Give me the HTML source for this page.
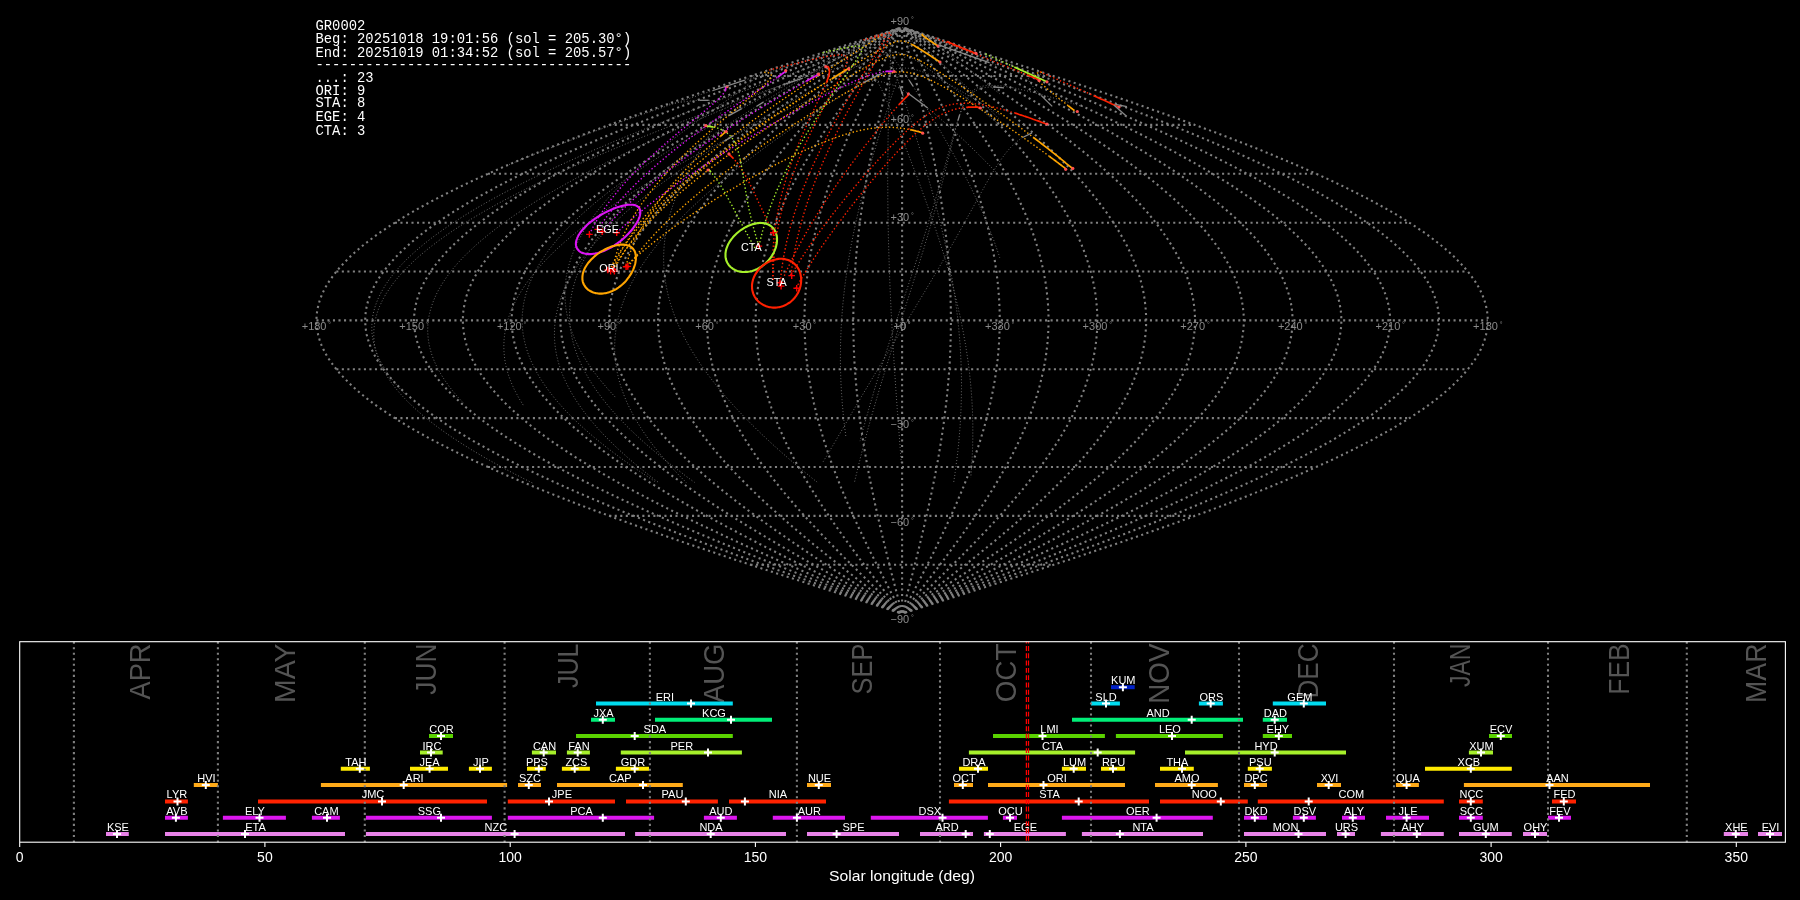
<!DOCTYPE html>
<html><head><meta charset="utf-8"><style>
html,body{margin:0;padding:0;background:#000;overflow:hidden}
svg{display:block;will-change:transform}

</style></head><body>
<svg width="1800" height="900" viewBox="0 0 1800 900" font-family="Liberation Sans, sans-serif">
<rect width="1800" height="900" fill="#000"/>
<g fill="none" stroke="#808080" stroke-width="2.08" stroke-dasharray="2.08 3.44"><path d="M750.5 564.8H1053.7"/><path d="M609.2 515.9H1195"/><path d="M487.9 467H1316.3"/><path d="M394.9 418.1H1409.3"/><path d="M336.3 369.3H1467.9"/><path d="M316.4 320.4H1487.8"/><path d="M336.3 271.5H1467.9"/><path d="M394.9 222.7H1409.3"/><path d="M487.9 173.8H1316.3"/><path d="M609.2 124.9H1195"/><path d="M750.5 76H1053.7"/><path d="M905.2 612.6L920.4 607.8L935.7 602.9L951 598L966.2 593.2L981.3 588.3L996.5 583.4L1011.5 578.5L1026.5 573.7L1041.4 568.8L1056.2 563.9L1070.9 559.1L1085.4 554.2L1099.9 549.3L1114.2 544.5L1128.4 539.6L1142.4 534.7L1156.2 529.8L1169.9 525L1183.4 520.1L1196.7 515.2L1209.8 510.4L1222.7 505.5L1235.4 500.6L1247.9 495.7L1260.1 490.9L1272.1 486L1283.8 481.1L1295.2 476.3L1306.4 471.4L1317.3 466.5L1328 461.7L1338.3 456.8L1348.4 451.9L1358.1 447L1367.6 442.2L1376.7 437.3L1385.5 432.4L1393.9 427.6L1402.1 422.7L1409.9 417.8L1417.3 412.9L1424.4 408.1L1431.1 403.2L1437.5 398.3L1443.5 393.5L1449.2 388.6L1454.4 383.7L1459.3 378.8L1463.9 374L1468 369.1L1471.7 364.2L1475.1 359.4L1478.1 354.5L1480.7 349.6L1482.8 344.8L1484.6 339.9L1486 335L1487 330.1L1487.6 325.3L1487.8 320.4L1487.6 315.5L1487 310.7L1486 305.8L1484.6 300.9L1482.8 296L1480.7 291.2L1478.1 286.3L1475.1 281.4L1471.7 276.6L1468 271.7L1463.9 266.8L1459.3 262L1454.4 257.1L1449.2 252.2L1443.5 247.3L1437.5 242.5L1431.1 237.6L1424.4 232.7L1417.3 227.9L1409.9 223L1402.1 218.1L1393.9 213.2L1385.5 208.4L1376.7 203.5L1367.6 198.6L1358.1 193.8L1348.4 188.9L1338.3 184L1328 179.1L1317.3 174.3L1306.4 169.4L1295.2 164.5L1283.8 159.7L1272.1 154.8L1260.1 149.9L1247.9 145.1L1235.4 140.2L1222.7 135.3L1209.8 130.4L1196.7 125.6L1183.4 120.7L1169.9 115.8L1156.2 111L1142.4 106.1L1128.4 101.2L1114.2 96.3L1099.9 91.5L1085.4 86.6L1070.9 81.7L1056.2 76.9L1041.4 72L1026.5 67.1L1011.5 62.3L996.5 57.4L981.3 52.5L966.2 47.6L951 42.8L935.7 37.9L920.4 33L905.2 28.2"/><path d="M904.9 612.6L918.9 607.8L932.9 602.9L946.9 598L960.8 593.2L974.7 588.3L988.6 583.4L1002.4 578.5L1016.1 573.7L1029.8 568.8L1043.3 563.9L1056.8 559.1L1070.2 554.2L1083.4 549.3L1096.5 544.5L1109.5 539.6L1122.4 534.7L1135.1 529.8L1147.6 525L1160 520.1L1172.2 515.2L1184.2 510.4L1196 505.5L1207.6 500.6L1219.1 495.7L1230.2 490.9L1241.2 486L1252 481.1L1262.5 476.3L1272.7 471.4L1282.7 466.5L1292.5 461.7L1302 456.8L1311.2 451.9L1320.1 447L1328.8 442.2L1337.1 437.3L1345.2 432.4L1353 427.6L1360.4 422.7L1367.5 417.8L1374.4 412.9L1380.9 408.1L1387 403.2L1392.9 398.3L1398.4 393.5L1403.6 388.6L1408.4 383.7L1412.9 378.8L1417 374L1420.8 369.1L1424.3 364.2L1427.4 359.4L1430.1 354.5L1432.4 349.6L1434.4 344.8L1436.1 339.9L1437.4 335L1438.3 330.1L1438.8 325.3L1439 320.4L1438.8 315.5L1438.3 310.7L1437.4 305.8L1436.1 300.9L1434.4 296L1432.4 291.2L1430.1 286.3L1427.4 281.4L1424.3 276.6L1420.8 271.7L1417 266.8L1412.9 262L1408.4 257.1L1403.6 252.2L1398.4 247.3L1392.9 242.5L1387 237.6L1380.9 232.7L1374.4 227.9L1367.5 223L1360.4 218.1L1353 213.2L1345.2 208.4L1337.1 203.5L1328.8 198.6L1320.1 193.8L1311.2 188.9L1302 184L1292.5 179.1L1282.7 174.3L1272.7 169.4L1262.5 164.5L1252 159.7L1241.2 154.8L1230.2 149.9L1219.1 145.1L1207.6 140.2L1196 135.3L1184.2 130.4L1172.2 125.6L1160 120.7L1147.6 115.8L1135.1 111L1122.4 106.1L1109.5 101.2L1096.5 96.3L1083.4 91.5L1070.2 86.6L1056.8 81.7L1043.3 76.9L1029.8 72L1016.1 67.1L1002.4 62.3L988.6 57.4L974.7 52.5L960.8 47.6L946.9 42.8L932.9 37.9L918.9 33L904.9 28.2"/><path d="M904.7 612.6L917.4 607.8L930.1 602.9L942.8 598L955.5 593.2L968.1 588.3L980.7 583.4L993.3 578.5L1005.7 573.7L1018.2 568.8L1030.5 563.9L1042.7 559.1L1054.9 554.2L1066.9 549.3L1078.8 544.5L1090.7 539.6L1102.3 534.7L1113.9 529.8L1125.3 525L1136.5 520.1L1147.6 515.2L1158.5 510.4L1169.3 505.5L1179.9 500.6L1190.2 495.7L1200.4 490.9L1210.4 486L1220.2 481.1L1229.7 476.3L1239 471.4L1248.1 466.5L1257 461.7L1265.6 456.8L1274 451.9L1282.1 447L1290 442.2L1297.6 437.3L1304.9 432.4L1312 427.6L1318.7 422.7L1325.2 417.8L1331.4 412.9L1337.3 408.1L1343 403.2L1348.3 398.3L1353.3 393.5L1358 388.6L1362.4 383.7L1366.5 378.8L1370.2 374L1373.7 369.1L1376.8 364.2L1379.6 359.4L1382.1 354.5L1384.2 349.6L1386.1 344.8L1387.5 339.9L1388.7 335L1389.5 330.1L1390 325.3L1390.2 320.4L1390 315.5L1389.5 310.7L1388.7 305.8L1387.5 300.9L1386.1 296L1384.2 291.2L1382.1 286.3L1379.6 281.4L1376.8 276.6L1373.7 271.7L1370.2 266.8L1366.5 262L1362.4 257.1L1358 252.2L1353.3 247.3L1348.3 242.5L1343 237.6L1337.3 232.7L1331.4 227.9L1325.2 223L1318.7 218.1L1312 213.2L1304.9 208.4L1297.6 203.5L1290 198.6L1282.1 193.8L1274 188.9L1265.6 184L1257 179.1L1248.1 174.3L1239 169.4L1229.7 164.5L1220.2 159.7L1210.4 154.8L1200.4 149.9L1190.2 145.1L1179.9 140.2L1169.3 135.3L1158.5 130.4L1147.6 125.6L1136.5 120.7L1125.3 115.8L1113.9 111L1102.3 106.1L1090.7 101.2L1078.8 96.3L1066.9 91.5L1054.9 86.6L1042.7 81.7L1030.5 76.9L1018.2 72L1005.7 67.1L993.3 62.3L980.7 57.4L968.1 52.5L955.5 47.6L942.8 42.8L930.1 37.9L917.4 33L904.7 28.2"/><path d="M904.4 612.6L915.9 607.8L927.3 602.9L938.7 598L950.2 593.2L961.5 588.3L972.9 583.4L984.2 578.5L995.4 573.7L1006.6 568.8L1017.6 563.9L1028.7 559.1L1039.6 554.2L1050.4 549.3L1061.2 544.5L1071.8 539.6L1082.3 534.7L1092.7 529.8L1103 525L1113.1 520.1L1123.1 515.2L1132.9 510.4L1142.6 505.5L1152.1 500.6L1161.4 495.7L1170.6 490.9L1179.6 486L1188.4 481.1L1197 476.3L1205.3 471.4L1213.5 466.5L1221.5 461.7L1229.3 456.8L1236.8 451.9L1244.1 447L1251.2 442.2L1258 437.3L1264.6 432.4L1271 427.6L1277.1 422.7L1282.9 417.8L1288.5 412.9L1293.8 408.1L1298.9 403.2L1303.7 398.3L1308.2 393.5L1312.4 388.6L1316.4 383.7L1320 378.8L1323.4 374L1326.5 369.1L1329.3 364.2L1331.9 359.4L1334.1 354.5L1336 349.6L1337.7 344.8L1339 339.9L1340 335L1340.8 330.1L1341.2 325.3L1341.4 320.4L1341.2 315.5L1340.8 310.7L1340 305.8L1339 300.9L1337.7 296L1336 291.2L1334.1 286.3L1331.9 281.4L1329.3 276.6L1326.5 271.7L1323.4 266.8L1320 262L1316.4 257.1L1312.4 252.2L1308.2 247.3L1303.7 242.5L1298.9 237.6L1293.8 232.7L1288.5 227.9L1282.9 223L1277.1 218.1L1271 213.2L1264.6 208.4L1258 203.5L1251.2 198.6L1244.1 193.8L1236.8 188.9L1229.3 184L1221.5 179.1L1213.5 174.3L1205.3 169.4L1197 164.5L1188.4 159.7L1179.6 154.8L1170.6 149.9L1161.4 145.1L1152.1 140.2L1142.6 135.3L1132.9 130.4L1123.1 125.6L1113.1 120.7L1103 115.8L1092.7 111L1082.3 106.1L1071.8 101.2L1061.2 96.3L1050.4 91.5L1039.6 86.6L1028.7 81.7L1017.6 76.9L1006.6 72L995.4 67.1L984.2 62.3L972.9 57.4L961.5 52.5L950.2 47.6L938.7 42.8L927.3 37.9L915.9 33L904.4 28.2"/><path d="M904.1 612.6L914.3 607.8L924.5 602.9L934.7 598L944.8 593.2L954.9 588.3L965 583.4L975 578.5L985 573.7L994.9 568.8L1004.8 563.9L1014.6 559.1L1024.3 554.2L1034 549.3L1043.5 544.5L1052.9 539.6L1062.3 534.7L1071.5 529.8L1080.6 525L1089.6 520.1L1098.5 515.2L1107.3 510.4L1115.9 505.5L1124.3 500.6L1132.6 495.7L1140.8 490.9L1148.7 486L1156.6 481.1L1164.2 476.3L1171.7 471.4L1178.9 466.5L1186 461.7L1192.9 456.8L1199.6 451.9L1206.1 447L1212.4 442.2L1218.5 437.3L1224.3 432.4L1230 427.6L1235.4 422.7L1240.6 417.8L1245.6 412.9L1250.3 408.1L1254.8 403.2L1259 398.3L1263.1 393.5L1266.8 388.6L1270.3 383.7L1273.6 378.8L1276.6 374L1279.4 369.1L1281.9 364.2L1284.1 359.4L1286.1 354.5L1287.8 349.6L1289.3 344.8L1290.5 339.9L1291.4 335L1292 330.1L1292.4 325.3L1292.6 320.4L1292.4 315.5L1292 310.7L1291.4 305.8L1290.5 300.9L1289.3 296L1287.8 291.2L1286.1 286.3L1284.1 281.4L1281.9 276.6L1279.4 271.7L1276.6 266.8L1273.6 262L1270.3 257.1L1266.8 252.2L1263.1 247.3L1259 242.5L1254.8 237.6L1250.3 232.7L1245.6 227.9L1240.6 223L1235.4 218.1L1230 213.2L1224.3 208.4L1218.5 203.5L1212.4 198.6L1206.1 193.8L1199.6 188.9L1192.9 184L1186 179.1L1178.9 174.3L1171.7 169.4L1164.2 164.5L1156.6 159.7L1148.7 154.8L1140.8 149.9L1132.6 145.1L1124.3 140.2L1115.9 135.3L1107.3 130.4L1098.5 125.6L1089.6 120.7L1080.6 115.8L1071.5 111L1062.3 106.1L1052.9 101.2L1043.5 96.3L1034 91.5L1024.3 86.6L1014.6 81.7L1004.8 76.9L994.9 72L985 67.1L975 62.3L965 57.4L954.9 52.5L944.8 47.6L934.7 42.8L924.5 37.9L914.3 33L904.1 28.2"/><path d="M903.9 612.6L912.8 607.8L921.7 602.9L930.6 598L939.5 593.2L948.3 588.3L957.1 583.4L965.9 578.5L974.7 573.7L983.3 568.8L992 563.9L1000.5 559.1L1009 554.2L1017.5 549.3L1025.8 544.5L1034.1 539.6L1042.3 534.7L1050.3 529.8L1058.3 525L1066.2 520.1L1074 515.2L1081.6 510.4L1089.1 505.5L1096.5 500.6L1103.8 495.7L1110.9 490.9L1117.9 486L1124.7 481.1L1131.4 476.3L1138 471.4L1144.3 466.5L1150.5 461.7L1156.6 456.8L1162.4 451.9L1168.1 447L1173.6 442.2L1178.9 437.3L1184.1 432.4L1189 427.6L1193.7 422.7L1198.3 417.8L1202.6 412.9L1206.8 408.1L1210.7 403.2L1214.4 398.3L1217.9 393.5L1221.2 388.6L1224.3 383.7L1227.2 378.8L1229.8 374L1232.2 369.1L1234.4 364.2L1236.4 359.4L1238.1 354.5L1239.6 349.6L1240.9 344.8L1241.9 339.9L1242.7 335L1243.3 330.1L1243.7 325.3L1243.8 320.4L1243.7 315.5L1243.3 310.7L1242.7 305.8L1241.9 300.9L1240.9 296L1239.6 291.2L1238.1 286.3L1236.4 281.4L1234.4 276.6L1232.2 271.7L1229.8 266.8L1227.2 262L1224.3 257.1L1221.2 252.2L1217.9 247.3L1214.4 242.5L1210.7 237.6L1206.8 232.7L1202.6 227.9L1198.3 223L1193.7 218.1L1189 213.2L1184.1 208.4L1178.9 203.5L1173.6 198.6L1168.1 193.8L1162.4 188.9L1156.6 184L1150.5 179.1L1144.3 174.3L1138 169.4L1131.4 164.5L1124.7 159.7L1117.9 154.8L1110.9 149.9L1103.8 145.1L1096.5 140.2L1089.1 135.3L1081.6 130.4L1074 125.6L1066.2 120.7L1058.3 115.8L1050.3 111L1042.3 106.1L1034.1 101.2L1025.8 96.3L1017.5 91.5L1009 86.6L1000.5 81.7L992 76.9L983.3 72L974.7 67.1L965.9 62.3L957.1 57.4L948.3 52.5L939.5 47.6L930.6 42.8L921.7 37.9L912.8 33L903.9 28.2"/><path d="M903.6 612.6L911.3 607.8L918.9 602.9L926.5 598L934.1 593.2L941.7 588.3L949.3 583.4L956.8 578.5L964.3 573.7L971.7 568.8L979.1 563.9L986.5 559.1L993.8 554.2L1001 549.3L1008.1 544.5L1015.2 539.6L1022.2 534.7L1029.2 529.8L1036 525L1042.8 520.1L1049.4 515.2L1056 510.4L1062.4 505.5L1068.8 500.6L1075 495.7L1081.1 490.9L1087.1 486L1092.9 481.1L1098.7 476.3L1104.3 471.4L1109.7 466.5L1115 461.7L1120.2 456.8L1125.2 451.9L1130.1 447L1134.8 442.2L1139.4 437.3L1143.8 432.4L1148 427.6L1152.1 422.7L1156 417.8L1159.7 412.9L1163.2 408.1L1166.6 403.2L1169.8 398.3L1172.8 393.5L1175.6 388.6L1178.3 383.7L1180.7 378.8L1183 374L1185 369.1L1186.9 364.2L1188.6 359.4L1190.1 354.5L1191.4 349.6L1192.5 344.8L1193.4 339.9L1194.1 335L1194.6 330.1L1194.9 325.3L1195 320.4L1194.9 315.5L1194.6 310.7L1194.1 305.8L1193.4 300.9L1192.5 296L1191.4 291.2L1190.1 286.3L1188.6 281.4L1186.9 276.6L1185 271.7L1183 266.8L1180.7 262L1178.3 257.1L1175.6 252.2L1172.8 247.3L1169.8 242.5L1166.6 237.6L1163.2 232.7L1159.7 227.9L1156 223L1152.1 218.1L1148 213.2L1143.8 208.4L1139.4 203.5L1134.8 198.6L1130.1 193.8L1125.2 188.9L1120.2 184L1115 179.1L1109.7 174.3L1104.3 169.4L1098.7 164.5L1092.9 159.7L1087.1 154.8L1081.1 149.9L1075 145.1L1068.8 140.2L1062.4 135.3L1056 130.4L1049.4 125.6L1042.8 120.7L1036 115.8L1029.2 111L1022.2 106.1L1015.2 101.2L1008.1 96.3L1001 91.5L993.8 86.6L986.5 81.7L979.1 76.9L971.7 72L964.3 67.1L956.8 62.3L949.3 57.4L941.7 52.5L934.1 47.6L926.5 42.8L918.9 37.9L911.3 33L903.6 28.2"/><path d="M903.4 612.6L909.7 607.8L916.1 602.9L922.5 598L928.8 593.2L935.1 588.3L941.4 583.4L947.7 578.5L953.9 573.7L960.1 568.8L966.3 563.9L972.4 559.1L978.5 554.2L984.5 549.3L990.5 544.5L996.4 539.6L1002.2 534.7L1008 529.8L1013.7 525L1019.3 520.1L1024.9 515.2L1030.3 510.4L1035.7 505.5L1041 500.6L1046.2 495.7L1051.3 490.9L1056.2 486L1061.1 481.1L1065.9 476.3L1070.6 471.4L1075.1 466.5L1079.6 461.7L1083.9 456.8L1088.1 451.9L1092.1 447L1096 442.2L1099.8 437.3L1103.5 432.4L1107 427.6L1110.4 422.7L1113.7 417.8L1116.8 412.9L1119.7 408.1L1122.5 403.2L1125.2 398.3L1127.7 393.5L1130 388.6L1132.2 383.7L1134.3 378.8L1136.2 374L1137.9 369.1L1139.5 364.2L1140.9 359.4L1142.1 354.5L1143.2 349.6L1144.1 344.8L1144.8 339.9L1145.4 335L1145.8 330.1L1146.1 325.3L1146.2 320.4L1146.1 315.5L1145.8 310.7L1145.4 305.8L1144.8 300.9L1144.1 296L1143.2 291.2L1142.1 286.3L1140.9 281.4L1139.5 276.6L1137.9 271.7L1136.2 266.8L1134.3 262L1132.2 257.1L1130 252.2L1127.7 247.3L1125.2 242.5L1122.5 237.6L1119.7 232.7L1116.8 227.9L1113.7 223L1110.4 218.1L1107 213.2L1103.5 208.4L1099.8 203.5L1096 198.6L1092.1 193.8L1088.1 188.9L1083.9 184L1079.6 179.1L1075.1 174.3L1070.6 169.4L1065.9 164.5L1061.1 159.7L1056.2 154.8L1051.3 149.9L1046.2 145.1L1041 140.2L1035.7 135.3L1030.3 130.4L1024.9 125.6L1019.3 120.7L1013.7 115.8L1008 111L1002.2 106.1L996.4 101.2L990.5 96.3L984.5 91.5L978.5 86.6L972.4 81.7L966.3 76.9L960.1 72L953.9 67.1L947.7 62.3L941.4 57.4L935.1 52.5L928.8 47.6L922.5 42.8L916.1 37.9L909.7 33L903.4 28.2"/><path d="M903.1 612.6L908.2 607.8L913.3 602.9L918.4 598L923.5 593.2L928.5 588.3L933.6 583.4L938.6 578.5L943.6 573.7L948.5 568.8L953.5 563.9L958.4 559.1L963.2 554.2L968 549.3L972.8 544.5L977.5 539.6L982.2 534.7L986.8 529.8L991.4 525L995.9 520.1L1000.3 515.2L1004.7 510.4L1009 505.5L1013.2 500.6L1017.4 495.7L1021.4 490.9L1025.4 486L1029.3 481.1L1033.1 476.3L1036.9 471.4L1040.5 466.5L1044.1 461.7L1047.5 456.8L1050.9 451.9L1054.1 447L1057.3 442.2L1060.3 437.3L1063.2 432.4L1066 427.6L1068.8 422.7L1071.4 417.8L1073.8 412.9L1076.2 408.1L1078.4 403.2L1080.6 398.3L1082.6 393.5L1084.5 388.6L1086.2 383.7L1087.8 378.8L1089.4 374L1090.7 369.1L1092 364.2L1093.1 359.4L1094.1 354.5L1095 349.6L1095.7 344.8L1096.3 339.9L1096.7 335L1097.1 330.1L1097.3 325.3L1097.3 320.4L1097.3 315.5L1097.1 310.7L1096.7 305.8L1096.3 300.9L1095.7 296L1095 291.2L1094.1 286.3L1093.1 281.4L1092 276.6L1090.7 271.7L1089.4 266.8L1087.8 262L1086.2 257.1L1084.5 252.2L1082.6 247.3L1080.6 242.5L1078.4 237.6L1076.2 232.7L1073.8 227.9L1071.4 223L1068.8 218.1L1066 213.2L1063.2 208.4L1060.3 203.5L1057.3 198.6L1054.1 193.8L1050.9 188.9L1047.5 184L1044.1 179.1L1040.5 174.3L1036.9 169.4L1033.1 164.5L1029.3 159.7L1025.4 154.8L1021.4 149.9L1017.4 145.1L1013.2 140.2L1009 135.3L1004.7 130.4L1000.3 125.6L995.9 120.7L991.4 115.8L986.8 111L982.2 106.1L977.5 101.2L972.8 96.3L968 91.5L963.2 86.6L958.4 81.7L953.5 76.9L948.5 72L943.6 67.1L938.6 62.3L933.6 57.4L928.5 52.5L923.5 47.6L918.4 42.8L913.3 37.9L908.2 33L903.1 28.2"/><path d="M902.9 612.6L906.7 607.8L910.5 602.9L914.3 598L918.1 593.2L921.9 588.3L925.7 583.4L929.5 578.5L933.2 573.7L936.9 568.8L940.6 563.9L944.3 559.1L947.9 554.2L951.5 549.3L955.1 544.5L958.7 539.6L962.2 534.7L965.6 529.8L969.1 525L972.4 520.1L975.8 515.2L979 510.4L982.3 505.5L985.4 500.6L988.5 495.7L991.6 490.9L994.6 486L997.5 481.1L1000.4 476.3L1003.2 471.4L1005.9 466.5L1008.6 461.7L1011.2 456.8L1013.7 451.9L1016.1 447L1018.5 442.2L1020.7 437.3L1022.9 432.4L1025.1 427.6L1027.1 422.7L1029 417.8L1030.9 412.9L1032.7 408.1L1034.4 403.2L1036 398.3L1037.5 393.5L1038.9 388.6L1040.2 383.7L1041.4 378.8L1042.5 374L1043.6 369.1L1044.5 364.2L1045.4 359.4L1046.1 354.5L1046.7 349.6L1047.3 344.8L1047.7 339.9L1048.1 335L1048.3 330.1L1048.5 325.3L1048.5 320.4L1048.5 315.5L1048.3 310.7L1048.1 305.8L1047.7 300.9L1047.3 296L1046.7 291.2L1046.1 286.3L1045.4 281.4L1044.5 276.6L1043.6 271.7L1042.5 266.8L1041.4 262L1040.2 257.1L1038.9 252.2L1037.5 247.3L1036 242.5L1034.4 237.6L1032.7 232.7L1030.9 227.9L1029 223L1027.1 218.1L1025.1 213.2L1022.9 208.4L1020.7 203.5L1018.5 198.6L1016.1 193.8L1013.7 188.9L1011.2 184L1008.6 179.1L1005.9 174.3L1003.2 169.4L1000.4 164.5L997.5 159.7L994.6 154.8L991.6 149.9L988.5 145.1L985.4 140.2L982.3 135.3L979 130.4L975.8 125.6L972.4 120.7L969.1 115.8L965.6 111L962.2 106.1L958.7 101.2L955.1 96.3L951.5 91.5L947.9 86.6L944.3 81.7L940.6 76.9L936.9 72L933.2 67.1L929.5 62.3L925.7 57.4L921.9 52.5L918.1 47.6L914.3 42.8L910.5 37.9L906.7 33L902.9 28.2"/><path d="M902.6 612.6L905.2 607.8L907.7 602.9L910.2 598L912.8 593.2L915.3 588.3L917.8 583.4L920.3 578.5L922.8 573.7L925.3 568.8L927.8 563.9L930.2 559.1L932.7 554.2L935.1 549.3L937.4 544.5L939.8 539.6L942.1 534.7L944.5 529.8L946.7 525L949 520.1L951.2 515.2L953.4 510.4L955.5 505.5L957.7 500.6L959.7 495.7L961.8 490.9L963.8 486L965.7 481.1L967.6 476.3L969.5 471.4L971.3 466.5L973.1 461.7L974.8 456.8L976.5 451.9L978.1 447L979.7 442.2L981.2 437.3L982.7 432.4L984.1 427.6L985.4 422.7L986.7 417.8L988 412.9L989.1 408.1L990.3 403.2L991.3 398.3L992.3 393.5L993.3 388.6L994.2 383.7L995 378.8L995.7 374L996.4 369.1L997 364.2L997.6 359.4L998.1 354.5L998.5 349.6L998.9 344.8L999.2 339.9L999.4 335L999.6 330.1L999.7 325.3L999.7 320.4L999.7 315.5L999.6 310.7L999.4 305.8L999.2 300.9L998.9 296L998.5 291.2L998.1 286.3L997.6 281.4L997 276.6L996.4 271.7L995.7 266.8L995 262L994.2 257.1L993.3 252.2L992.3 247.3L991.3 242.5L990.3 237.6L989.1 232.7L988 227.9L986.7 223L985.4 218.1L984.1 213.2L982.7 208.4L981.2 203.5L979.7 198.6L978.1 193.8L976.5 188.9L974.8 184L973.1 179.1L971.3 174.3L969.5 169.4L967.6 164.5L965.7 159.7L963.8 154.8L961.8 149.9L959.7 145.1L957.7 140.2L955.5 135.3L953.4 130.4L951.2 125.6L949 120.7L946.7 115.8L944.5 111L942.1 106.1L939.8 101.2L937.4 96.3L935.1 91.5L932.7 86.6L930.2 81.7L927.8 76.9L925.3 72L922.8 67.1L920.3 62.3L917.8 57.4L915.3 52.5L912.8 47.6L910.2 42.8L907.7 37.9L905.2 33L902.6 28.2"/><path d="M902.4 612.6L903.6 607.8L904.9 602.9L906.2 598L907.4 593.2L908.7 588.3L910 583.4L911.2 578.5L912.5 573.7L913.7 568.8L914.9 563.9L916.2 559.1L917.4 554.2L918.6 549.3L919.8 544.5L921 539.6L922.1 534.7L923.3 529.8L924.4 525L925.5 520.1L926.7 515.2L927.7 510.4L928.8 505.5L929.9 500.6L930.9 495.7L931.9 490.9L932.9 486L933.9 481.1L934.9 476.3L935.8 471.4L936.7 466.5L937.6 461.7L938.5 456.8L939.3 451.9L940.1 447L940.9 442.2L941.6 437.3L942.4 432.4L943.1 427.6L943.8 422.7L944.4 417.8L945 412.9L945.6 408.1L946.2 403.2L946.7 398.3L947.2 393.5L947.7 388.6L948.1 383.7L948.5 378.8L948.9 374L949.3 369.1L949.6 364.2L949.9 359.4L950.1 354.5L950.3 349.6L950.5 344.8L950.6 339.9L950.8 335L950.8 330.1L950.9 325.3L950.9 320.4L950.9 315.5L950.8 310.7L950.8 305.8L950.6 300.9L950.5 296L950.3 291.2L950.1 286.3L949.9 281.4L949.6 276.6L949.3 271.7L948.9 266.8L948.5 262L948.1 257.1L947.7 252.2L947.2 247.3L946.7 242.5L946.2 237.6L945.6 232.7L945 227.9L944.4 223L943.8 218.1L943.1 213.2L942.4 208.4L941.6 203.5L940.9 198.6L940.1 193.8L939.3 188.9L938.5 184L937.6 179.1L936.7 174.3L935.8 169.4L934.9 164.5L933.9 159.7L932.9 154.8L931.9 149.9L930.9 145.1L929.9 140.2L928.8 135.3L927.7 130.4L926.7 125.6L925.5 120.7L924.4 115.8L923.3 111L922.1 106.1L921 101.2L919.8 96.3L918.6 91.5L917.4 86.6L916.2 81.7L914.9 76.9L913.7 72L912.5 67.1L911.2 62.3L910 57.4L908.7 52.5L907.4 47.6L906.2 42.8L904.9 37.9L903.6 33L902.4 28.2"/><path d="M902.1 612.6L902.1 607.8L902.1 602.9L902.1 598L902.1 593.2L902.1 588.3L902.1 583.4L902.1 578.5L902.1 573.7L902.1 568.8L902.1 563.9L902.1 559.1L902.1 554.2L902.1 549.3L902.1 544.5L902.1 539.6L902.1 534.7L902.1 529.8L902.1 525L902.1 520.1L902.1 515.2L902.1 510.4L902.1 505.5L902.1 500.6L902.1 495.7L902.1 490.9L902.1 486L902.1 481.1L902.1 476.3L902.1 471.4L902.1 466.5L902.1 461.7L902.1 456.8L902.1 451.9L902.1 447L902.1 442.2L902.1 437.3L902.1 432.4L902.1 427.6L902.1 422.7L902.1 417.8L902.1 412.9L902.1 408.1L902.1 403.2L902.1 398.3L902.1 393.5L902.1 388.6L902.1 383.7L902.1 378.8L902.1 374L902.1 369.1L902.1 364.2L902.1 359.4L902.1 354.5L902.1 349.6L902.1 344.8L902.1 339.9L902.1 335L902.1 330.1L902.1 325.3L902.1 320.4L902.1 315.5L902.1 310.7L902.1 305.8L902.1 300.9L902.1 296L902.1 291.2L902.1 286.3L902.1 281.4L902.1 276.6L902.1 271.7L902.1 266.8L902.1 262L902.1 257.1L902.1 252.2L902.1 247.3L902.1 242.5L902.1 237.6L902.1 232.7L902.1 227.9L902.1 223L902.1 218.1L902.1 213.2L902.1 208.4L902.1 203.5L902.1 198.6L902.1 193.8L902.1 188.9L902.1 184L902.1 179.1L902.1 174.3L902.1 169.4L902.1 164.5L902.1 159.7L902.1 154.8L902.1 149.9L902.1 145.1L902.1 140.2L902.1 135.3L902.1 130.4L902.1 125.6L902.1 120.7L902.1 115.8L902.1 111L902.1 106.1L902.1 101.2L902.1 96.3L902.1 91.5L902.1 86.6L902.1 81.7L902.1 76.9L902.1 72L902.1 67.1L902.1 62.3L902.1 57.4L902.1 52.5L902.1 47.6L902.1 42.8L902.1 37.9L902.1 33L902.1 28.2"/><path d="M901.8 612.6L900.6 607.8L899.3 602.9L898 598L896.8 593.2L895.5 588.3L894.2 583.4L893 578.5L891.7 573.7L890.5 568.8L889.3 563.9L888 559.1L886.8 554.2L885.6 549.3L884.4 544.5L883.2 539.6L882.1 534.7L880.9 529.8L879.8 525L878.7 520.1L877.5 515.2L876.5 510.4L875.4 505.5L874.3 500.6L873.3 495.7L872.3 490.9L871.3 486L870.3 481.1L869.3 476.3L868.4 471.4L867.5 466.5L866.6 461.7L865.7 456.8L864.9 451.9L864.1 447L863.3 442.2L862.6 437.3L861.8 432.4L861.1 427.6L860.4 422.7L859.8 417.8L859.2 412.9L858.6 408.1L858 403.2L857.5 398.3L857 393.5L856.5 388.6L856.1 383.7L855.7 378.8L855.3 374L854.9 369.1L854.6 364.2L854.3 359.4L854.1 354.5L853.9 349.6L853.7 344.8L853.6 339.9L853.4 335L853.4 330.1L853.3 325.3L853.3 320.4L853.3 315.5L853.4 310.7L853.4 305.8L853.6 300.9L853.7 296L853.9 291.2L854.1 286.3L854.3 281.4L854.6 276.6L854.9 271.7L855.3 266.8L855.7 262L856.1 257.1L856.5 252.2L857 247.3L857.5 242.5L858 237.6L858.6 232.7L859.2 227.9L859.8 223L860.4 218.1L861.1 213.2L861.8 208.4L862.6 203.5L863.3 198.6L864.1 193.8L864.9 188.9L865.7 184L866.6 179.1L867.5 174.3L868.4 169.4L869.3 164.5L870.3 159.7L871.3 154.8L872.3 149.9L873.3 145.1L874.3 140.2L875.4 135.3L876.5 130.4L877.5 125.6L878.7 120.7L879.8 115.8L880.9 111L882.1 106.1L883.2 101.2L884.4 96.3L885.6 91.5L886.8 86.6L888 81.7L889.3 76.9L890.5 72L891.7 67.1L893 62.3L894.2 57.4L895.5 52.5L896.8 47.6L898 42.8L899.3 37.9L900.6 33L901.8 28.2"/><path d="M901.6 612.6L899 607.8L896.5 602.9L894 598L891.4 593.2L888.9 588.3L886.4 583.4L883.9 578.5L881.4 573.7L878.9 568.8L876.4 563.9L874 559.1L871.5 554.2L869.1 549.3L866.8 544.5L864.4 539.6L862.1 534.7L859.7 529.8L857.5 525L855.2 520.1L853 515.2L850.8 510.4L848.7 505.5L846.5 500.6L844.5 495.7L842.4 490.9L840.4 486L838.5 481.1L836.6 476.3L834.7 471.4L832.9 466.5L831.1 461.7L829.4 456.8L827.7 451.9L826.1 447L824.5 442.2L823 437.3L821.5 432.4L820.1 427.6L818.8 422.7L817.5 417.8L816.2 412.9L815.1 408.1L813.9 403.2L812.9 398.3L811.9 393.5L810.9 388.6L810 383.7L809.2 378.8L808.5 374L807.8 369.1L807.2 364.2L806.6 359.4L806.1 354.5L805.7 349.6L805.3 344.8L805 339.9L804.8 335L804.6 330.1L804.5 325.3L804.5 320.4L804.5 315.5L804.6 310.7L804.8 305.8L805 300.9L805.3 296L805.7 291.2L806.1 286.3L806.6 281.4L807.2 276.6L807.8 271.7L808.5 266.8L809.2 262L810 257.1L810.9 252.2L811.9 247.3L812.9 242.5L813.9 237.6L815.1 232.7L816.2 227.9L817.5 223L818.8 218.1L820.1 213.2L821.5 208.4L823 203.5L824.5 198.6L826.1 193.8L827.7 188.9L829.4 184L831.1 179.1L832.9 174.3L834.7 169.4L836.6 164.5L838.5 159.7L840.4 154.8L842.4 149.9L844.5 145.1L846.5 140.2L848.7 135.3L850.8 130.4L853 125.6L855.2 120.7L857.5 115.8L859.7 111L862.1 106.1L864.4 101.2L866.8 96.3L869.1 91.5L871.5 86.6L874 81.7L876.4 76.9L878.9 72L881.4 67.1L883.9 62.3L886.4 57.4L888.9 52.5L891.4 47.6L894 42.8L896.5 37.9L899 33L901.6 28.2"/><path d="M901.3 612.6L897.5 607.8L893.7 602.9L889.9 598L886.1 593.2L882.3 588.3L878.5 583.4L874.7 578.5L871 573.7L867.3 568.8L863.6 563.9L859.9 559.1L856.3 554.2L852.7 549.3L849.1 544.5L845.5 539.6L842 534.7L838.6 529.8L835.1 525L831.8 520.1L828.4 515.2L825.2 510.4L821.9 505.5L818.8 500.6L815.7 495.7L812.6 490.9L809.6 486L806.7 481.1L803.8 476.3L801 471.4L798.3 466.5L795.6 461.7L793 456.8L790.5 451.9L788.1 447L785.7 442.2L783.5 437.3L781.3 432.4L779.1 427.6L777.1 422.7L775.2 417.8L773.3 412.9L771.5 408.1L769.8 403.2L768.2 398.3L766.7 393.5L765.3 388.6L764 383.7L762.8 378.8L761.7 374L760.6 369.1L759.7 364.2L758.8 359.4L758.1 354.5L757.5 349.6L756.9 344.8L756.5 339.9L756.1 335L755.9 330.1L755.7 325.3L755.7 320.4L755.7 315.5L755.9 310.7L756.1 305.8L756.5 300.9L756.9 296L757.5 291.2L758.1 286.3L758.8 281.4L759.7 276.6L760.6 271.7L761.7 266.8L762.8 262L764 257.1L765.3 252.2L766.7 247.3L768.2 242.5L769.8 237.6L771.5 232.7L773.3 227.9L775.2 223L777.1 218.1L779.1 213.2L781.3 208.4L783.5 203.5L785.7 198.6L788.1 193.8L790.5 188.9L793 184L795.6 179.1L798.3 174.3L801 169.4L803.8 164.5L806.7 159.7L809.6 154.8L812.6 149.9L815.7 145.1L818.8 140.2L821.9 135.3L825.2 130.4L828.4 125.6L831.8 120.7L835.1 115.8L838.6 111L842 106.1L845.5 101.2L849.1 96.3L852.7 91.5L856.3 86.6L859.9 81.7L863.6 76.9L867.3 72L871 67.1L874.7 62.3L878.5 57.4L882.3 52.5L886.1 47.6L889.9 42.8L893.7 37.9L897.5 33L901.3 28.2"/><path d="M901.1 612.6L896 607.8L890.9 602.9L885.8 598L880.7 593.2L875.7 588.3L870.6 583.4L865.6 578.5L860.6 573.7L855.7 568.8L850.7 563.9L845.8 559.1L841 554.2L836.2 549.3L831.4 544.5L826.7 539.6L822 534.7L817.4 529.8L812.8 525L808.3 520.1L803.9 515.2L799.5 510.4L795.2 505.5L791 500.6L786.8 495.7L782.8 490.9L778.8 486L774.9 481.1L771.1 476.3L767.3 471.4L763.7 466.5L760.1 461.7L756.7 456.8L753.3 451.9L750.1 447L746.9 442.2L743.9 437.3L741 432.4L738.2 427.6L735.4 422.7L732.8 417.8L730.4 412.9L728 408.1L725.8 403.2L723.6 398.3L721.6 393.5L719.7 388.6L718 383.7L716.4 378.8L714.8 374L713.5 369.1L712.2 364.2L711.1 359.4L710.1 354.5L709.2 349.6L708.5 344.8L707.9 339.9L707.5 335L707.1 330.1L706.9 325.3L706.9 320.4L706.9 315.5L707.1 310.7L707.5 305.8L707.9 300.9L708.5 296L709.2 291.2L710.1 286.3L711.1 281.4L712.2 276.6L713.5 271.7L714.8 266.8L716.4 262L718 257.1L719.7 252.2L721.6 247.3L723.6 242.5L725.8 237.6L728 232.7L730.4 227.9L732.8 223L735.4 218.1L738.2 213.2L741 208.4L743.9 203.5L746.9 198.6L750.1 193.8L753.3 188.9L756.7 184L760.1 179.1L763.7 174.3L767.3 169.4L771.1 164.5L774.9 159.7L778.8 154.8L782.8 149.9L786.8 145.1L791 140.2L795.2 135.3L799.5 130.4L803.9 125.6L808.3 120.7L812.8 115.8L817.4 111L822 106.1L826.7 101.2L831.4 96.3L836.2 91.5L841 86.6L845.8 81.7L850.7 76.9L855.7 72L860.6 67.1L865.6 62.3L870.6 57.4L875.7 52.5L880.7 47.6L885.8 42.8L890.9 37.9L896 33L901.1 28.2"/><path d="M900.8 612.6L894.5 607.8L888.1 602.9L881.7 598L875.4 593.2L869.1 588.3L862.8 583.4L856.5 578.5L850.3 573.7L844.1 568.8L837.9 563.9L831.8 559.1L825.7 554.2L819.7 549.3L813.7 544.5L807.8 539.6L802 534.7L796.2 529.8L790.5 525L784.9 520.1L779.3 515.2L773.9 510.4L768.5 505.5L763.2 500.6L758 495.7L752.9 490.9L748 486L743.1 481.1L738.3 476.3L733.6 471.4L729.1 466.5L724.6 461.7L720.3 456.8L716.1 451.9L712.1 447L708.2 442.2L704.4 437.3L700.7 432.4L697.2 427.6L693.8 422.7L690.5 417.8L687.4 412.9L684.5 408.1L681.7 403.2L679 398.3L676.5 393.5L674.2 388.6L672 383.7L669.9 378.8L668 374L666.3 369.1L664.7 364.2L663.3 359.4L662.1 354.5L661 349.6L660.1 344.8L659.4 339.9L658.8 335L658.4 330.1L658.1 325.3L658 320.4L658.1 315.5L658.4 310.7L658.8 305.8L659.4 300.9L660.1 296L661 291.2L662.1 286.3L663.3 281.4L664.7 276.6L666.3 271.7L668 266.8L669.9 262L672 257.1L674.2 252.2L676.5 247.3L679 242.5L681.7 237.6L684.5 232.7L687.4 227.9L690.5 223L693.8 218.1L697.2 213.2L700.7 208.4L704.4 203.5L708.2 198.6L712.1 193.8L716.1 188.9L720.3 184L724.6 179.1L729.1 174.3L733.6 169.4L738.3 164.5L743.1 159.7L748 154.8L752.9 149.9L758 145.1L763.2 140.2L768.5 135.3L773.9 130.4L779.3 125.6L784.9 120.7L790.5 115.8L796.2 111L802 106.1L807.8 101.2L813.7 96.3L819.7 91.5L825.7 86.6L831.8 81.7L837.9 76.9L844.1 72L850.3 67.1L856.5 62.3L862.8 57.4L869.1 52.5L875.4 47.6L881.7 42.8L888.1 37.9L894.5 33L900.8 28.2"/><path d="M900.6 612.6L892.9 607.8L885.3 602.9L877.7 598L870.1 593.2L862.5 588.3L854.9 583.4L847.4 578.5L839.9 573.7L832.5 568.8L825.1 563.9L817.7 559.1L810.4 554.2L803.2 549.3L796.1 544.5L789 539.6L782 534.7L775 529.8L768.2 525L761.4 520.1L754.8 515.2L748.2 510.4L741.8 505.5L735.4 500.6L729.2 495.7L723.1 490.9L717.1 486L711.3 481.1L705.5 476.3L699.9 471.4L694.5 466.5L689.2 461.7L684 456.8L679 451.9L674.1 447L669.4 442.2L664.8 437.3L660.4 432.4L656.2 427.6L652.1 422.7L648.2 417.8L644.5 412.9L641 408.1L637.6 403.2L634.4 398.3L631.4 393.5L628.6 388.6L625.9 383.7L623.5 378.8L621.2 374L619.2 369.1L617.3 364.2L615.6 359.4L614.1 354.5L612.8 349.6L611.7 344.8L610.8 339.9L610.1 335L609.6 330.1L609.3 325.3L609.2 320.4L609.3 315.5L609.6 310.7L610.1 305.8L610.8 300.9L611.7 296L612.8 291.2L614.1 286.3L615.6 281.4L617.3 276.6L619.2 271.7L621.2 266.8L623.5 262L625.9 257.1L628.6 252.2L631.4 247.3L634.4 242.5L637.6 237.6L641 232.7L644.5 227.9L648.2 223L652.1 218.1L656.2 213.2L660.4 208.4L664.8 203.5L669.4 198.6L674.1 193.8L679 188.9L684 184L689.2 179.1L694.5 174.3L699.9 169.4L705.5 164.5L711.3 159.7L717.1 154.8L723.1 149.9L729.2 145.1L735.4 140.2L741.8 135.3L748.2 130.4L754.8 125.6L761.4 120.7L768.2 115.8L775 111L782 106.1L789 101.2L796.1 96.3L803.2 91.5L810.4 86.6L817.7 81.7L825.1 76.9L832.5 72L839.9 67.1L847.4 62.3L854.9 57.4L862.5 52.5L870.1 47.6L877.7 42.8L885.3 37.9L892.9 33L900.6 28.2"/><path d="M900.3 612.6L891.4 607.8L882.5 602.9L873.6 598L864.7 593.2L855.9 588.3L847.1 583.4L838.3 578.5L829.5 573.7L820.9 568.8L812.2 563.9L803.7 559.1L795.2 554.2L786.7 549.3L778.4 544.5L770.1 539.6L761.9 534.7L753.9 529.8L745.9 525L738 520.1L730.2 515.2L722.6 510.4L715.1 505.5L707.7 500.6L700.4 495.7L693.3 490.9L686.3 486L679.5 481.1L672.8 476.3L666.2 471.4L659.9 466.5L653.7 461.7L647.6 456.8L641.8 451.9L636.1 447L630.6 442.2L625.3 437.3L620.1 432.4L615.2 427.6L610.5 422.7L605.9 417.8L601.6 412.9L597.4 408.1L593.5 403.2L589.8 398.3L586.3 393.5L583 388.6L579.9 383.7L577 378.8L574.4 374L572 369.1L569.8 364.2L567.8 359.4L566.1 354.5L564.6 349.6L563.3 344.8L562.3 339.9L561.5 335L560.9 330.1L560.5 325.3L560.4 320.4L560.5 315.5L560.9 310.7L561.5 305.8L562.3 300.9L563.3 296L564.6 291.2L566.1 286.3L567.8 281.4L569.8 276.6L572 271.7L574.4 266.8L577 262L579.9 257.1L583 252.2L586.3 247.3L589.8 242.5L593.5 237.6L597.4 232.7L601.6 227.9L605.9 223L610.5 218.1L615.2 213.2L620.1 208.4L625.3 203.5L630.6 198.6L636.1 193.8L641.8 188.9L647.6 184L653.7 179.1L659.9 174.3L666.2 169.4L672.8 164.5L679.5 159.7L686.3 154.8L693.3 149.9L700.4 145.1L707.7 140.2L715.1 135.3L722.6 130.4L730.2 125.6L738 120.7L745.9 115.8L753.9 111L761.9 106.1L770.1 101.2L778.4 96.3L786.7 91.5L795.2 86.6L803.7 81.7L812.2 76.9L820.9 72L829.5 67.1L838.3 62.3L847.1 57.4L855.9 52.5L864.7 47.6L873.6 42.8L882.5 37.9L891.4 33L900.3 28.2"/><path d="M900.1 612.6L889.9 607.8L879.7 602.9L869.5 598L859.4 593.2L849.3 588.3L839.2 583.4L829.2 578.5L819.2 573.7L809.3 568.8L799.4 563.9L789.6 559.1L779.9 554.2L770.2 549.3L760.7 544.5L751.3 539.6L741.9 534.7L732.7 529.8L723.6 525L714.6 520.1L705.7 515.2L696.9 510.4L688.3 505.5L679.9 500.6L671.6 495.7L663.4 490.9L655.5 486L647.6 481.1L640 476.3L632.5 471.4L625.3 466.5L618.2 461.7L611.3 456.8L604.6 451.9L598.1 447L591.8 442.2L585.7 437.3L579.9 432.4L574.2 427.6L568.8 422.7L563.6 417.8L558.6 412.9L553.9 408.1L549.4 403.2L545.2 398.3L541.1 393.5L537.4 388.6L533.9 383.7L530.6 378.8L527.6 374L524.8 369.1L522.3 364.2L520.1 359.4L518.1 354.5L516.4 349.6L514.9 344.8L513.7 339.9L512.8 335L512.2 330.1L511.8 325.3L511.6 320.4L511.8 315.5L512.2 310.7L512.8 305.8L513.7 300.9L514.9 296L516.4 291.2L518.1 286.3L520.1 281.4L522.3 276.6L524.8 271.7L527.6 266.8L530.6 262L533.9 257.1L537.4 252.2L541.1 247.3L545.2 242.5L549.4 237.6L553.9 232.7L558.6 227.9L563.6 223L568.8 218.1L574.2 213.2L579.9 208.4L585.7 203.5L591.8 198.6L598.1 193.8L604.6 188.9L611.3 184L618.2 179.1L625.3 174.3L632.5 169.4L640 164.5L647.6 159.7L655.5 154.8L663.4 149.9L671.6 145.1L679.9 140.2L688.3 135.3L696.9 130.4L705.7 125.6L714.6 120.7L723.6 115.8L732.7 111L741.9 106.1L751.3 101.2L760.7 96.3L770.2 91.5L779.9 86.6L789.6 81.7L799.4 76.9L809.3 72L819.2 67.1L829.2 62.3L839.2 57.4L849.3 52.5L859.4 47.6L869.5 42.8L879.7 37.9L889.9 33L900.1 28.2"/><path d="M899.8 612.6L888.3 607.8L876.9 602.9L865.5 598L854 593.2L842.7 588.3L831.3 583.4L820 578.5L808.8 573.7L797.6 568.8L786.6 563.9L775.5 559.1L764.6 554.2L753.8 549.3L743 544.5L732.4 539.6L721.9 534.7L711.5 529.8L701.2 525L691.1 520.1L681.1 515.2L671.3 510.4L661.6 505.5L652.1 500.6L642.8 495.7L633.6 490.9L624.6 486L615.8 481.1L607.2 476.3L598.9 471.4L590.7 466.5L582.7 461.7L574.9 456.8L567.4 451.9L560.1 447L553 442.2L546.2 437.3L539.6 432.4L533.2 427.6L527.1 422.7L521.3 417.8L515.7 412.9L510.4 408.1L505.3 403.2L500.5 398.3L496 393.5L491.8 388.6L487.8 383.7L484.2 378.8L480.8 374L477.7 369.1L474.9 364.2L472.3 359.4L470.1 354.5L468.2 349.6L466.5 344.8L465.2 339.9L464.2 335L463.4 330.1L463 325.3L462.8 320.4L463 315.5L463.4 310.7L464.2 305.8L465.2 300.9L466.5 296L468.2 291.2L470.1 286.3L472.3 281.4L474.9 276.6L477.7 271.7L480.8 266.8L484.2 262L487.8 257.1L491.8 252.2L496 247.3L500.5 242.5L505.3 237.6L510.4 232.7L515.7 227.9L521.3 223L527.1 218.1L533.2 213.2L539.6 208.4L546.2 203.5L553 198.6L560.1 193.8L567.4 188.9L574.9 184L582.7 179.1L590.7 174.3L598.9 169.4L607.2 164.5L615.8 159.7L624.6 154.8L633.6 149.9L642.8 145.1L652.1 140.2L661.6 135.3L671.3 130.4L681.1 125.6L691.1 120.7L701.2 115.8L711.5 111L721.9 106.1L732.4 101.2L743 96.3L753.8 91.5L764.6 86.6L775.5 81.7L786.6 76.9L797.6 72L808.8 67.1L820 62.3L831.3 57.4L842.7 52.5L854 47.6L865.5 42.8L876.9 37.9L888.3 33L899.8 28.2"/><path d="M899.5 612.6L886.8 607.8L874.1 602.9L861.4 598L848.7 593.2L836.1 588.3L823.5 583.4L810.9 578.5L798.5 573.7L786 568.8L773.7 563.9L761.5 559.1L749.3 554.2L737.3 549.3L725.4 544.5L713.5 539.6L701.9 534.7L690.3 529.8L678.9 525L667.7 520.1L656.6 515.2L645.7 510.4L634.9 505.5L624.3 500.6L614 495.7L603.8 490.9L593.8 486L584 481.1L574.5 476.3L565.2 471.4L556.1 466.5L547.2 461.7L538.6 456.8L530.2 451.9L522.1 447L514.2 442.2L506.6 437.3L499.3 432.4L492.2 427.6L485.5 422.7L479 417.8L472.8 412.9L466.9 408.1L461.2 403.2L455.9 398.3L450.9 393.5L446.2 388.6L441.8 383.7L437.7 378.8L434 374L430.5 369.1L427.4 364.2L424.6 359.4L422.1 354.5L420 349.6L418.1 344.8L416.7 339.9L415.5 335L414.7 330.1L414.2 325.3L414 320.4L414.2 315.5L414.7 310.7L415.5 305.8L416.7 300.9L418.1 296L420 291.2L422.1 286.3L424.6 281.4L427.4 276.6L430.5 271.7L434 266.8L437.7 262L441.8 257.1L446.2 252.2L450.9 247.3L455.9 242.5L461.2 237.6L466.9 232.7L472.8 227.9L479 223L485.5 218.1L492.2 213.2L499.3 208.4L506.6 203.5L514.2 198.6L522.1 193.8L530.2 188.9L538.6 184L547.2 179.1L556.1 174.3L565.2 169.4L574.5 164.5L584 159.7L593.8 154.8L603.8 149.9L614 145.1L624.3 140.2L634.9 135.3L645.7 130.4L656.6 125.6L667.7 120.7L678.9 115.8L690.3 111L701.9 106.1L713.5 101.2L725.4 96.3L737.3 91.5L749.3 86.6L761.5 81.7L773.7 76.9L786 72L798.5 67.1L810.9 62.3L823.5 57.4L836.1 52.5L848.7 47.6L861.4 42.8L874.1 37.9L886.8 33L899.5 28.2"/><path d="M899.3 612.6L885.3 607.8L871.3 602.9L857.3 598L843.4 593.2L829.5 588.3L815.6 583.4L801.8 578.5L788.1 573.7L774.4 568.8L760.9 563.9L747.4 559.1L734 554.2L720.8 549.3L707.7 544.5L694.7 539.6L681.8 534.7L669.1 529.8L656.6 525L644.2 520.1L632 515.2L620 510.4L608.2 505.5L596.6 500.6L585.1 495.7L574 490.9L563 486L552.2 481.1L541.7 476.3L531.5 471.4L521.5 466.5L511.7 461.7L502.2 456.8L493 451.9L484.1 447L475.4 442.2L467.1 437.3L459 432.4L451.2 427.6L443.8 422.7L436.7 417.8L429.8 412.9L423.3 408.1L417.2 403.2L411.3 398.3L405.8 393.5L400.6 388.6L395.8 383.7L391.3 378.8L387.2 374L383.4 369.1L379.9 364.2L376.8 359.4L374.1 354.5L371.8 349.6L369.8 344.8L368.1 339.9L366.8 335L365.9 330.1L365.4 325.3L365.2 320.4L365.4 315.5L365.9 310.7L366.8 305.8L368.1 300.9L369.8 296L371.8 291.2L374.1 286.3L376.8 281.4L379.9 276.6L383.4 271.7L387.2 266.8L391.3 262L395.8 257.1L400.6 252.2L405.8 247.3L411.3 242.5L417.2 237.6L423.3 232.7L429.8 227.9L436.7 223L443.8 218.1L451.2 213.2L459 208.4L467.1 203.5L475.4 198.6L484.1 193.8L493 188.9L502.2 184L511.7 179.1L521.5 174.3L531.5 169.4L541.7 164.5L552.2 159.7L563 154.8L574 149.9L585.1 145.1L596.6 140.2L608.2 135.3L620 130.4L632 125.6L644.2 120.7L656.6 115.8L669.1 111L681.8 106.1L694.7 101.2L707.7 96.3L720.8 91.5L734 86.6L747.4 81.7L760.9 76.9L774.4 72L788.1 67.1L801.8 62.3L815.6 57.4L829.5 52.5L843.4 47.6L857.3 42.8L871.3 37.9L885.3 33L899.3 28.2"/><path d="M899 612.6L883.8 607.8L868.5 602.9L853.2 598L838 593.2L822.9 588.3L807.7 583.4L792.7 578.5L777.7 573.7L762.8 568.8L748 563.9L733.3 559.1L718.8 554.2L704.3 549.3L690 544.5L675.8 539.6L661.8 534.7L648 529.8L634.3 525L620.8 520.1L607.5 515.2L594.4 510.4L581.5 505.5L568.8 500.6L556.3 495.7L544.1 490.9L532.1 486L520.4 481.1L509 476.3L497.8 471.4L486.9 466.5L476.2 461.7L465.9 456.8L455.8 451.9L446.1 447L436.6 442.2L427.5 437.3L418.7 432.4L410.3 427.6L402.1 422.7L394.3 417.8L386.9 412.9L379.8 408.1L373.1 403.2L366.7 398.3L360.7 393.5L355 388.6L349.8 383.7L344.9 378.8L340.3 374L336.2 369.1L332.5 364.2L329.1 359.4L326.1 354.5L323.5 349.6L321.4 344.8L319.6 339.9L318.2 335L317.2 330.1L316.6 325.3L316.4 320.4L316.6 315.5L317.2 310.7L318.2 305.8L319.6 300.9L321.4 296L323.5 291.2L326.1 286.3L329.1 281.4L332.5 276.6L336.2 271.7L340.3 266.8L344.9 262L349.8 257.1L355 252.2L360.7 247.3L366.7 242.5L373.1 237.6L379.8 232.7L386.9 227.9L394.3 223L402.1 218.1L410.3 213.2L418.7 208.4L427.5 203.5L436.6 198.6L446.1 193.8L455.8 188.9L465.9 184L476.2 179.1L486.9 174.3L497.8 169.4L509 164.5L520.4 159.7L532.1 154.8L544.1 149.9L556.3 145.1L568.8 140.2L581.5 135.3L594.4 130.4L607.5 125.6L620.8 120.7L634.3 115.8L648 111L661.8 106.1L675.8 101.2L690 96.3L704.3 91.5L718.8 86.6L733.3 81.7L748 76.9L762.8 72L777.7 67.1L792.7 62.3L807.7 57.4L822.9 52.5L838 47.6L853.2 42.8L868.5 37.9L883.8 33L899 28.2"/></g>
<g fill="#8a8a8a" font-size="11" text-anchor="middle"><text x="902.1" y="24.7">+90<tspan dx="1.8" dy="-3.2" font-size="7">°</tspan></text><text x="902.1" y="123.4">+60<tspan dx="1.8" dy="-3.2" font-size="7">°</tspan></text><text x="902.1" y="221.2">+30<tspan dx="1.8" dy="-3.2" font-size="7">°</tspan></text><text x="902.1" y="330.2">+0<tspan dx="1.8" dy="-3.2" font-size="7">°</tspan></text><text x="902.1" y="427.9">−30<tspan dx="1.8" dy="-3.2" font-size="7">°</tspan></text><text x="902.1" y="525.7">−60<tspan dx="1.8" dy="-3.2" font-size="7">°</tspan></text><text x="902.1" y="623.4">−90<tspan dx="1.8" dy="-3.2" font-size="7">°</tspan></text><text x="902.1" y="330.2">+0<tspan dx="1.8" dy="-3.2" font-size="7">°</tspan></text><text x="804.5" y="330.2">+30<tspan dx="1.8" dy="-3.2" font-size="7">°</tspan></text><text x="706.9" y="330.2">+60<tspan dx="1.8" dy="-3.2" font-size="7">°</tspan></text><text x="609.2" y="330.2">+90<tspan dx="1.8" dy="-3.2" font-size="7">°</tspan></text><text x="511.6" y="330.2">+120<tspan dx="1.8" dy="-3.2" font-size="7">°</tspan></text><text x="414" y="330.2">+150<tspan dx="1.8" dy="-3.2" font-size="7">°</tspan></text><text x="316.4" y="330.2">+180<tspan dx="1.8" dy="-3.2" font-size="7">°</tspan></text><text x="1390.2" y="330.2">+210<tspan dx="1.8" dy="-3.2" font-size="7">°</tspan></text><text x="1292.6" y="330.2">+240<tspan dx="1.8" dy="-3.2" font-size="7">°</tspan></text><text x="1195" y="330.2">+270<tspan dx="1.8" dy="-3.2" font-size="7">°</tspan></text><text x="1097.3" y="330.2">+300<tspan dx="1.8" dy="-3.2" font-size="7">°</tspan></text><text x="999.7" y="330.2">+330<tspan dx="1.8" dy="-3.2" font-size="7">°</tspan></text><text x="1487.8" y="330.2">+180<tspan dx="1.8" dy="-3.2" font-size="7">°</tspan></text></g>
<path d="M733.3 135.6L735.9 134L738.5 132.4L741.1 130.9L743.7 129.3L746.3 127.7L748.9 126.2L751.6 124.6L754.2 123L756.9 121.5L759.5 119.9L762.2 118.3L764.9 116.8L767.5 115.2L770.2 113.7L772.9 112.1L775.6 110.6L778.3 109L781 107.5L783.7 105.9L786.4 104.4L789.2 102.9L791.9 101.3L794.6 99.8L797.3 98.3L800 96.8L802.7 95.3L805.5 93.8L808.2 92.3L810.9 90.8L813.6 89.3L816.3 87.8L819 86.3L821.7 84.9L824.4 83.4L827.1 82L829.7 80.5L832.4 79.1L835.1 77.7L837.7 76.3L840.3 74.9L842.9 73.6L845.5 72.2L848.1 70.9L850.6 69.6L853.1 68.3L855.6 67L858.1 65.8L860.5 64.6L862.9 63.4L865.3 62.2L867.6 61.1L869.9 60.1L872.1 59.1L874.3 58.1L876.5 57.2L878.5 56.4L880.6 55.6L882.5 54.9L884.5 54.3L886.3 53.8L888.1 53.3L889.9 53L891.6 52.7L893.3 52.6L894.9 52.5L896.6 52.6L898.1 52.8L899.7 53L901.3 53.4L902.8 53.8L904.4 54.4L906 55L907.6 55.7L909.1 56.5L910.8 57.4L912.4 58.3L914 59.2L915.7 60.3L917.4 61.3L919.1 62.4L920.8 63.6L922.5 64.8L924.3 66L926.1 67.2L927.8 68.5L929.6 69.8L931.4 71.1L933.3 72.4L935.1 73.8L936.9 75.2L938.8 76.5L940.6 77.9L942.5 79.4L944.4 80.8L946.3 82.2L948.1 83.7L950 85.1L951.9 86.6L953.8 88.1L955.7 89.5L957.6 91L959.5 92.5L961.4 94L963.3 95.5L965.2 97L967.1 98.6L969.1 100.1L971 101.6L972.9 103.1L974.8 104.7L976.7 106.2L978.6 107.7L980.5 109.3L982.4 110.8L984.2 112.4L986.1 113.9L988 115.5L989.9 117L991.8 118.6L993.6 120.2L995.5 121.7L997.4 123.3L999.2 124.9" stroke="#808080" stroke-width="0.9" stroke-dasharray="0.9 2.1" fill="none"/>
<path d="M724.4 141.1L722.2 142.5L720 143.8L717.8 145.2L715.7 146.6L713.5 148L711.4 149.3L709.2 150.7L707.1 152.1L705 153.5L702.8 154.9L700.7 156.2L698.7 157.6L696.6 159L694.5 160.4L692.4 161.8L690.4 163.1L688.3 164.5L686.3 165.9L684.3 167.3L682.3 168.7L680.3 170.1L678.3 171.4L676.4 172.8L674.4 174.2L672.4 175.6L670.5 177L668.6 178.4L666.7 179.8L664.8 181.1L662.9 182.5L661 183.9L659.2 185.3L657.3 186.7L655.5 188.1L653.7 189.5L651.9 190.9L650.1 192.3L648.3 193.6L646.5 195L644.8 196.4L643.1 197.8L641.3 199.2L639.6 200.6L637.9 202L636.3 203.4L634.6 204.8L632.9 206.2L631.3 207.6L629.7 209L628.1 210.3L626.5 211.7L624.9 213.1L623.4 214.5L621.8 215.9L620.3 217.3L618.8 218.7L617.3 220.1L615.8 221.5L614.3 222.9L612.9 224.3L611.4 225.7L610 227.1L608.6 228.5L607.2 229.9L605.9 231.3L604.5 232.7L603.2 234.1L601.9 235.4L600.6 236.8L599.3 238.2L598 239.6L596.7 241L595.5 242.4L594.3 243.8L593.1 245.2L591.9 246.6L590.7 248L589.6 249.4L588.5 250.8L587.4 252.2L586.3 253.6L585.2 255L584.1 256.4L583.1 257.8L582 259.2L581 260.6L580 262L579.1 263.4L578.1 264.8L577.2 266.2L576.3 267.6L575.4 269L574.5 270.4L573.6 271.8L572.8 273.2L572 274.6L571.1 276L570.4 277.4L569.6 278.8L568.8 280.2L568.1 281.6L567.4 283L566.7 284.3L566 285.7L565.4 287.1L564.7 288.5L564.1 289.9L563.5 291.3L562.9 292.7L562.4 294.1L561.8 295.5L561.3 296.9L560.8 298.3L560.3 299.7L559.8 301.1L559.4 302.5L559 303.9L558.5 305.3L558.2 306.7L557.8 308.1L557.4 309.5L557.1 310.9L556.8 312.3L556.5 313.7L556.2 315.1L556 316.5L555.7 317.9L555.5 319.3L555.3 320.7L555.1 322.1L555 323.5L554.8 324.9L554.7 326.3L554.6 327.7L554.6 329.1L554.5 330.5L554.5 331.9L554.4 333.3L554.4 334.7L554.4 336.1L554.5 337.5L554.5 338.9L554.6 340.3L554.7 341.7L554.8 343.1L555 344.5L555.1 345.9L555.3 347.3L555.5 348.7L555.7 350.1L555.9 351.5L556.2 352.9L556.5 354.3L556.7 355.7L557.1 357.1L557.4 358.5L557.7 359.9L558.1 361.3L558.5 362.7L558.9 364.1L559.3 365.5L559.8 366.9L560.2 368.3L560.7 369.7L561.2 371.1L561.7 372.5L562.3 373.9L562.8 375.3L563.4 376.6L564 378L564.6 379.4L565.3 380.8L565.9 382.2L566.6 383.6L567.3 385L568 386.4L568.7 387.8L569.5 389.2L570.2 390.6L571 392L571.8 393.4L572.7 394.8L573.5 396.2L574.4 397.6L575.2 399L576.1 400.4L577 401.8L578 403.2L578.9 404.6L579.9 406L580.9 407.4L581.9 408.8L582.9 410.2L583.9 411.6L585 413L586.1 414.4L587.1 415.7L588.3 417.1L589.4 418.5L590.5 419.9L591.7 421.3L592.9 422.7L594.1 424.1L595.3 425.5L596.5 426.9L597.7 428.3L599 429.7L600.3 431.1L601.6 432.5L602.9 433.9L604.2 435.3L605.6 436.6L606.9 438L608.3 439.4L609.7 440.8L611.1 442.2L612.5 443.6L614 445L615.4 446.4L616.9 447.8L618.4 449.2L619.9 450.6L621.4 451.9L622.9 453.3L624.5 454.7L626.1 456.1L627.6 457.5L629.2 458.9L630.8 460.3L632.5 461.7L634.1 463.1L635.7 464.4L637.4 465.8L639.1 467.2L640.8 468.6L642.5 470L644.2 471.4L645.9 472.7L647.7 474.1L649.5 475.5L651.2 476.9L653 478.3L654.8 479.7L656.6 481L658.5 482.4" stroke="#808080" stroke-width="0.9" stroke-dasharray="0.9 2.1" fill="none"/>
<path d="M958 120.4L957.6 121.7L957.3 122.9L956.9 124.2L956.6 125.5L956.3 126.8L955.9 128.1L955.6 129.4L955.2 130.7L954.9 132L954.6 133.4L954.2 134.7L953.9 136.1L953.6 137.4L953.2 138.8L952.9 140.2L952.5 141.5L952.2 142.9L951.9 144.3L951.5 145.7L951.2 147.1L950.8 148.5L950.5 149.9L950.2 151.3L949.8 152.7L949.5 154.2L949.1 155.6L948.8 157L948.4 158.4L948.1 159.9L947.7 161.3L947.4 162.8L947 164.2L946.6 165.7L946.3 167.1L945.9 168.6L945.6 170L945.2 171.5L944.8 173L944.4 174.4L944.1 175.9L943.7 177.4L943.3 178.8L942.9 180.3L942.6 181.8L942.2 183.3L941.8 184.8L941.4 186.2L941 187.7L940.6 189.2L940.2 190.7L939.8 192.2L939.4 193.7L939 195.2L938.6 196.7L938.2 198.2L937.8 199.7L937.4 201.2L937 202.7L936.6 204.2L936.2 205.7L935.8 207.3L935.3 208.8L934.9 210.3L934.5 211.8L934.1 213.3L933.6 214.8L933.2 216.3L932.8 217.9L932.3 219.4L931.9 220.9L931.5 222.4L931 224L930.6 225.5L930.2 227L929.7 228.5L929.3 230.1L928.8 231.6L928.4 233.1L927.9 234.6L927.5 236.2L927 237.7L926.6 239.2L926.1 240.8L925.6 242.3L925.2 243.8L924.7 245.4L924.3 246.9L923.8 248.5L923.3 250L922.9 251.5L922.4 253.1L921.9 254.6L921.4 256.1L921 257.7L920.5 259.2L920 260.8L919.5 262.3L919.1 263.9L918.6 265.4L918.1 266.9L917.6 268.5L917.1 270L916.7 271.6L916.2 273.1L915.7 274.7L915.2 276.2L914.7 277.8L914.2 279.3L913.7 280.9L913.2 282.4L912.8 283.9L912.3 285.5L911.8 287L911.3 288.6L910.8 290.1L910.3 291.7L909.8 293.2L909.3 294.8L908.8 296.3L908.3 297.9L907.8 299.4L907.3 301L906.8 302.5L906.3 304.1L905.8 305.6L905.3 307.2L904.8 308.7L904.3 310.3L903.8 311.8L903.3 313.4L902.8 314.9L902.3 316.5L901.8 318L901.3 319.6L900.8 321.1L900.3 322.7L899.8 324.2L899.3 325.8L898.8 327.3L898.3 328.9L897.8 330.4L897.3 332L896.8 333.5L896.4 335.1L895.9 336.6L895.4 338.2L894.9 339.7L894.4 341.3L893.9 342.8L893.4 344.4L892.9 345.9L892.4 347.5L891.9 349L891.4 350.6L890.9 352.1L890.4 353.7L889.9 355.2L889.5 356.8L889 358.3L888.5 359.9L888 361.4L887.5 363L887 364.5L886.5 366.1L886.1 367.6L885.6 369.1L885.1 370.7L884.6 372.2L884.1 373.8L883.7 375.3L883.2 376.9L882.7 378.4L882.3 379.9L881.8 381.5L881.3 383L880.8 384.6L880.4 386.1L879.9 387.6L879.5 389.2L879 390.7L878.5 392.3L878.1 393.8L877.6 395.3L877.2 396.9L876.7 398.4L876.3 399.9L875.8 401.5L875.4 403L874.9 404.5L874.5 406.1L874 407.6L873.6 409.1L873.1 410.7L872.7 412.2L872.3 413.7L871.8 415.2L871.4 416.8L871 418.3L870.5 419.8L870.1 421.3L869.7 422.9L869.3 424.4L868.8 425.9L868.4 427.4L868 428.9L867.6 430.4L867.2 432L866.8 433.5L866.4 435L866 436.5L865.6 438L865.2 439.5L864.8 441L864.4 442.5L864 444L863.6 445.5L863.2 447L862.8 448.5L862.4 450L862 451.5L861.6 453L861.3 454.5L860.9 456L860.5 457.4L860.1 458.9L859.8 460.4L859.4 461.9L859 463.4L858.7 464.8L858.3 466.3L858 467.8L857.6 469.2L857.2 470.7L856.9 472.2L856.5 473.6L856.2 475.1L855.8 476.5L855.5 478L855.1 479.4L854.8 480.8L854.5 482.3" stroke="#808080" stroke-width="0.9" stroke-dasharray="0.9 2.1" fill="none"/>
<path d="M959.6 115L959.9 114L960.3 112.9L960.6 111.9L960.9 110.9L961.3 109.9L961.6 108.9L962 108L962.4 107L962.7 106.1L963.1 105.1L963.5 104.2L963.9 103.3L964.3 102.4L964.7 101.6L965.2 100.7L965.6 99.9L966 99L966.5 98.2L967 97.4L967.5 96.7L968 95.9L968.5 95.2L969.1 94.5L969.7 93.8L970.3 93.1L970.9 92.5L971.5 91.9L972.2 91.3L972.9 90.7L973.6 90.2L974.3 89.6L975.1 89.1L975.9 88.7L976.7 88.2L977.6 87.8L978.5 87.5L979.4 87.1L980.4 86.8L981.4 86.5L982.4 86.2L983.5 86L984.7 85.8L985.8 85.7L987.1 85.5L988.3 85.4L989.7 85.4L991 85.3L992.4 85.4L993.9 85.4L995.4 85.5L997 85.6L998.6 85.7L1000.3 85.9L1002 86.1L1003.8 86.3L1005.6 86.6L1007.5 86.9L1009.4 87.2L1011.4 87.5L1013.4 87.9L1015.5 88.3L1017.6 88.8L1019.8 89.3L1022.1 89.8L1024.4 90.3L1026.7 90.8L1029.1 91.4L1031.5 92L1033.9 92.6L1036.5 93.3L1039 94L1041.6 94.6L1044.2 95.4L1046.9 96.1L1049.6 96.8L1052.4 97.6L1055.1 98.4L1058 99.2L1060.8 100L1063.7 100.9L1066.6 101.8L1069.5 102.6L1072.5 103.5L1075.5 104.4L1078.5 105.4L1081.6 106.3L1084.6 107.2" stroke="#808080" stroke-width="0.9" stroke-dasharray="0.9 2.1" fill="none"/>
<path d="M913 86.2L913.9 87.7L914.9 89.2L915.8 90.7L916.8 92.2L917.7 93.7L918.7 95.2L919.6 96.7L920.6 98.2L921.5 99.8L922.5 101.3L923.4 102.8L924.4 104.4L925.3 105.9L926.2 107.5L927.2 109L928.1 110.6L929.1 112.1L930 113.7L931 115.2L931.9 116.8L932.8 118.4L933.8 119.9L934.7 121.5L935.6 123.1L936.6 124.6L937.5 126.2L938.4 127.8L939.3 129.4L940.3 130.9L941.2 132.5L942.1 134.1L943 135.7L943.9 137.3L944.8 138.9L945.7 140.4L946.6 142L947.5 143.6L948.4 145.2L949.3 146.8L950.2 148.4L951.1 150L952 151.6L952.9 153.2L953.8 154.8L954.6 156.3L955.5 157.9L956.4 159.5L957.2 161.1L958.1 162.7L959 164.3L959.8 165.9L960.7 167.5L961.5 169.1L962.3 170.7L963.2 172.3L964 173.9L964.8 175.5L965.7 177.1L966.5 178.7L967.3 180.3L968.1 181.9L968.9 183.5L969.7 185.1L970.5 186.8L971.3 188.4L972.1 190L972.8 191.6L973.6 193.2L974.4 194.8L975.2 196.4L975.9 198L976.7 199.6L977.4 201.2L978.2 202.8L978.9 204.4L979.6 206L980.3 207.6L981.1 209.2L981.8 210.9L982.5 212.5L983.2 214.1L983.9 215.7L984.6 217.3L985.3 218.9L985.9 220.5L986.6 222.1L987.3 223.7L987.9 225.3L988.6 227L989.2 228.6L989.9 230.2L990.5 231.8L991.1 233.4L991.8 235L992.4 236.6L993 238.2L993.6 239.8L994.2 241.5L994.8 243.1L995.3 244.7L995.9 246.3L996.5 247.9L997 249.5L997.6 251.1L998.1 252.8L998.7 254.4L999.2 256L999.7 257.6" stroke="#808080" stroke-width="0.9" stroke-dasharray="0.9 2.1" fill="none"/>
<path d="M909 80L908.2 78.8L907.4 77.5L906.6 76.3L905.7 75.1L904.9 73.9L904.1 72.7L903.3 71.5L902.5 70.3L901.7 69.2L900.9 68L900.1 66.9L899.2 65.8L898.4 64.7L897.6 63.7L896.8 62.6L896 61.6L895.2 60.6L894.3 59.7L893.5 58.8L892.6 57.9L891.8 57.1L890.9 56.3L890 55.5L889.1 54.8L888.1 54.2L887.1 53.6L886.1 53.1L885.1 52.6L884 52.3L882.8 52L881.6 51.7L880.3 51.6L879 51.5L877.6 51.5L876.1 51.6L874.5 51.8L872.8 52.1L871 52.4L869.2 52.8L867.2 53.3L865.2 53.8L863.1 54.4L860.9 55.1L858.6 55.8L856.2 56.6L853.8 57.4L851.3 58.2L848.8 59.1L846.1 60.1L843.5 61L840.8 62L838 63L835.2 64.1L832.3 65.2L829.5 66.2L826.5 67.4L823.6 68.5L820.6 69.6L817.6 70.8L814.6 72L811.5 73.2L808.5 74.4L805.4 75.6L802.3 76.8L799.2 78L796.1 79.3L792.9 80.5L789.8 81.8L786.6 83L783.4 84.3L780.3 85.6L777.1 86.9L773.9 88.1L770.7 89.4L767.5 90.7L764.3 92L761.1 93.3L757.9 94.7L754.7 96L751.5 97.3L748.3 98.6L745.1 99.9L741.9 101.3L738.7 102.6L735.5 103.9L732.3 105.3L729.2 106.6L726 107.9L722.8 109.3L719.6 110.6L716.5 112L713.3 113.3L710.1 114.7L707 116L703.9 117.4L700.7 118.7L697.6 120.1L694.5 121.5L691.4 122.8L688.3 124.2L685.2 125.5L682.1 126.9L679 128.3L675.9 129.6L672.9 131L669.8 132.4L666.8 133.8L663.8 135.1L660.8 136.5L657.8 137.9L654.8 139.2L651.8 140.6L648.8 142L645.9 143.4L643 144.7L640 146.1L637.1 147.5L634.2 148.9L631.3 150.3L628.4 151.6L625.6 153L622.7 154.4L619.9 155.8L617.1 157.2L614.3 158.5L611.5 159.9L608.7 161.3L606 162.7L603.2 164.1L600.5 165.5L597.8 166.8L595.1 168.2L592.4 169.6L589.7 171L587.1 172.4L584.5 173.8L581.9 175.2L579.3 176.6L576.7 177.9L574.1 179.3L571.6 180.7L569.1 182.1L566.5 183.5L564.1 184.9L561.6 186.3L559.1 187.7L556.7 189.1L554.3 190.5L551.9 191.8L549.5 193.2L547.2 194.6L544.8 196L542.5 197.4L540.2 198.8L537.9 200.2L535.7 201.6L533.4 203L531.2 204.4L529 205.8L526.8 207.2L524.7 208.6L522.5 210L520.4 211.4L518.3 212.7L516.2 214.1L514.2 215.5L512.2 216.9L510.2 218.3L508.2 219.7L506.2 221.1L504.3 222.5L502.3 223.9L500.4 225.3L498.6 226.7L496.7 228.1L494.9 229.5L493.1 230.9L491.3 232.3L489.5 233.7L487.8 235.1L486.1 236.5L484.4 237.9L482.7 239.3L481 240.7L479.4 242.1L477.8 243.5L476.2 244.9L474.7 246.3L473.2 247.7L471.7 249.1L470.2 250.5L468.7 251.9L467.3 253.3L465.9 254.6L464.5 256L463.1 257.4L461.8 258.8L460.5 260.2L459.2 261.6L457.9 263L456.7 264.4L455.5 265.8L454.3 267.2L453.1 268.6L452 270L450.9 271.4L449.8 272.8L448.8 274.2L447.7 275.6L446.7 277L445.7 278.4L444.8 279.8L443.8 281.2L442.9 282.6L442.1 284L441.2 285.4L440.4 286.8L439.6 288.2L438.8 289.6L438 291L437.3 292.4L436.6 293.8L435.9 295.2L435.3 296.6L434.7 298L434.1 299.4L433.5 300.8L433 302.2L432.5 303.6L432 305L431.5 306.4L431.1 307.8L430.7 309.2L430.3 310.6L429.9 312L429.6 313.4L429.3 314.8L429 316.2L428.8 317.6L428.5 319L428.4 320.4L428.2 321.8L428 323.2L427.9 324.6L427.8 326L427.8 327.4L427.7 328.8L427.7 330.2L427.7 331.6L427.8 333L427.9 334.4L427.9 335.8L428.1 337.2L428.2 338.6L428.4 340L428.6 341.4L428.8 342.8L429.1 344.2L429.4 345.6L429.7 347L430 348.4L430.4 349.8L430.8 351.2L431.2 352.6L431.6 354L432.1 355.4L432.6 356.8L433.1 358.2L433.7 359.6L434.2 361L434.8 362.4L435.5 363.8L436.1 365.2L436.8 366.6L437.5 368L438.2 369.4L439 370.8L439.8 372.2L440.6 373.6L441.4 375L442.3 376.4L443.2 377.8L444.1 379.2L445 380.6L446 382L447 383.4L448 384.8L449 386.2L450.1 387.6L451.2 389L452.3 390.4L453.4 391.8L454.6 393.2L455.8 394.6L457 396L458.2 397.4L459.5 398.8L460.8 400.2L462.1 401.6L463.5 403" stroke="#808080" stroke-width="0.9" stroke-dasharray="0.9 2.1" fill="none"/>
<path d="M902.9 95.6L903.4 97.2L903.9 98.7L904.4 100.3L904.9 101.8L905.4 103.4L905.9 105L906.5 106.5L907 108.1L907.5 109.7L908 111.3L908.5 112.8L909 114.4L909.5 116L910 117.6L910.5 119.2L911 120.8L911.5 122.4L912 123.9L912.5 125.5L913 127.1L913.5 128.7L914 130.3L914.5 131.9L915 133.5L915.5 135.1L916 136.7L916.5 138.3L917 139.9L917.5 141.5L918 143.1L918.5 144.7L919 146.3L919.5 147.9L920 149.5L920.5 151.1L920.9 152.7L921.4 154.3L921.9 155.9L922.4 157.5L922.9 159.1L923.4 160.7L923.8 162.3L924.3 163.9L924.8 165.6L925.3 167.2L925.7 168.8L926.2 170.4L926.7 172L927.1 173.6L927.6 175.2L928.1 176.8L928.5 178.4L929 180L929.4 181.7L929.9 183.3L930.3 184.9L930.8 186.5L931.2 188.1L931.7 189.7L932.1 191.3L932.6 192.9L933 194.6L933.4 196.2L933.9 197.8L934.3 199.4L934.7 201L935.2 202.6L935.6 204.2L936 205.8L936.4 207.5L936.9 209.1L937.3 210.7L937.7 212.3L938.1 213.9L938.5 215.5L938.9 217.2L939.3 218.8L939.7 220.4L940.1 222L940.5 223.6L940.9 225.2L941.3 226.9L941.7 228.5L942.1 230.1L942.4 231.7L942.8 233.3L943.2 234.9L943.5 236.6L943.9 238.2L944.3 239.8L944.6 241.4L945 243L945.4 244.6L945.7 246.3L946.1 247.9L946.4 249.5L946.7 251.1L947.1 252.7L947.4 254.3L947.7 256L948.1 257.6L948.4 259.2L948.7 260.8L949 262.4L949.3 264.1L949.7 265.7L950 267.3L950.3 268.9L950.6 270.5L950.9 272.2L951.1 273.8L951.4 275.4L951.7 277L952 278.6L952.3 280.2L952.6 281.9L952.8 283.5L953.1 285.1L953.3 286.7L953.6 288.3L953.9 290L954.1 291.6L954.4 293.2L954.6 294.8L954.8 296.4L955.1 298.1L955.3 299.7L955.5 301.3L955.8 302.9L956 304.5L956.2 306.2L956.4 307.8L956.6 309.4L956.8 311L957 312.6L957.2 314.3L957.4 315.9L957.6 317.5L957.8 319.1L957.9 320.7L958.1 322.3L958.3 324L958.4 325.6L958.6 327.2L958.8 328.8L958.9 330.4L959 332.1L959.2 333.7L959.3 335.3L959.5 336.9L959.6 338.5L959.7 340.2L959.8 341.8L960 343.4L960.1 345L960.2 346.6L960.3 348.3L960.4 349.9L960.5 351.5L960.6 353.1L960.7 354.7L960.7 356.4L960.8 358L960.9 359.6L961 361.2L961 362.8L961.1 364.5L961.1 366.1L961.2 367.7L961.2 369.3L961.3 370.9L961.3 372.5L961.4 374.2L961.4 375.8L961.4 377.4L961.4 379L961.4 380.6L961.5 382.3L961.5 383.9L961.5 385.5L961.5 387.1L961.5 388.7L961.4 390.3L961.4 392L961.4 393.6L961.4 395.2L961.4 396.8L961.3 398.4L961.3 400.1L961.2 401.7L961.2 403.3L961.1 404.9L961.1 406.5L961 408.1L961 409.8L960.9 411.4L960.8 413L960.7 414.6L960.7 416.2L960.6 417.8L960.5 419.5L960.4 421.1L960.3 422.7L960.2 424.3L960.1 425.9L960 427.5L959.9 429.1L959.7 430.8L959.6 432.4L959.5 434L959.3 435.6L959.2 437.2L959.1 438.8L958.9 440.5L958.8 442.1L958.6 443.7L958.5 445.3L958.3 446.9L958.1 448.5L958 450.1L957.8 451.7L957.6 453.4L957.4 455L957.2 456.6L957 458.2L956.8 459.8L956.6 461.4L956.4 463L956.2 464.6L956 466.2L955.8 467.9L955.6 469.5L955.4 471.1L955.1 472.7L954.9 474.3L954.7 475.9L954.4 477.5L954.2 479.1L953.9 480.7L953.7 482.3" stroke="#808080" stroke-width="0.9" stroke-dasharray="0.9 2.1" fill="none"/>
<path d="M899.8 86.2L899.4 84.9L898.9 83.6L898.5 82.2L898 80.9L897.6 79.6L897.2 78.3L896.7 77L896.3 75.8L895.8 74.5L895.4 73.2L894.9 72L894.5 70.7L894 69.5L893.6 68.2L893.2 67L892.7 65.8L892.2 64.6L891.8 63.4L891.3 62.3L890.8 61.1L890.4 60L889.9 58.9L889.4 57.8L888.9 56.8L888.4 55.8L887.8 54.8L887.3 53.9L886.7 53L886.1 52.1L885.5 51.3L884.8 50.6L884.1 49.9L883.3 49.3L882.5 48.8L881.5 48.3L880.5 47.9L879.5 47.7L878.3 47.5L877 47.4L875.5 47.4L874 47.5L872.3 47.7L870.5 48L868.5 48.4L866.4 48.9L864.2 49.5L861.8 50.1L859.4 50.8L856.8 51.5L854.1 52.4L851.4 53.2L848.5 54.1L845.6 55.1L842.6 56.1L839.5 57.1L836.3 58.2L833.1 59.2L829.9 60.3L826.6 61.5L823.3 62.6L819.9 63.8L816.5 65L813.1 66.2L809.6 67.4L806.1 68.6L802.6 69.8L799.1 71.1L795.6 72.3L792 73.6L788.4 74.9L784.8 76.1L781.3 77.4L777.6 78.7L774 80L770.4 81.3L766.8 82.6L763.2 84L759.5 85.3L755.9 86.6L752.3 87.9L748.6 89.3L745 90.6L741.3 91.9L737.7 93.3L734.1 94.6L730.4 95.9L726.8 97.3L723.2 98.6L719.6 100L715.9 101.4L712.3 102.7L708.7 104.1L705.1 105.4L701.5 106.8L697.9 108.2L694.4 109.5L690.8 110.9L687.2 112.3L683.7 113.6L680.1 115L676.6 116.4L673.1 117.7L669.5 119.1L666 120.5L662.5 121.9L659 123.2L655.6 124.6L652.1 126L648.6 127.4L645.2 128.8L641.8 130.1L638.4 131.5L635 132.9L631.6 134.3L628.2 135.7L624.8 137.1L621.5 138.4L618.1 139.8L614.8 141.2L611.5 142.6L608.2 144L605 145.4L601.7 146.8L598.4 148.1L595.2 149.5L592 150.9L588.8 152.3L585.6 153.7L582.5 155.1L579.3 156.5L576.2 157.9L573.1 159.3L570 160.7L566.9 162.1L563.9 163.5L560.8 164.8L557.8 166.2L554.8 167.6L551.8 169L548.8 170.4L545.9 171.8L543 173.2L540.1 174.6L537.2 176L534.3 177.4L531.5 178.8L528.6 180.2L525.8 181.6L523 183L520.3 184.4L517.5 185.8L514.8 187.2L512.1 188.6L509.4 190L506.8 191.4L504.1 192.8L501.5 194.2L498.9 195.6L496.3 197L493.8 198.4L491.3 199.8L488.8 201.2L486.3 202.6L483.8 204L481.4 205.4L479 206.8L476.6 208.2L474.3 209.6L471.9 211L469.6 212.4L467.3 213.8L465 215.2L462.8 216.6L460.6 218L458.4 219.4L456.2 220.8L454.1 222.2L452 223.6L449.9 225L447.8 226.4L445.8 227.8L443.8 229.2L441.8 230.6L439.8 232L437.9 233.4L436 234.8L434.1 236.2L432.2 237.6L430.4 239L428.6 240.4L426.8 241.8L425 243.2L423.3 244.6L421.6 246L419.9 247.4L418.3 248.8L416.7 250.2L415.1 251.6L413.5 253L412 254.4L410.5 255.8L409 257.2L407.5 258.6L406.1 260L404.7 261.4L403.4 262.8L402 264.2L400.7 265.6L399.4 267L398.2 268.4L396.9 269.8L395.7 271.2L394.6 272.6L393.4 274L392.3 275.4L391.2 276.8L390.2 278.2L389.1 279.6L388.2 281L387.2 282.4L386.2 283.8L385.3 285.3L384.5 286.7L383.6 288.1L382.8 289.5L382 290.9L381.2 292.3L380.5 293.7L379.8 295.1L379.1 296.5L378.5 297.9L377.8 299.3L377.3 300.7L376.7 302.1L376.2 303.5L375.7 304.9L375.2 306.3L374.8 307.7L374.4 309.1L374 310.5L373.6 311.9L373.3 313.3L373 314.7L372.8 316.1L372.5 317.5L372.3 318.9L372.2 320.3L372 321.7L371.9 323.1L371.9 324.5L371.8 326L371.8 327.4L371.8 328.8L371.8 330.2L371.9 331.6L372 333L372.1 334.4L372.3 335.8L372.5 337.2L372.7 338.6L373 340L373.2 341.4L373.6 342.8L373.9 344.2L374.3 345.6L374.7 347L375.1 348.4L375.6 349.8L376 351.2L376.6 352.6L377.1 354L377.7 355.4L378.3 356.8L378.9 358.2L379.6 359.6L380.3 361L381 362.4L381.8 363.8L382.6 365.2L383.4 366.6L384.2 368.1L385.1 369.5L386 370.9L386.9 372.3L387.9 373.7L388.9 375.1L389.9 376.5L390.9 377.9L392 379.3L393.1 380.7L394.3 382.1L395.4 383.5L396.6 384.9L397.8 386.3L399.1 387.7L400.4 389.1L401.7 390.5L403 391.9L404.3 393.3L405.7 394.7" stroke="#808080" stroke-width="0.9" stroke-dasharray="0.9 2.1" fill="none"/>
<path d="" stroke="#808080" stroke-width="0.9" stroke-dasharray="0.9 2.1" fill="none"/>
<path d="M1022.6 137.5L1021.8 138L1021 138.6L1020.2 139.1L1019.4 139.7L1018.6 140.2L1017.9 140.8L1017.1 141.4L1016.4 142L1015.7 142.7L1015 143.3L1014.2 143.9L1013.5 144.6L1012.8 145.3L1012.2 145.9L1011.5 146.6L1010.8 147.3L1010.1 148.1L1009.5 148.8L1008.8 149.5L1008.2 150.3L1007.5 151L1006.9 151.8L1006.3 152.6L1005.6 153.3L1005 154.1L1004.4 154.9L1003.8 155.7L1003.2 156.6L1002.6 157.4L1002 158.2L1001.4 159.1L1000.8 159.9L1000.2 160.8L999.6 161.6L999 162.5L998.4 163.4L997.8 164.3L997.2 165.2L996.6 166.1L996.1 167L995.5 167.9L994.9 168.8L994.3 169.8L993.7 170.7L993.2 171.7L992.6 172.6L992 173.6L991.5 174.5L990.9 175.5L990.3 176.5L989.7 177.4L989.2 178.4L988.6 179.4L988 180.4L987.4 181.4L986.9 182.4L986.3 183.4L985.7 184.4L985.1 185.4L984.6 186.4L984 187.5L983.4 188.5L982.8 189.5L982.2 190.6L981.7 191.6L981.1 192.7L980.5 193.7L979.9 194.8L979.3 195.8L978.7 196.9L978.2 197.9L977.6 199L977 200.1L976.4 201.2L975.8 202.2L975.2 203.3L974.6 204.4L974 205.5L973.4 206.6L972.8 207.7L972.2 208.8L971.6 209.9L971 211L970.4 212.1L969.8 213.2L969.1 214.3L968.5 215.4L967.9 216.5L967.3 217.7L966.7 218.8L966.1 219.9L965.4 221L964.8 222.2L964.2 223.3L963.5 224.4L962.9 225.6L962.3 226.7L961.6 227.8L961 229L960.4 230.1L959.7 231.3L959.1 232.4L958.4 233.6L957.8 234.7L957.2 235.9L956.5 237L955.9 238.2L955.2 239.3L954.5 240.5L953.9 241.6L953.2 242.8L952.6 244L951.9 245.1L951.2 246.3L950.6 247.5L949.9 248.6L949.2 249.8L948.6 251L947.9 252.1L947.2 253.3L946.5 254.5L945.9 255.7L945.2 256.8L944.5 258L943.8 259.2L943.1 260.4L942.5 261.6L941.8 262.8L941.1 263.9L940.4 265.1L939.7 266.3L939 267.5L938.3 268.7L937.6 269.9L936.9 271.1L936.2 272.3L935.5 273.4L934.8 274.6L934.1 275.8L933.4 277L932.7 278.2L932 279.4L931.3 280.6L930.6 281.8L929.9 283L929.2 284.2L928.4 285.4L927.7 286.6L927 287.8L926.3 289L925.6 290.2L924.9 291.4L924.1 292.6L923.4 293.8L922.7 295L922 296.2L921.3 297.4L920.5 298.6L919.8 299.8L919.1 301L918.4 302.2L917.6 303.4L916.9 304.6L916.2 305.8L915.5 307.1L914.7 308.3L914 309.5L913.3 310.7L912.6 311.9L911.8 313.1L911.1 314.3L910.4 315.5L909.6 316.7L908.9 317.9L908.2 319.1L907.4 320.3L906.7 321.5L906 322.7L905.2 323.9L904.5 325.1L903.8 326.4L903 327.6L902.3 328.8L901.6 330L900.8 331.2L900.1 332.4L899.4 333.6L898.6 334.8L897.9 336L897.2 337.2L896.4 338.4L895.7 339.6L895 340.8L894.3 342L893.5 343.2L892.8 344.4L892.1 345.6L891.3 346.8L890.6 348L889.9 349.2L889.1 350.4L888.4 351.6L887.7 352.8L887 354L886.2 355.2L885.5 356.4L884.8 357.6L884.1 358.8L883.3 360L882.6 361.2L881.9 362.4L881.2 363.6L880.5 364.8L879.7 366L879 367.2L878.3 368.4L877.6 369.6L876.9 370.8L876.2 372L875.4 373.1L874.7 374.3L874 375.5L873.3 376.7L872.6 377.9L871.9 379.1L871.2 380.3L870.5 381.4L869.8 382.6L869.1 383.8L868.4 385L867.7 386.1L867 387.3L866.3 388.5L865.6 389.7L864.9 390.8L864.2 392L863.5 393.2L862.8 394.4L862.1 395.5L861.4 396.7L860.7 397.8L860.1 399L859.4 400.2L858.7 401.3L858 402.5L857.3 403.6L856.6 404.8L856 405.9L855.3 407.1L854.6 408.2L853.9 409.4L853.3 410.5L852.6 411.7L851.9 412.8L851.3 414L850.6 415.1L849.9 416.2L849.3 417.4L848.6 418.5L848 419.6L847.3 420.7L846.7 421.9L846 423L845.4 424.1L844.7 425.2L844.1 426.3L843.4 427.5L842.8 428.6L842.1 429.7L841.5 430.8L840.8 431.9L840.2 433L839.6 434.1L838.9 435.2L838.3 436.2L837.7 437.3L837 438.4L836.4 439.5L835.8 440.6L835.1 441.6L834.5 442.7L833.9 443.8L833.3 444.8L832.6 445.9L832 446.9L831.4 448L830.8 449L830.2 450.1L829.5 451.1L828.9 452.2L828.3 453.2L827.7 454.2L827.1 455.2L826.5 456.3L825.8 457.3L825.2 458.3L824.6 459.3L824 460.3L823.4 461.3L822.8 462.3" stroke="#808080" stroke-width="0.9" stroke-dasharray="0.9 2.1" fill="none"/>
<path d="" stroke="#808080" stroke-width="0.9" stroke-dasharray="0.9 2.1" fill="none"/>
<path d="M994.6 87L993.1 87L991.7 87L990.4 87L989.1 87.1L987.8 87.2L986.6 87.3L985.4 87.5L984.3 87.7L983.2 87.9L982.1 88.1L981.1 88.4L980.1 88.7L979.1 89.1L978.2 89.5L977.3 89.9L976.5 90.3L975.7 90.8L974.9 91.2L974.1 91.8L973.4 92.3L972.7 92.9L972 93.4L971.3 94.1L970.7 94.7L970.1 95.3L969.5 96L968.9 96.7L968.3 97.4L967.8 98.2L967.3 98.9L966.7 99.7L966.2 100.5L965.8 101.3L965.3 102.1L964.8 103L964.4 103.8L963.9 104.7L963.5 105.6L963.1 106.5L962.6 107.4L962.2 108.4L961.8 109.3L961.4 110.3L961.1 111.2L960.7 112.2L960.3 113.2L959.9 114.2L959.6 115.2L959.2 116.2L958.9 117.3L958.5 118.3L958.2 119.4L957.8 120.4L957.5 121.5L957.1 122.6L956.8 123.7L956.4 124.7L956.1 125.8L955.8 127L955.4 128.1L955.1 129.2L954.8 130.3L954.5 131.4L954.1 132.6L953.8 133.7L953.5 134.9L953.2 136L952.8 137.2L952.5 138.4L952.2 139.5L951.9 140.7L951.5 141.9L951.2 143.1L950.9 144.3L950.5 145.5L950.2 146.7L949.9 147.9L949.6 149.1L949.2 150.3L948.9 151.5L948.6 152.7L948.2 153.9L947.9 155.1L947.6 156.4L947.2 157.6L946.9 158.8L946.6 160.1L946.2 161.3L945.9 162.5L945.5 163.8L945.2 165L944.9 166.3L944.5 167.5L944.2 168.8L943.8 170.1L943.5 171.3L943.1 172.6L942.8 173.8L942.4 175.1L942.1 176.4L941.7 177.6L941.3 178.9L941 180.2L940.6 181.5L940.3 182.7L939.9 184L939.5 185.3L939.2 186.6L938.8 187.9L938.4 189.1L938.1 190.4L937.7 191.7L937.3 193L936.9 194.3L936.6 195.6L936.2 196.9L935.8 198.2L935.4 199.5L935 200.8L934.7 202.1L934.3 203.4L933.9 204.7L933.5 206L933.1 207.3L932.7 208.6L932.3 209.9L931.9 211.2L931.5 212.5L931.1 213.8L930.7 215.1L930.3 216.4L929.9 217.7L929.5 219.1L929.1 220.4L928.7 221.7L928.3 223L927.9 224.3L927.5 225.6L927.1 226.9L926.7 228.3L926.3 229.6L925.9 230.9L925.5 232.2L925 233.5L924.6 234.9L924.2 236.2L923.8 237.5L923.4 238.8L923 240.2L922.5 241.5L922.1 242.8L921.7 244.1L921.3 245.5L920.8 246.8L920.4 248.1L920 249.4L919.6 250.8L919.1 252.1L918.7 253.4L918.3 254.8L917.8 256.1L917.4 257.4L917 258.8L916.5 260.1L916.1 261.4L915.7 262.8L915.2 264.1L914.8 265.4L914.4 266.7L913.9 268.1L913.5 269.4L913.1 270.8L912.6 272.1L912.2 273.4L911.7 274.8L911.3 276.1L910.9 277.4L910.4 278.8L910 280.1L909.5 281.4L909.1 282.8L908.6 284.1L908.2 285.4L907.8 286.8L907.3 288.1L906.9 289.5L906.4 290.8L906 292.1L905.5 293.5L905.1 294.8L904.6 296.2L904.2 297.5L903.8 298.8L903.3 300.2L902.9 301.5L902.4 302.8L902 304.2L901.5 305.5L901.1 306.9L900.6 308.2L900.2 309.5L899.7 310.9L899.3 312.2L898.9 313.6L898.4 314.9L898 316.2L897.5 317.6L897.1 318.9L896.6 320.3L896.2 321.6L895.7 322.9L895.3 324.3L894.9 325.6L894.4 327L894 328.3L893.5 329.6L893.1 331L892.6 332.3L892.2 333.7L891.8 335L891.3 336.3L890.9 337.7L890.5 339L890 340.4L889.6 341.7L889.1 343L888.7 344.4L888.3 345.7L887.8 347.1L887.4 348.4L887 349.7L886.5 351.1L886.1 352.4L885.7 353.7L885.2 355.1L884.8 356.4L884.4 357.8L884 359.1L883.5 360.4L883.1 361.8L882.7 363.1L882.3 364.4L881.8 365.8L881.4 367.1L881 368.4L880.6 369.8L880.2 371.1L879.8 372.4L879.3 373.8L878.9 375.1L878.5 376.4L878.1 377.8L877.7 379.1L877.3 380.4L876.9 381.8L876.5 383.1L876.1 384.4L875.6 385.8L875.2 387.1L874.8 388.4L874.4 389.8L874 391.1L873.6 392.4L873.3 393.7L872.9 395.1L872.5 396.4L872.1 397.7L871.7 399L871.3 400.4L870.9 401.7L870.5 403L870.1 404.3L869.8 405.7L869.4 407L869 408.3L868.6 409.6L868.2 410.9L867.9 412.3L867.5 413.6L867.1 414.9L866.7 416.2L866.4 417.5L866 418.9L865.6 420.2L865.3 421.5L864.9 422.8L864.6 424.1L864.2 425.4L863.8 426.7L863.5 428L863.1 429.3L862.8 430.6L862.4 432L862.1 433.3L861.7 434.6L861.4 435.9L861.1 437.2L860.7 438.5L860.4 439.8L860 441.1" stroke="#808080" stroke-width="0.9" stroke-dasharray="0.9 2.1" fill="none"/>
<path d="" stroke="#808080" stroke-width="0.9" stroke-dasharray="0.9 2.1" fill="none"/>
<path d="" stroke="#808080" stroke-width="0.9" stroke-dasharray="0.9 2.1" fill="none"/>
<path d="" stroke="#808080" stroke-width="0.9" stroke-dasharray="0.9 2.1" fill="none"/>
<path d="" stroke="#808080" stroke-width="0.9" stroke-dasharray="0.9 2.1" fill="none"/>
<path d="" stroke="#808080" stroke-width="0.9" stroke-dasharray="0.9 2.1" fill="none"/>
<path d="M1041.3 95.6L1040.3 94.6L1039.3 93.6L1038.4 92.6L1037.5 91.6L1036.6 90.7L1035.8 89.8L1034.9 88.8L1034.2 87.9L1033.4 87.1L1032.7 86.2L1032 85.4L1031.4 84.6L1030.8 83.8L1030.3 83L1029.8 82.2L1029.4 81.5L1029.1 80.8L1028.8 80.2L1028.5 79.5L1028.4 78.9L1028.3 78.3L1028.3 77.8L1028.3 77.3L1028.5 76.8L1028.7 76.4L1029 76L1029.5 75.6L1030 75.3L1030.6 75L1031.3 74.7L1032.1 74.5L1033.1 74.3L1034.1 74.2L1035.3 74.1L1036.5 74.1L1037.9 74.1L1039.4 74.1L1041.1 74.2L1042.8 74.3L1044.7 74.4L1046.7 74.6L1048.8 74.9M753.2 75.2L753.6 75.5L753.9 75.8L754.1 76.2L754.2 76.6L754.2 77.1L754.1 77.6L753.9 78.1L753.6 78.7L753.2 79.3L752.7 79.9L752.2 80.6L751.6 81.3L750.9 82L750.1 82.7L749.3 83.5L748.4 84.3L747.4 85.1L746.4 85.9L745.4 86.8L744.3 87.6L743.2 88.5L742 89.4L740.7 90.4L739.5 91.3L738.2 92.3L736.9 93.2L735.5 94.2L734.1 95.2L732.7 96.2L731.2 97.3L729.8 98.3L728.3 99.4L726.8 100.4L725.2 101.5L723.7 102.6L722.1 103.7L720.6 104.8L719 105.9L717.4 107.1L715.8 108.2L714.1 109.3L712.5 110.5L710.9 111.7L709.2 112.8L707.5 114L705.9 115.2L704.2 116.4L702.5 117.5L700.9 118.7L699.2 119.9L697.5 121.2L695.8 122.4L694.1 123.6L692.5 124.8L690.8 126L689.1 127.3L687.4 128.5L685.7 129.7L684.1 131L682.4 132.2L680.7 133.5L679 134.7L677.4 136L675.7 137.3L674 138.5L672.4 139.8L670.7 141.1L669.1 142.3L667.5 143.6L665.8 144.9L664.2 146.2L662.6 147.5L661 148.7L659.4 150L657.8 151.3L656.2 152.6L654.6 153.9L653.1 155.2L651.5 156.5L650 157.8L648.4 159.1L646.9 160.4L645.4 161.7L643.9 163L642.4 164.3L640.9 165.7L639.4 167L637.9 168.3L636.5 169.6L635 170.9L633.6 172.2L632.1 173.6L630.7 174.9L629.3 176.2L627.9 177.5L626.6 178.9L625.2 180.2L623.8 181.5L622.5 182.8L621.2 184.2L619.9 185.5L618.6 186.8L617.3 188.2L616 189.5L614.7 190.8L613.5 192.2L612.2 193.5L611 194.9L609.8 196.2L608.6 197.5L607.4 198.9L606.3 200.2L605.1 201.6L604 202.9L602.9 204.2L601.8 205.6L600.7 206.9L599.6 208.3L598.5 209.6L597.5 211L596.4 212.3L595.4 213.7L594.4 215L593.4 216.4L592.5 217.7L591.5 219.1L590.6 220.4L589.7 221.8L588.8 223.1L587.9 224.5L587 225.8L586.1 227.2L585.3 228.5L584.5 229.9L583.6 231.2L582.9 232.6L582.1 234L581.3 235.3L580.6 236.7L579.8 238L579.1 239.4L578.4 240.7L577.8 242.1L577.1 243.5L576.5 244.8L575.8 246.2L575.2 247.5L574.6 248.9L574 250.3L573.5 251.6L573 253L572.4 254.3L571.9 255.7L571.4 257.1L571 258.4L570.5 259.8L570.1 261.2L569.7 262.5L569.3 263.9L568.9 265.2L568.5 266.6L568.2 268L567.8 269.3L567.5 270.7L567.2 272.1L566.9 273.4L566.7 274.8L566.4 276.2L566.2 277.5L566 278.9L565.8 280.3L565.7 281.6L565.5 283L565.4 284.3L565.3 285.7L565.2 287.1L565.1 288.4L565 289.8L565 291.2L564.9 292.5L564.9 293.9L564.9 295.3L565 296.6L565 298L565.1 299.4L565.2 300.7L565.3 302.1L565.4 303.5L565.5 304.8L565.7 306.2L565.9 307.6L566 308.9L566.3 310.3L566.5 311.7L566.7 313L567 314.4L567.3 315.8L567.6 317.2L567.9 318.5L568.2 319.9L568.6 321.3L568.9 322.6L569.3 324L569.7 325.4L570.2 326.7L570.6 328.1L571.1 329.5L571.5 330.8L572 332.2L572.5 333.6L573.1 334.9L573.6 336.3L574.2 337.7L574.8 339L575.4 340.4L576 341.8L576.6 343.1L577.3 344.5L578 345.9L578.6 347.2L579.3 348.6L580.1 350L580.8 351.3L581.6 352.7L582.3 354.1L583.1 355.4L583.9 356.8L584.8 358.2L585.6 359.5L586.5 360.9L587.3 362.3L588.2 363.6L589.1 365L590.1 366.4L591 367.7L592 369.1L592.9 370.4L593.9 371.8L594.9 373.2L596 374.5L597 375.9L598.1 377.3L599.1 378.6L600.2 380L601.3 381.4L602.5 382.7L603.6 384.1L604.8 385.4L605.9 386.8L607.1 388.2L608.3 389.5L609.5 390.9L610.7 392.2L612 393.6L613.3 395L614.5 396.3L615.8 397.7" stroke="#808080" stroke-width="0.9" stroke-dasharray="0.9 2.1" fill="none"/>
<path d="M927.7 108L929.2 109.2L930.6 110.4L932.1 111.6L933.6 112.9L935 114.1L936.5 115.4L938 116.7L939.5 118L941 119.3L942.4 120.6L943.9 121.9L945.4 123.2L946.9 124.5L948.4 125.9L949.9 127.2L951.4 128.6L952.9 129.9L954.4 131.3L955.8 132.7L957.3 134.1L958.8 135.5L960.3 136.9L961.8 138.3L963.3 139.7L964.8 141.1L966.3 142.5L967.8 143.9L969.2 145.3L970.7 146.8L972.2 148.2L973.7 149.6L975.2 151.1L976.6 152.5L978.1 154L979.6 155.4L981.1 156.9L982.5 158.3L984 159.8L985.4 161.3L986.9 162.7L988.3 164.2L989.8 165.7L991.2 167.2L992.7 168.6L994.1 170.1L995.5 171.6L996.9 173.1L998.4 174.6L999.8 176.1" stroke="#808080" stroke-width="0.9" stroke-dasharray="0.9 2.1" fill="none"/>
<path d="M909.1 94L907.9 93.2L906.6 92.4L905.4 91.6L904.2 90.9L903 90.1L901.7 89.4L900.5 88.8L899.3 88.1L898.1 87.5L896.8 86.9L895.6 86.3L894.4 85.7L893.1 85.2L891.9 84.7L890.7 84.2L889.4 83.8L888.2 83.4L886.9 83L885.6 82.7L884.3 82.4L883 82.1L881.7 81.9L880.4 81.6L879.1 81.5L877.7 81.3L876.4 81.2L875 81.2L873.6 81.1L872.2 81.2L870.8 81.2L869.3 81.3L867.8 81.4L866.3 81.5L864.8 81.7L863.3 81.9L861.7 82.2L860.1 82.5L858.5 82.8L856.9 83.2L855.2 83.5L853.5 84L851.8 84.4L850.1 84.9L848.3 85.4L846.5 85.9L844.7 86.5L842.9 87.1L841 87.7L839.1 88.3L837.2 89L835.3 89.7L833.3 90.4L831.3 91.2L829.3 91.9L827.3 92.7L825.3 93.5L823.2 94.3L821.1 95.1L819 96L816.9 96.9L814.7 97.8L812.6 98.7L810.4 99.6L808.2 100.5L806 101.5L803.8 102.4L801.6 103.4L799.4 104.4L797.1 105.4L794.8 106.4L792.6 107.4L790.3 108.5L788 109.5L785.7 110.6L783.3 111.6L781 112.7L778.7 113.8L776.4 114.9L774 116L771.7 117.1L769.3 118.2L766.9 119.3L764.6 120.5L762.2 121.6L759.8 122.8L757.4 123.9L755.1 125.1L752.7 126.2L750.3 127.4L747.9 128.6L745.5 129.8L743.1 130.9L740.7 132.1L738.3 133.3L735.9 134.5L733.6 135.7L731.2 136.9L728.8 138.2L726.4 139.4L724 140.6L721.6 141.8L719.2 143L716.9 144.3L714.5 145.5L712.1 146.8L709.8 148L707.4 149.2L705.1 150.5L702.7 151.7L700.4 153L698 154.3L695.7 155.5L693.3 156.8L691 158L688.7 159.3L686.4 160.6L684.1 161.9L681.8 163.1L679.5 164.4L677.2 165.7L675 167L672.7 168.2L670.4 169.5L668.2 170.8L666 172.1L663.7 173.4L661.5 174.7L659.3 176L657.1 177.3L654.9 178.6L652.7 179.9L650.5 181.2L648.4 182.5L646.2 183.8L644.1 185.1L642 186.4L639.8 187.7L637.7 189L635.6 190.3L633.5 191.6L631.5 192.9L629.4 194.3L627.4 195.6L625.3 196.9L623.3 198.2L621.3 199.5L619.3 200.8L617.3 202.2L615.3 203.5L613.4 204.8L611.4 206.1L609.5 207.5L607.6 208.8L605.7 210.1L603.8 211.4L601.9 212.8L600.1 214.1L598.2 215.4L596.4 216.7L594.6 218.1L592.8 219.4L591 220.7L589.2 222.1L587.5 223.4L585.7 224.7L584 226.1L582.3 227.4L580.6 228.7L578.9 230.1L577.2 231.4L575.6 232.8L574 234.1L572.4 235.4L570.8 236.8L569.2 238.1L567.6 239.4L566.1 240.8L564.5 242.1L563 243.5L561.5 244.8L560 246.2L558.6 247.5L557.1 248.8L555.7 250.2L554.3 251.5L552.9 252.9L551.5 254.2L550.2 255.6L548.9 256.9L547.5 258.3L546.2 259.6L545 260.9L543.7 262.3L542.4 263.6L541.2 265L540 266.3L538.8 267.7L537.6 269L536.5 270.4L535.4 271.7L534.3 273.1L533.2 274.4L532.1 275.8L531 277.1L530 278.5L529 279.8L528 281.2L527 282.5L526 283.9L525.1 285.2L524.2 286.6L523.3 287.9L522.4 289.3L521.5 290.6L520.7 292L519.9 293.3L519.1 294.7L518.3 296L517.5 297.4L516.8 298.7L516.1 300.1L515.4 301.5L514.7 302.8L514 304.2L513.4 305.5L512.8 306.9L512.2 308.2L511.6 309.6L511 310.9L510.5 312.3L510 313.6L509.5 315L509 316.3L508.6 317.7L508.1 319L507.7 320.4L507.3 321.7L507 323.1L506.6 324.5L506.3 325.8L506 327.2L505.7 328.5L505.4 329.9L505.2 331.2L505 332.6L504.7 333.9L504.6 335.3L504.4 336.6L504.3 338L504.1 339.3L504 340.7L504 342L503.9 343.4L503.9 344.7L503.8 346.1L503.8 347.4L503.9 348.8L503.9 350.2L504 351.5L504.1 352.9L504.2 354.2L504.3 355.6L504.5 356.9L504.6 358.3L504.8 359.6L505 361L505.3 362.3L505.5 363.7L505.8 365L506.1 366.4L506.4 367.7L506.7 369.1L507.1 370.4L507.5 371.8L507.9 373.1L508.3 374.5L508.7 375.8L509.2 377.1L509.7 378.5L510.2 379.8L510.7 381.2L511.2 382.5L511.8 383.9L512.4 385.2L513 386.6L513.6 387.9L514.2 389.3L514.9 390.6L515.6 391.9L516.3 393.3L517 394.6L517.7 396L518.5 397.3L519.2 398.7L520 400L520.9 401.3L521.7 402.7L522.5 404L523.4 405.4L524.3 406.7" stroke="#808080" stroke-width="0.9" stroke-dasharray="0.9 2.1" fill="none"/>
<path d="M989.3 62.7L993.6 64.2L997.9 65.8" stroke="#808080" stroke-width="0.9" stroke-dasharray="0.9 2.1" fill="none"/>
<path d="M938.6 44.9L935.6 43.9L932.7 43L929.9 42.1L927.3 41.3L924.9 40.6L922.7 40.1L920.7 39.7L919 39.4L917.4 39.3L916.1 39.4L914.9 39.6L913.9 39.9L913 40.5L912.3 41.1L911.6 41.8L911 42.7L910.4 43.6L909.8 44.6L909.3 45.6L908.8 46.7L908.3 47.8L907.8 49L907.3 50.2L906.9 51.4L906.4 52.6L905.9 53.8L905.5 55.1L905 56.4L904.6 57.7L904.1 59L903.6 60.3L903.2 61.6L902.7 62.9L902.3 64.3L901.8 65.6L901.4 66.9L900.9 68.3L900.4 69.6L900 71L899.5 72.3L899.1 73.7L898.6 75.1L898.1 76.4L897.7 77.8L897.2 79.2L896.8 80.5L896.3 81.9L895.9 83.3L895.4 84.7L894.9 86.1L894.5 87.4L894 88.8L893.6 90.2L893.1 91.6L892.7 93L892.2 94.4L891.8 95.7L891.3 97.1L890.8 98.5L890.4 99.9L889.9 101.3L889.5 102.7L889 104.1L888.6 105.5L888.1 106.9L887.7 108.3L887.2 109.7L886.8 111.1L886.3 112.5L885.9 113.9L885.4 115.3L885 116.7L884.6 118.1L884.1 119.5L883.7 120.9L883.2 122.3L882.8 123.6L882.3 125L881.9 126.4L881.5 127.8L881 129.3L880.6 130.7L880.2 132.1L879.7 133.5L879.3 134.9L878.9 136.3L878.4 137.7L878 139.1L877.6 140.5L877.2 141.9L876.7 143.3L876.3 144.7L875.9 146.1L875.5 147.5L875.1 148.9L874.6 150.3L874.2 151.7L873.8 153.1L873.4 154.5L873 155.9L872.6 157.3L872.2 158.7L871.8 160.1L871.4 161.5L871 162.9L870.6 164.3L870.2 165.7L869.8 167.1L869.4 168.5L869 170L868.6 171.4L868.2 172.8L867.8 174.2L867.4 175.6L867 177L866.7 178.4L866.3 179.8L865.9 181.2L865.5 182.6L865.2 184L864.8 185.4L864.4 186.8L864 188.2L863.7 189.6L863.3 191L863 192.5L862.6 193.9L862.2 195.3L861.9 196.7L861.5 198.1L861.2 199.5L860.8 200.9L860.5 202.3L860.2 203.7L859.8 205.1L859.5 206.5L859.1 207.9L858.8 209.3L858.5 210.7L858.2 212.2L857.8 213.6L857.5 215L857.2 216.4L856.9 217.8L856.6 219.2L856.2 220.6L855.9 222L855.6 223.4L855.3 224.8L855 226.2L854.7 227.6L854.4 229L854.1 230.5L853.8 231.9L853.5 233.3L853.3 234.7L853 236.1L852.7 237.5L852.4 238.9L852.1 240.3L851.9 241.7L851.6 243.1L851.3 244.5L851.1 245.9L850.8 247.4L850.6 248.8L850.3 250.2L850.1 251.6L849.8 253L849.6 254.4L849.3 255.8L849.1 257.2L848.8 258.6L848.6 260L848.4 261.4L848.2 262.8L847.9 264.3L847.7 265.7L847.5 267.1L847.3 268.5L847.1 269.9L846.9 271.3L846.7 272.7L846.4 274.1L846.3 275.5L846.1 276.9L845.9 278.3L845.7 279.8L845.5 281.2L845.3 282.6L845.1 284L844.9 285.4L844.8 286.8L844.6 288.2L844.4 289.6L844.3 291L844.1 292.4L844 293.8L843.8 295.2L843.7 296.7L843.5 298.1L843.4 299.5L843.2 300.9L843.1 302.3L842.9 303.7L842.8 305.1L842.7 306.5L842.6 307.9L842.4 309.3L842.3 310.7L842.2 312.2L842.1 313.6L842 315L841.9 316.4L841.8 317.8L841.7 319.2L841.6 320.6L841.5 322L841.4 323.4L841.4 324.8L841.3 326.2L841.2 327.6L841.1 329.1L841.1 330.5L841 331.9L840.9 333.3L840.9 334.7L840.8 336.1L840.8 337.5L840.7 338.9L840.7 340.3L840.6 341.7L840.6 343.1L840.6 344.6L840.5 346L840.5 347.4L840.5 348.8L840.5 350.2L840.5 351.6L840.4 353L840.4 354.4L840.4 355.8L840.4 357.2L840.4 358.6L840.4 360.1L840.4 361.5L840.4 362.9L840.5 364.3L840.5 365.7L840.5 367.1L840.5 368.5L840.6 369.9L840.6 371.3L840.6 372.7L840.7 374.1L840.7 375.5L840.8 377L840.8 378.4L840.9 379.8L840.9 381.2L841 382.6L841 384L841.1 385.4L841.2 386.8L841.3 388.2L841.3 389.6L841.4 391L841.5 392.4L841.6 393.9L841.7 395.3L841.8 396.7L841.9 398.1L842 399.5L842.1 400.9L842.2 402.3L842.3 403.7L842.4 405.1L842.6 406.5L842.7 407.9L842.8 409.3L842.9 410.8L843.1 412.2L843.2 413.6L843.3 415L843.5 416.4L843.6 417.8L843.8 419.2L843.9 420.6L844.1 422L844.2 423.4L844.4 424.8L844.6 426.2L844.7 427.6L844.9 429.1L845.1 430.5L845.3 431.9L845.5 433.3L845.6 434.7L845.8 436.1L846 437.5" stroke="#808080" stroke-width="0.9" stroke-dasharray="0.9 2.1" fill="none"/>
<path d="M763.3 102.1L765.9 100.5L768.5 98.9L771.2 97.3L773.8 95.6L776.5 94L779.1 92.4L781.8 90.8L784.5 89.2L787.2 87.6L789.8 86L792.5 84.4L795.2 82.8L797.9 81.2L800.6 79.6L803.4 78L806.1 76.4L808.8 74.8L811.5 73.2L814.2 71.6L817 70L819.7 68.4L822.4 66.9L825.1 65.3L827.8 63.7L830.6 62.1L833.3 60.6L836 59L838.6 57.5L841.3 55.9L844 54.4L846.6 52.9L849.2 51.4L851.8 49.9L854.3 48.5L856.8 47L859.2 45.6L861.5 44.3L863.7 42.9L865.7 41.7L867.5 40.5L869.1 39.5L870.3 38.5L871 37.8L871.1 37.2M931.7 36.9L929.9 36.9L929 37.1L928.7 37.6L929 38.3L929.7 39.2L930.7 40.3L932 41.4L933.5 42.6L935.1 43.9L936.8 45.3L938.6 46.7L940.4 48.1L942.3 49.5L944.3 51L946.3 52.5L948.2 54L950.3 55.6L952.3 57.1L954.3 58.6L956.4 60.2L958.4 61.7L960.5 63.3L962.5 64.9L964.6 66.5L966.7 68L968.7 69.6L970.8 71.2L972.9 72.8L975 74.4L977 76L979.1 77.6L981.2 79.2L983.2 80.8L985.3 82.4L987.3 84L989.4 85.6L991.4 87.2L993.4 88.8L995.5 90.4L997.5 92L999.5 93.6" stroke="#808080" stroke-width="0.9" stroke-dasharray="0.9 2.1" fill="none"/>
<path d="M756.7 106.2L754.5 107.6L752.2 109L750 110.4L747.8 111.8L745.6 113.2L743.4 114.6L741.2 116L739 117.4L736.8 118.8L734.7 120.2L732.5 121.6L730.4 123L728.2 124.4L726.1 125.8L724 127.2L721.9 128.6L719.8 130L717.7 131.5L715.6 132.9L713.6 134.3L711.5 135.7L709.5 137.1L707.4 138.5L705.4 139.9L703.4 141.3L701.4 142.7L699.4 144.1L697.4 145.5L695.4 146.9L693.5 148.3L691.5 149.7L689.6 151.1L687.7 152.5L685.8 154L683.9 155.4L682 156.8L680.1 158.2L678.3 159.6L676.4 161L674.6 162.4L672.8 163.8L671 165.2L669.2 166.6L667.4 168L665.6 169.4L663.8 170.8L662.1 172.2L660.4 173.7L658.7 175.1L657 176.5L655.3 177.9L653.6 179.3L651.9 180.7L650.3 182.1L648.7 183.5L647 184.9L645.4 186.3L643.9 187.7L642.3 189.1L640.7 190.6L639.2 192L637.7 193.4L636.1 194.8L634.6 196.2L633.2 197.6L631.7 199L630.2 200.4L628.8 201.8L627.4 203.2L626 204.6L624.6 206.1L623.2 207.5L621.8 208.9L620.5 210.3L619.2 211.7L617.9 213.1L616.6 214.5L615.3 215.9L614 217.3L612.8 218.7L611.6 220.1L610.3 221.6L609.2 223L608 224.4L606.8 225.8L605.7 227.2L604.5 228.6L603.4 230L602.3 231.4L601.3 232.8L600.2 234.2L599.1 235.6L598.1 237.1L597.1 238.5L596.1 239.9L595.1 241.3L594.2 242.7L593.3 244.1L592.3 245.5L591.4 246.9L590.5 248.3L589.7 249.7L588.8 251.2L588 252.6L587.2 254L586.4 255.4L585.6 256.8L584.8 258.2L584.1 259.6L583.4 261L582.7 262.4L582 263.8L581.3 265.2L580.7 266.7L580 268.1L579.4 269.5L578.8 270.9L578.2 272.3L577.7 273.7L577.1 275.1L576.6 276.5L576.1 277.9L575.6 279.3L575.2 280.8L574.7 282.2L574.3 283.6L573.9 285L573.5 286.4L573.1 287.8L572.7 289.2L572.4 290.6L572.1 292L571.8 293.4L571.5 294.9L571.3 296.3L571 297.7L570.8 299.1L570.6 300.5L570.4 301.9L570.2 303.3L570.1 304.7L570 306.1L569.9 307.5L569.8 309L569.7 310.4L569.6 311.8L569.6 313.2L569.6 314.6L569.6 316L569.6 317.4L569.7 318.8L569.7 320.2L569.8 321.6L569.9 323.1L570 324.5L570.2 325.9L570.3 327.3L570.5 328.7L570.7 330.1L570.9 331.5L571.1 332.9L571.4 334.3L571.6 335.7L571.9 337.1L572.2 338.6L572.6 340L572.9 341.4L573.3 342.8L573.7 344.2L574.1 345.6L574.5 347L574.9 348.4L575.4 349.8L575.9 351.2L576.3 352.7L576.9 354.1L577.4 355.5L577.9 356.9L578.5 358.3L579.1 359.7L579.7 361.1L580.3 362.5L581 363.9L581.6 365.3L582.3 366.8L583 368.2L583.7 369.6L584.5 371L585.2 372.4L586 373.8L586.8 375.2L587.6 376.6L588.4 378L589.2 379.4L590.1 380.9L591 382.3L591.9 383.7L592.8 385.1L593.7 386.5L594.7 387.9L595.6 389.3L596.6 390.7L597.6 392.1L598.6 393.5L599.7 394.9L600.7 396.4L601.8 397.8L602.9 399.2L604 400.6L605.1 402L606.2 403.4L607.4 404.8L608.6 406.2L609.7 407.6L610.9 409L612.2 410.5L613.4 411.9L614.7 413.3L615.9 414.7L617.2 416.1L618.5 417.5L619.8 418.9L621.2 420.3L622.5 421.7L623.9 423.1L625.3 424.5L626.7 426L628.1 427.4L629.5 428.8L631 430.2L632.4 431.6L633.9 433L635.4 434.4L636.9 435.8L638.4 437.2L639.9 438.6L641.5 440L643.1 441.5L644.6 442.9L646.2 444.3L647.9 445.7L649.5 447.1L651.1 448.5L652.8 449.9L654.4 451.3L656.1 452.7L657.8 454.1L659.5 455.5L661.2 456.9L663 458.4L664.7 459.8L666.5 461.2L668.3 462.6L670.1 464L671.9 465.4L673.7 466.8L675.5 468.2L677.4 469.6L679.2 471L681.1 472.4L683 473.8L684.8 475.3L686.7 476.7L688.7 478.1L690.6 479.5L692.5 480.9L694.5 482.3" stroke="#808080" stroke-width="0.9" stroke-dasharray="0.9 2.1" fill="none"/>
<path d="M741.7 108.6L744.7 107L747.7 105.3L750.8 103.7L753.8 102.1L756.9 100.5L759.9 98.8L763 97.2L766.1 95.6L769.2 93.9L772.3 92.3L775.5 90.7L778.6 89.1L781.7 87.4L784.9 85.8L788 84.2L791.2 82.5L794.4 80.9L797.6 79.3L800.7 77.6L803.9 76L807.2 74.4L810.4 72.8L813.6 71.1L816.8 69.5L820 67.9L823.3 66.2L826.5 64.6L829.8 63L833 61.4L836.3 59.7L839.6 58.1L842.9 56.5L846.1 54.8L849.4 53.2L852.7 51.6L856 50L859.3 48.3L862.6 46.7L865.9 45.1L869.2 43.4L872.5 41.8L875.8 40.2L879.1 38.6L882.4 36.9L885.7 35.3L889 33.7L892.3 32L895.7 30.4L899 28.8L902.1 27.3L903.8 28.8L905.6 30.5L907.4 32.1L909.2 33.7L911 35.4L912.8 37L914.6 38.6L916.4 40.2L918.2 41.9L919.9 43.5L921.7 45.1L923.5 46.8L925.3 48.4L927.1 50L928.9 51.6L930.6 53.3L932.4 54.9L934.2 56.5L936 58.2L937.7 59.8L939.5 61.4L941.3 63L943 64.7L944.8 66.3L946.5 67.9L948.3 69.6L950 71.2L951.8 72.8L953.5 74.5L955.3 76.1L957 77.7L958.7 79.3L960.5 81L962.2 82.6L963.9 84.2L965.6 85.9L967.3 87.5L969 89.1L970.7 90.7L972.4 92.4L974.1 94L975.8 95.6L977.4 97.3L979.1 98.9L980.8 100.5L982.4 102.1L984.1 103.8L985.7 105.4L987.3 107L989 108.7L990.6 110.3L992.2 111.9L993.8 113.5L995.4 115.2L997 116.8L998.6 118.4" stroke="#808080" stroke-width="0.9" stroke-dasharray="0.9 2.1" fill="none"/>
<path d="M728.9 115.6L726.3 117L723.8 118.4L721.3 119.8L718.8 121.2L716.2 122.7L713.7 124.1L711.2 125.5L708.8 126.9L706.3 128.3L703.8 129.7L701.4 131.1L699 132.5L696.5 134L694.1 135.4L691.7 136.8L689.3 138.2L687 139.6L684.6 141L682.3 142.4L679.9 143.8L677.6 145.2L675.3 146.7L673 148.1L670.7 149.5L668.4 150.9L666.2 152.3L663.9 153.7L661.7 155.1L659.5 156.5L657.3 158L655.1 159.4L652.9 160.8L650.7 162.2L648.6 163.6L646.5 165L644.3 166.4L642.2 167.8L640.1 169.2L638.1 170.7L636 172.1L634 173.5L631.9 174.9L629.9 176.3L627.9 177.7L626 179.1L624 180.5L622 182L620.1 183.4L618.2 184.8L616.3 186.2L614.4 187.6L612.5 189L610.7 190.4L608.8 191.8L607 193.2L605.2 194.7L603.4 196.1L601.7 197.5L599.9 198.9L598.2 200.3L596.5 201.7L594.8 203.1L593.1 204.5L591.4 206L589.8 207.4L588.2 208.8L586.5 210.2L585 211.6L583.4 213L581.8 214.4L580.3 215.8L578.8 217.2L577.3 218.7L575.8 220.1L574.3 221.5L572.9 222.9L571.5 224.3L570.1 225.7L568.7 227.1L567.3 228.5L565.9 230L564.6 231.4L563.3 232.8L562 234.2L560.7 235.6L559.5 237L558.3 238.4L557 239.8L555.9 241.3L554.7 242.7L553.5 244.1L552.4 245.5L551.3 246.9L550.2 248.3L549.1 249.7L548.1 251.1L547 252.5L546 254L545 255.4L544.1 256.8L543.1 258.2L542.2 259.6L541.3 261L540.4 262.4L539.5 263.8L538.7 265.3L537.8 266.7L537 268.1L536.2 269.5L535.5 270.9L534.7 272.3L534 273.7L533.3 275.1L532.6 276.5L532 278L531.3 279.4L530.7 280.8L530.1 282.2L529.5 283.6L529 285L528.5 286.4L527.9 287.8L527.5 289.3L527 290.7L526.5 292.1L526.1 293.5L525.7 294.9L525.3 296.3L525 297.7L524.6 299.1L524.3 300.5L524 302L523.7 303.4L523.5 304.8L523.3 306.2L523.1 307.6L522.9 309L522.7 310.4L522.6 311.8L522.4 313.3L522.3 314.7L522.3 316.1L522.2 317.5L522.2 318.9L522.2 320.3L522.2 321.7L522.2 323.1L522.2 324.5L522.3 326L522.4 327.4L522.5 328.8L522.7 330.2L522.8 331.6L523 333L523.2 334.4L523.4 335.8L523.7 337.3L524 338.7L524.3 340.1L524.6 341.5L524.9 342.9L525.3 344.3L525.6 345.7L526 347.1L526.4 348.5L526.9 350L527.4 351.4L527.8 352.8L528.3 354.2L528.9 355.6L529.4 357L530 358.4L530.6 359.8L531.2 361.3L531.8 362.7L532.5 364.1L533.2 365.5L533.9 366.9L534.6 368.3L535.3 369.7L536.1 371.1L536.8 372.5L537.7 374L538.5 375.4L539.3 376.8L540.2 378.2L541.1 379.6L542 381L542.9 382.4L543.8 383.8L544.8 385.3L545.8 386.7L546.8 388.1L547.8 389.5L548.9 390.9L550 392.3L551 393.7L552.2 395.1L553.3 396.5L554.4 398L555.6 399.4L556.8 400.8L558 402.2L559.2 403.6L560.5 405L561.7 406.4L563 407.8L564.3 409.3L565.7 410.7L567 412.1L568.4 413.5L569.8 414.9L571.2 416.3L572.6 417.7L574 419.1L575.5 420.5L576.9 422L578.4 423.4L580 424.8L581.5 426.2L583 427.6L584.6 429L586.2 430.4L587.8 431.8L589.4 433.3L591.1 434.7L592.7 436.1L594.4 437.5L596.1 438.9L597.8 440.3L599.5 441.7L601.3 443.1L603.1 444.5L604.8 446L606.6 447.4L608.4 448.8L610.3 450.2L612.1 451.6L614 453L615.9 454.4L617.8 455.8L619.7 457.3L621.6 458.7L623.6 460.1L625.5 461.5L627.5 462.9L629.5 464.3L631.5 465.7L633.5 467.1L635.6 468.5L637.6 470L639.7 471.4L641.8 472.8L643.9 474.2L646 475.6L648.1 477L650.3 478.4L652.4 479.8L654.6 481.3L656.8 482.7" stroke="#808080" stroke-width="0.9" stroke-dasharray="0.9 2.1" fill="none"/>
<path d="M881.7 73.4L883.5 72.7L885.2 72L886.9 71.4L888.6 70.8L890.3 70.2L892 69.8L893.7 69.4L895.3 69L896.9 68.7L898.6 68.5L900.2 68.3L901.8 68.2L903.5 68.1L905.1 68.1L906.7 68.2L908.4 68.3L910 68.5L911.7 68.8L913.3 69.1L915 69.5L916.7 70L918.5 70.5L920.2 71L922 71.6L923.8 72.3L925.6 73L927.4 73.7L929.3 74.5L931.1 75.3L933 76.2L935 77.1L936.9 78.1L938.9 79L940.9 80L942.9 81.1L944.9 82.1L946.9 83.2L949 84.4L951.1 85.5L953.2 86.7L955.3 87.8L957.4 89L959.5 90.3L961.7 91.5L963.9 92.8L966 94L968.2 95.3L970.4 96.6L972.6 97.9L974.8 99.2L977 100.6L979.3 101.9L981.5 103.3L983.7 104.7L986 106L988.2 107.4L990.5 108.8L992.7 110.2L995 111.6L997.2 113L999.5 114.5" stroke="#808080" stroke-width="0.9" stroke-dasharray="0.9 2.1" fill="none"/>
<path d="M863.4 82.6L861.7 83.6L860 84.5L858.3 85.5L856.6 86.5L854.8 87.5L853.1 88.6L851.3 89.6L849.5 90.7L847.8 91.8L846 92.9L844.2 94L842.4 95.1L840.6 96.2L838.8 97.3L837 98.5L835.1 99.6L833.3 100.8L831.5 101.9L829.7 103.1L827.8 104.3L826 105.5L824.1 106.7L822.3 107.9L820.4 109.1L818.6 110.3L816.7 111.5L814.9 112.8L813 114L811.1 115.2L809.3 116.5L807.4 117.7L805.6 119L803.7 120.2L801.9 121.5L800 122.8L798.1 124L796.3 125.3L794.4 126.6L792.6 127.8L790.7 129.1L788.9 130.4L787 131.7L785.2 133L783.4 134.3L781.5 135.6L779.7 136.9L777.9 138.2L776 139.5L774.2 140.8L772.4 142.1L770.6 143.4L768.8 144.7L767 146L765.2 147.3L763.4 148.6L761.6 150L759.8 151.3L758 152.6L756.2 153.9L754.5 155.3L752.7 156.6L750.9 157.9L749.2 159.2L747.5 160.6L745.7 161.9L744 163.2L742.3 164.6L740.5 165.9L738.8 167.2L737.1 168.6L735.4 169.9L733.8 171.3L732.1 172.6L730.4 174L728.7 175.3L727.1 176.6L725.4 178L723.8 179.3L722.2 180.7L720.6 182L718.9 183.4L717.3 184.7L715.7 186.1L714.2 187.4L712.6 188.8L711 190.1L709.5 191.5L707.9 192.8L706.4 194.2L704.8 195.6L703.3 196.9L701.8 198.3L700.3 199.6L698.8 201L697.4 202.3L695.9 203.7L694.4 205.1L693 206.4L691.5 207.8L690.1 209.2L688.7 210.5L687.3 211.9L685.9 213.2L684.5 214.6L683.2 216L681.8 217.3L680.5 218.7L679.1 220.1L677.8 221.4L676.5 222.8L675.2 224.2L673.9 225.5L672.6 226.9L671.4 228.3L670.1 229.6L668.9 231L667.6 232.4L666.4 233.7L665.2 235.1L664 236.5L662.9 237.9L661.7 239.2L660.5 240.6L659.4 242L658.3 243.3L657.2 244.7L656.1 246.1L655 247.5L653.9 248.8L652.8 250.2L651.8 251.6L650.8 252.9L649.7 254.3L648.7 255.7L647.7 257.1L646.8 258.4L645.8 259.8L644.8 261.2L643.9 262.6L643 263.9L642.1 265.3L641.2 266.7L640.3 268.1L639.4 269.4L638.6 270.8L637.7 272.2L636.9 273.6L636.1 274.9L635.3 276.3L634.5 277.7L633.8 279.1L633 280.4L632.3 281.8L631.5 283.2L630.8 284.6L630.1 285.9L629.5 287.3L628.8 288.7L628.1 290.1L627.5 291.5L626.9 292.8L626.3 294.2L625.7 295.6L625.1 297L624.6 298.3L624 299.7L623.5 301.1L623 302.5L622.5 303.9L622 305.2L621.5 306.6L621.1 308L620.6 309.4L620.2 310.7L619.8 312.1L619.4 313.5L619 314.9L618.7 316.3L618.3 317.6L618 319L617.7 320.4L617.4 321.8L617.1 323.1L616.8 324.5L616.6 325.9L616.3 327.3L616.1 328.7L615.9 330L615.7 331.4L615.6 332.8L615.4 334.2L615.2 335.5L615.1 336.9L615 338.3L614.9 339.7L614.8 341.1L614.8 342.4L614.7 343.8L614.7 345.2L614.7 346.6L614.7 347.9L614.7 349.3L614.7 350.7L614.7 352.1L614.8 353.5L614.9 354.8L615 356.2L615.1 357.6L615.2 359L615.3 360.3L615.5 361.7L615.7 363.1L615.8 364.5L616 365.8L616.3 367.2L616.5 368.6L616.7 370L617 371.3L617.3 372.7L617.6 374.1L617.9 375.5L618.2 376.8L618.5 378.2L618.9 379.6L619.3 381L619.6 382.3L620 383.7L620.5 385.1L620.9 386.5L621.3 387.8L621.8 389.2L622.3 390.6L622.8 392L623.3 393.3L623.8 394.7L624.3 396.1L624.9 397.4L625.4 398.8L626 400.2L626.6 401.6L627.2 402.9L627.8 404.3L628.5 405.7L629.1 407L629.8 408.4L630.5 409.8L631.2 411.1L631.9 412.5L632.6 413.9L633.3 415.2L634.1 416.6L634.9 418L635.6 419.3L636.4 420.7L637.2 422.1L638.1 423.4L638.9 424.8L639.8 426.2L640.6 427.5L641.5 428.9L642.4 430.3L643.3 431.6L644.2 433L645.1 434.3L646.1 435.7L647 437.1L648 438.4L649 439.8L650 441.1L651 442.5L652 443.9L653 445.2L654.1 446.6L655.1 447.9L656.2 449.3L657.3 450.6L658.4 452L659.5 453.3L660.6 454.7L661.7 456L662.9 457.4L664 458.7L665.2 460.1L666.4 461.4L667.6 462.8L668.8 464.1L670 465.5L671.2 466.8L672.4 468.2L673.7 469.5L674.9 470.8L676.2 472.2L677.4 473.5L678.7 474.9L680 476.2L681.3 477.5L682.6 478.9L684 480.2L685.3 481.5L686.6 482.9" stroke="#808080" stroke-width="0.9" stroke-dasharray="0.9 2.1" fill="none"/>
<path d="M802.2 78.3L805.4 77.3L808.6 76.2L811.7 75.3L814.8 74.3L817.7 73.4L820.7 72.5L823.5 71.7L826.3 70.9L829 70.2L831.6 69.5L834.1 68.9L836.5 68.3L838.9 67.8L841.2 67.3L843.3 66.9L845.4 66.6L847.4 66.3L849.3 66.1L851.1 65.9L852.8 65.8L854.5 65.8L856.1 65.9L857.5 66L858.9 66.2L860.3 66.5L861.5 66.8L862.7 67.2L863.9 67.6L865 68.1L866 68.7L867 69.3L868 69.9L868.9 70.7L869.7 71.4L870.6 72.2L871.4 73.1L872.2 74L873 74.9L873.7 75.9L874.4 76.9L875.2 77.9L875.8 79L876.5 80.1L877.2 81.2L877.9 82.3L878.5 83.5L879.2 84.7L879.8 85.9L880.4 87.1L881.1 88.3L881.7 89.6L882.3 90.9L882.9 92.2L883.5 93.5L884.1 94.8L884.7 96.1L885.3 97.5L885.9 98.8L886.5 100.2L887.1 101.6L887.7 103L888.3 104.4L888.9 105.8L889.5 107.2L890.1 108.6L890.7 110L891.3 111.5L891.9 112.9L892.5 114.3L893.1 115.8L893.7 117.3L894.3 118.7L894.9 120.2L895.5 121.7L896.1 123.1L896.7 124.6L897.3 126.1L897.9 127.6L898.5 129.1L899.1 130.6L899.7 132.1L900.3 133.6L900.8 135.1L901.4 136.6L902 138.1L902.6 139.6L903.2 141.2L903.8 142.7L904.4 144.2L905 145.7L905.6 147.3L906.2 148.8L906.8 150.3L907.4 151.9L908 153.4L908.6 154.9L909.2 156.5L909.8 158L910.4 159.6L911 161.1L911.6 162.7L912.2 164.2L912.7 165.8L913.3 167.3L913.9 168.9L914.5 170.4L915.1 172L915.7 173.5L916.3 175.1L916.9 176.7L917.5 178.2L918 179.8L918.6 181.4L919.2 182.9L919.8 184.5L920.4 186L920.9 187.6L921.5 189.2L922.1 190.8L922.7 192.3L923.2 193.9L923.8 195.5L924.4 197L925 198.6L925.5 200.2L926.1 201.8L926.7 203.3L927.2 204.9L927.8 206.5L928.3 208.1L928.9 209.6L929.4 211.2L930 212.8L930.6 214.4L931.1 216L931.7 217.5L932.2 219.1L932.7 220.7L933.3 222.3L933.8 223.9L934.4 225.5L934.9 227L935.4 228.6L936 230.2L936.5 231.8L937 233.4L937.5 235L938 236.5L938.6 238.1L939.1 239.7L939.6 241.3L940.1 242.9L940.6 244.5L941.1 246.1L941.6 247.7L942.1 249.2L942.6 250.8L943.1 252.4L943.6 254L944.1 255.6L944.6 257.2L945 258.8L945.5 260.4L946 262L946.5 263.5L946.9 265.1L947.4 266.7L947.9 268.3L948.3 269.9L948.8 271.5L949.2 273.1L949.7 274.7L950.1 276.3L950.6 277.9L951 279.5L951.4 281.1L951.9 282.7L952.3 284.2L952.7 285.8L953.1 287.4L953.5 289L953.9 290.6L954.4 292.2L954.8 293.8L955.2 295.4L955.6 297L956 298.6L956.3 300.2L956.7 301.8L957.1 303.4L957.5 305L957.9 306.6L958.2 308.1L958.6 309.7L958.9 311.3L959.3 312.9L959.7 314.5L960 316.1L960.4 317.7L960.7 319.3L961 320.9L961.4 322.5L961.7 324.1L962 325.7L962.3 327.3L962.6 328.9L962.9 330.5L963.3 332.1L963.6 333.7L963.8 335.2L964.1 336.8L964.4 338.4L964.7 340L965 341.6L965.3 343.2L965.5 344.8L965.8 346.4L966 348L966.3 349.6L966.6 351.2L966.8 352.8L967 354.4L967.3 356L967.5 357.6L967.7 359.1L968 360.7L968.2 362.3L968.4 363.9L968.6 365.5L968.8 367.1L969 368.7L969.2 370.3L969.4 371.9L969.6 373.5L969.7 375.1L969.9 376.7L970.1 378.2L970.2 379.8L970.4 381.4L970.5 383L970.7 384.6L970.8 386.2L971 387.8L971.1 389.4L971.2 391L971.4 392.6L971.5 394.1L971.6 395.7L971.7 397.3L971.8 398.9L971.9 400.5L972 402.1L972.1 403.7L972.2 405.3L972.3 406.8L972.3 408.4L972.4 410L972.5 411.6L972.5 413.2L972.6 414.8L972.6 416.3L972.7 417.9L972.7 419.5L972.7 421.1L972.8 422.7L972.8 424.3L972.8 425.8L972.8 427.4L972.8 429L972.8 430.6L972.8 432.1L972.8 433.7L972.8 435.3L972.8 436.9L972.8 438.5L972.8 440L972.7 441.6L972.7 443.2L972.7 444.7L972.6 446.3L972.6 447.9L972.5 449.5L972.5 451L972.4 452.6L972.3 454.2L972.3 455.7L972.2 457.3L972.1 458.9L972 460.4L971.9 462L971.8 463.6L971.7 465.1L971.6 466.7L971.5 468.2L971.4 469.8L971.3 471.3L971.2 472.9L971 474.5L970.9 476L970.8 477.6" stroke="#808080" stroke-width="0.9" stroke-dasharray="0.9 2.1" fill="none"/>
<path d="M785.7 83.8L782.7 84.8L779.6 85.9L776.5 86.9L773.4 88L770.3 89.1L767.2 90.2L764 91.3L760.8 92.4L757.6 93.6L754.4 94.7L751.2 95.9L747.9 97L744.7 98.2L741.4 99.4L738.2 100.6L734.9 101.8L731.6 103L728.3 104.2L725 105.4L721.7 106.6L718.4 107.8L715 109.1L711.7 110.3L708.4 111.6L705.1 112.8L701.7 114.1L698.4 115.3L695.1 116.6L691.7 117.8L688.4 119.1L685.1 120.4L681.8 121.7L678.5 122.9L675.1 124.2L671.8 125.5L668.5 126.8L665.2 128.1L661.9 129.4L658.6 130.7L655.4 132L652.1 133.3L648.8 134.6L645.5 135.9L642.3 137.2L639 138.5L635.8 139.9L632.6 141.2L629.4 142.5L626.1 143.8L622.9 145.1L619.8 146.5L616.6 147.8L613.4 149.1L610.2 150.4L607.1 151.8L604 153.1L600.9 154.4L597.7 155.8L594.6 157.1L591.6 158.4L588.5 159.8L585.4 161.1L582.4 162.5L579.4 163.8L576.4 165.2L573.4 166.5L570.4 167.8L567.4 169.2L564.5 170.5L561.5 171.9L558.6 173.2L555.7 174.6L552.8 175.9L550 177.3L547.1 178.6L544.3 180L541.5 181.4L538.7 182.7L535.9 184.1L533.1 185.4L530.4 186.8L527.6 188.1L524.9 189.5L522.2 190.9L519.6 192.2L516.9 193.6L514.3 194.9L511.7 196.3L509.1 197.7L506.5 199L504 200.4L501.4 201.8L498.9 203.1L496.4 204.5L494 205.9L491.5 207.2L489.1 208.6L486.7 210L484.3 211.3L481.9 212.7L479.6 214.1L477.3 215.4L475 216.8L472.7 218.2L470.4 219.5L468.2 220.9L466 222.3L463.8 223.7L461.7 225L459.5 226.4L457.4 227.8L455.3 229.2L453.3 230.5L451.2 231.9L449.2 233.3L447.2 234.6L445.3 236L443.3 237.4L441.4 238.8L439.5 240.1L437.6 241.5L435.8 242.9L434 244.3L432.2 245.6L430.4 247L428.7 248.4L426.9 249.8L425.3 251.2L423.6 252.5L421.9 253.9L420.3 255.3L418.7 256.7L417.2 258L415.6 259.4L414.1 260.8L412.7 262.2L411.2 263.6L409.8 264.9L408.4 266.3L407 267.7L405.6 269.1L404.3 270.4L403 271.8L401.8 273.2L400.5 274.6L399.3 276L398.1 277.3L397 278.7L395.8 280.1L394.7 281.5L393.6 282.9L392.6 284.2L391.6 285.6L390.6 287L389.6 288.4L388.7 289.8L387.8 291.2L386.9 292.5L386 293.9L385.2 295.3L384.4 296.7L383.6 298.1L382.9 299.4L382.2 300.8L381.5 302.2L380.9 303.6L380.2 305L379.6 306.3L379.1 307.7L378.5 309.1L378 310.5L377.5 311.9L377.1 313.3L376.7 314.6L376.3 316L375.9 317.4L375.6 318.8L375.3 320.2L375 321.5L374.7 322.9L374.5 324.3L374.3 325.7L374.1 327.1L374 328.4L373.9 329.8L373.8 331.2L373.8 332.6L373.7 334L373.8 335.4L373.8 336.7L373.9 338.1L374 339.5L374.1 340.9L374.2 342.3L374.4 343.6L374.6 345L374.9 346.4L375.1 347.8L375.4 349.2L375.8 350.6L376.1 351.9L376.5 353.3L376.9 354.7L377.4 356.1L377.8 357.5L378.3 358.8L378.8 360.2L379.4 361.6L380 363L380.6 364.4L381.2 365.7L381.9 367.1L382.6 368.5L383.3 369.9L384.1 371.3L384.9 372.6L385.7 374L386.5 375.4L387.4 376.8L388.3 378.1L389.2 379.5L390.2 380.9L391.1 382.3L392.1 383.7L393.2 385L394.2 386.4L395.3 387.8L396.4 389.2L397.6 390.5L398.7 391.9L399.9 393.3L401.2 394.7L402.4 396.1L403.7 397.4L405 398.8L406.3 400.2L407.7 401.6L409.1 402.9L410.5 404.3L411.9 405.7L413.4 407.1L414.9 408.4L416.4 409.8L417.9 411.2L419.5 412.5L421.1 413.9L422.7 415.3L424.4 416.7L426 418L427.7 419.4L429.4 420.8L431.2 422.1L433 423.5L434.8 424.9L436.6 426.3L438.4 427.6L440.3 429L442.2 430.4L444.1 431.7L446 433.1L448 434.5L450 435.8L452 437.2L454 438.6L456.1 439.9L458.2 441.3L460.3 442.7L462.4 444L464.5 445.4L466.7 446.7L468.9 448.1L471.1 449.5L473.3 450.8L475.6 452.2L477.9 453.5L480.2 454.9L482.5 456.3L484.8 457.6L487.2 459L489.6 460.3L492 461.7L494.4 463L496.8 464.4L499.3 465.7L501.8 467.1L504.3 468.4L506.8 469.8L509.3 471.1L511.9 472.5L514.5 473.8L517 475.2L519.7 476.5L522.3 477.9L524.9 479.2L527.6 480.6L530.3 481.9L532.9 483.2" stroke="#808080" stroke-width="0.9" stroke-dasharray="0.9 2.1" fill="none"/>
<path d="M708.7 100.3L710 100.4L711.3 100.6L712.5 100.7L713.6 101L714.6 101.2L715.5 101.5L716.3 101.8L717.1 102.1L717.8 102.5L718.5 102.9L719 103.4L719.5 103.8L720 104.3L720.3 104.9L720.6 105.4L720.9 106L721.1 106.6L721.2 107.3L721.3 107.9L721.3 108.6L721.3 109.3L721.2 110.1L721.1 110.9L720.9 111.6L720.8 112.5L720.5 113.3L720.2 114.1L719.9 115L719.6 115.9L719.2 116.8L718.8 117.7L718.4 118.7L717.9 119.7L717.4 120.6L716.9 121.6L716.4 122.6L715.8 123.7L715.3 124.7L714.7 125.8L714.1 126.9L713.4 127.9L712.8 129L712.1 130.1L711.4 131.3L710.8 132.4L710.1 133.6L709.4 134.7L708.6 135.9L707.9 137.1L707.2 138.3L706.4 139.5L705.7 140.7L704.9 141.9L704.2 143.1L703.4 144.3L702.7 145.6L701.9 146.8L701.1 148.1L700.4 149.4L699.6 150.6L698.8 151.9L698 153.2L697.3 154.5L696.5 155.8L695.7 157.1L695 158.4L694.2 159.7L693.5 161.1L692.7 162.4L691.9 163.7L691.2 165.1L690.5 166.4L689.7 167.8L689 169.1L688.3 170.5L687.5 171.8L686.8 173.2L686.1 174.6L685.4 176L684.7 177.3L684 178.7L683.4 180.1L682.7 181.5L682 182.9L681.4 184.3L680.7 185.7L680.1 187.1L679.5 188.5L678.9 189.9L678.3 191.3L677.7 192.8L677.1 194.2L676.5 195.6L675.9 197L675.4 198.5L674.8 199.9L674.3 201.3L673.8 202.8L673.3 204.2L672.8 205.6L672.3 207.1L671.8 208.5L671.4 210L670.9 211.4L670.5 212.9L670.1 214.3L669.7 215.8L669.3 217.2L668.9 218.7L668.5 220.1L668.1 221.6L667.8 223.1L667.5 224.5L667.1 226L666.8 227.5L666.5 228.9L666.3 230.4L666 231.9L665.7 233.3L665.5 234.8L665.3 236.3L665.1 237.8L664.9 239.2L664.7 240.7L664.5 242.2L664.4 243.7L664.2 245.2L664.1 246.6L664 248.1L663.9 249.6L663.8 251.1L663.8 252.6L663.7 254.1L663.7 255.6L663.6 257.1L663.6 258.5L663.6 260L663.7 261.5L663.7 263L663.8 264.5L663.8 266L663.9 267.5L664 269L664.1 270.5L664.2 272L664.4 273.5L664.6 275L664.7 276.5L664.9 278L665.1 279.5L665.3 281L665.6 282.5L665.8 284L666.1 285.5L666.4 287L666.7 288.5L667 290L667.3 291.5L667.6 293L668 294.5L668.4 296L668.7 297.5L669.1 299L669.6 300.5L670 302L670.4 303.5L670.9 305L671.4 306.5L671.9 308L672.4 309.5L672.9 311.1L673.4 312.6L674 314.1L674.5 315.6L675.1 317.1L675.7 318.6L676.3 320.1L676.9 321.6L677.6 323.1L678.2 324.6L678.9 326.1L679.6 327.6L680.3 329.1L681 330.6L681.7 332.1L682.5 333.6L683.2 335.1L684 336.7L684.8 338.2L685.6 339.7L686.4 341.2L687.2 342.7L688 344.2L688.9 345.7L689.8 347.2L690.6 348.7L691.5 350.2L692.4 351.7L693.4 353.2L694.3 354.7L695.3 356.2L696.2 357.7L697.2 359.2L698.2 360.7L699.2 362.2L700.2 363.7L701.2 365.2L702.3 366.7L703.3 368.2L704.4 369.7L705.4 371.2L706.5 372.7L707.6 374.2L708.8 375.7L709.9 377.2L711 378.7L712.2 380.2L713.3 381.6L714.5 383.1L715.7 384.6L716.9 386.1L718.1 387.6L719.3 389.1L720.6 390.6L721.8 392.1L723 393.5L724.3 395L725.6 396.5L726.9 398L728.2 399.5L729.5 401L730.8 402.4L732.1 403.9L733.5 405.4L734.8 406.9L736.2 408.3L737.5 409.8L738.9 411.3L740.3 412.7L741.7 414.2L743.1 415.7L744.5 417.1L745.9 418.6L747.4 420.1L748.8 421.5L750.3 423L751.7 424.4L753.2 425.9L754.7 427.3L756.1 428.8L757.6 430.2L759.1 431.7L760.6 433.1L762.1 434.6L763.7 436L765.2 437.5L766.7 438.9L768.3 440.3L769.8 441.8L771.4 443.2L772.9 444.6L774.5 446L776 447.5L777.6 448.9L779.2 450.3L780.8 451.7L782.4 453.1L784 454.5L785.6 455.9L787.2 457.3L788.8 458.7L790.4 460.1L792.1 461.5L793.7 462.9L795.3 464.3L796.9 465.7L798.6 467L800.2 468.4L801.9 469.8L803.5 471.1L805.2 472.5L806.8 473.8L808.5 475.2L810.1 476.5L811.8 477.9L813.4 479.2L815.1 480.5L816.8 481.8L818.4 483.2" stroke="#808080" stroke-width="0.9" stroke-dasharray="0.9 2.1" fill="none"/>
<path d="M699.6 100.3L697.9 100.4L696.2 100.5L694.4 100.7L692.6 100.8L690.6 101L688.6 101.3L686.6 101.5L684.4 101.8L682.2 102.1L680 102.4L677.6 102.7L675.2 103.1L672.8 103.5L670.2 103.9L667.7 104.3" stroke="#808080" stroke-width="0.9" stroke-dasharray="0.9 2.1" fill="none"/>
<path d="M744.8 80.1L749.7 78.5L754.7 76.9L759.6 75.3L764.6 73.7L769.5 72.1L774.5 70.5L779.4 69L784.4 67.4L789.3 65.8L794.3 64.2L799.2 62.7L804.2 61.1L809.1 59.5L814 58L818.9 56.5L823.7 54.9L828.6 53.4L833.4 51.9L838.1 50.4L842.8 49L847.5 47.5L852 46.1L856.5 44.7L860.8 43.4L865 42.1L869 41L872.8 39.9L876.3 38.9L879.4 38.1L882.2 37.5L884.4 37.1L886.3 37L887.7 37.1L888.7 37.5L889.4 38.2L889.9 39L890.2 40L890.5 41.1L890.6 42.3L890.7 43.6L890.8 44.9L890.8 46.3L890.8 47.7L890.8 49.1L890.8 50.6L890.7 52.1L890.7 53.6L890.6 55.1L890.6 56.6L890.5 58.2L890.5 59.7L890.4 61.3L890.4 62.8L890.3 64.4L890.2 66L890.2 67.6L890.1 69.1L890.1 70.7L890 72.3L889.9 73.9L889.9 75.5L889.8 77.1L889.8 78.7L889.7 80.3L889.6 81.9L889.6 83.5L889.5 85.1L889.5 86.7L889.4 88.3L889.4 89.9L889.3 91.5L889.2 93.1L889.2 94.8L889.1 96.4L889.1 98L889 99.6L889 101.2L888.9 102.8L888.9 104.4L888.8 106L888.8 107.7L888.7 109.3L888.7 110.9L888.7 112.5L888.6 114.1L888.6 115.8L888.5 117.4L888.5 119L888.5 120.6L888.4 122.2L888.4 123.8L888.3 125.5L888.3 127.1L888.3 128.7L888.2 130.3L888.2 131.9L888.2 133.6L888.1 135.2L888.1 136.8L888.1 138.4L888.1 140.1L888 141.7L888 143.3L888 144.9L888 146.5L887.9 148.2L887.9 149.8L887.9 151.4L887.9 153L887.9 154.7L887.9 156.3L887.8 157.9L887.8 159.5L887.8 161.2L887.8 162.8L887.8 164.4L887.8 166L887.8 167.7L887.8 169.3L887.8 170.9L887.8 172.5L887.7 174.1L887.7 175.8L887.7 177.4L887.7 179L887.7 180.6L887.7 182.3L887.7 183.9L887.7 185.5L887.8 187.1L887.8 188.8L887.8 190.4L887.8 192L887.8 193.6L887.8 195.3L887.8 196.9L887.8 198.5L887.8 200.1L887.8 201.8L887.9 203.4L887.9 205L887.9 206.7L887.9 208.3L887.9 209.9L887.9 211.5L888 213.2L888 214.8L888 216.4L888 218L888.1 219.7L888.1 221.3L888.1 222.9L888.2 224.5L888.2 226.2L888.2 227.8L888.2 229.4L888.3 231L888.3 232.7L888.3 234.3L888.4 235.9L888.4 237.5L888.5 239.2L888.5 240.8L888.5 242.4L888.6 244L888.6 245.7L888.7 247.3L888.7 248.9L888.8 250.6L888.8 252.2L888.9 253.8L888.9 255.4L889 257.1L889 258.7L889.1 260.3L889.1 261.9L889.2 263.6L889.2 265.2L889.3 266.8L889.3 268.4L889.4 270.1L889.4 271.7L889.5 273.3L889.6 275L889.6 276.6L889.7 278.2L889.7 279.8L889.8 281.5L889.9 283.1L889.9 284.7L890 286.3L890.1 288L890.1 289.6L890.2 291.2L890.3 292.8L890.4 294.5L890.4 296.1L890.5 297.7L890.6 299.4L890.7 301L890.7 302.6L890.8 304.2L890.9 305.9L891 307.5L891 309.1L891.1 310.7L891.2 312.4L891.3 314L891.4 315.6L891.5 317.2L891.5 318.9L891.6 320.5L891.7 322.1L891.8 323.8L891.9 325.4L892 327L892.1 328.6L892.1 330.3L892.2 331.9L892.3 333.5L892.4 335.1L892.5 336.8L892.6 338.4L892.7 340L892.8 341.6L892.9 343.3L893 344.9L893.1 346.5L893.2 348.2L893.3 349.8L893.4 351.4L893.5 353L893.6 354.7L893.7 356.3L893.8 357.9L893.9 359.5L894 361.2L894.1 362.8L894.2 364.4L894.3 366L894.4 367.7L894.5 369.3L894.6 370.9L894.7 372.6L894.8 374.2L894.9 375.8L895.1 377.4L895.2 379.1L895.3 380.7L895.4 382.3L895.5 383.9L895.6 385.6L895.7 387.2L895.8 388.8L895.9 390.4L896.1 392.1L896.2 393.7L896.3 395.3L896.4 397L896.5 398.6L896.6 400.2L896.7 401.8L896.9 403.5L897 405.1L897.1 406.7L897.2 408.3L897.3 410L897.4 411.6L897.6 413.2L897.7 414.8L897.8 416.5L897.9 418.1L898 419.7L898.2 421.3L898.3 423L898.4 424.6L898.5 426.2L898.6 427.8L898.8 429.5L898.9 431.1L899 432.7L899.1 434.4L899.3 436L899.4 437.6L899.5 439.2L899.6 440.9L899.7 442.5L899.9 444.1L900 445.7L900.1 447.4L900.2 449L900.4 450.6L900.5 452.2L900.6 453.9L900.7 455.5L900.9 457.1L901 458.7L901.1 460.4L901.2 462L901.4 463.6" stroke="#808080" stroke-width="0.9" stroke-dasharray="0.9 2.1" fill="none"/>
<path d="M713 90.5L708.8 91.9L704.6 93.3L700.4 94.7L696.2 96.1L692 97.5L687.8 98.9L683.7 100.3L679.5 101.7L675.4 103.1L671.2 104.5L667.1 105.9L663 107.3L658.9 108.7L654.8 110.1L650.8 111.5L646.7 112.9L642.7 114.3L638.6 115.7L634.6 117.1L630.6 118.5L626.7 119.9L622.7 121.3L618.7 122.7L614.8 124.1L610.9 125.5L607 126.9L603.1 128.3L599.2 129.7L595.3 131.1L591.5 132.5L587.7 133.9L583.9 135.3L580.1 136.7L576.3 138.1L572.6 139.6L568.8 141L565.1 142.4L561.4 143.8L557.7 145.2L554.1 146.6L550.5 148L546.8 149.4L543.2 150.8L539.7 152.2L536.1 153.6L532.6 155L529 156.4L525.5 157.8L522.1 159.2L518.6 160.7L515.2 162.1L511.8 163.5L508.4 164.9L505 166.3" stroke="#808080" stroke-width="0.9" stroke-dasharray="0.9 2.1" fill="none"/>
<path d="M611 267L611.8 265.5L612.6 264.1L613.4 262.6L614.3 261.1L615.2 259.7L616 258.2L616.9 256.7L617.9 255.3L618.8 253.8L619.8 252.3L620.7 250.9L621.7 249.4L622.7 247.9L623.7 246.5L624.8 245L625.8 243.5L626.9 242.1L628 240.6L629.1 239.1L630.2 237.7L631.4 236.2L632.5 234.7L633.7 233.3L634.9 231.8L636.1 230.3L637.3 228.9L638.6 227.4L639.8 225.9L641.1 224.5L642.4 223L643.7 221.5L645 220.1L646.4 218.6L647.7 217.1L649.1 215.7L650.5 214.2L651.9 212.7L653.3 211.3L654.7 209.8L656.2 208.3L657.6 206.9L659.1 205.4L660.6 203.9L662.1 202.5L663.6 201L665.2 199.5L666.7 198.1L668.3 196.6L669.8 195.1L671.4 193.7L673 192.2L674.7 190.7L676.3 189.3L677.9 187.8L679.6 186.4L681.3 184.9L683 183.4L684.7 182L686.4 180.5L688.1 179L689.9 177.6L691.6 176.1L693.4 174.6L695.2 173.2L697 171.7L698.8 170.3L700.6 168.8L702.4 167.3L704.3 165.9L706.1 164.4L708 162.9L709.8 161.5L711.7 160L713.6 158.5L715.6 157.1L717.5 155.6L719.4 154.2L721.4 152.7L723.3 151.2L725.3 149.8L727.3 148.3L729.2 146.9L731.2 145.4L733.2 143.9L735.3 142.5L737.3 141L739.3 139.6L741.4 138.1L743.4 136.6L745.5 135.2L747.6 133.7L749.7 132.3L751.8 130.8L753.9 129.4L756 127.9L758.1 126.4L760.2 125L762.3 123.5L764.5 122.1L766.6 120.6L768.8 119.2L771 117.7L773.1 116.3L775.3 114.8L777.5 113.4L779.7 111.9L781.9 110.5L784.1 109L786.3 107.6L788.5 106.1L790.8 104.7L793 103.2L795.2 101.8L797.5 100.3L799.7 98.9L802 97.4L804.2 96L806.5 94.6L808.7 93.1L811 91.7L813.3 90.2L815.5 88.8L817.8 87.4L820.1 85.9L822.4 84.5L824.6 83.1L826.9 81.7L829.2 80.2L831.5 78.8L833.8 77.4L836.1 76L838.3 74.6L840.6 73.2L842.9 71.8L845.2 70.4L847.5 69L849.7 67.6L852 66.2L854.2 64.9L856.5 63.5L858.7 62.1L861 60.8L863.2 59.5L865.4 58.1L867.6 56.8L869.8 55.5L871.9 54.2L874.1 53L876.2 51.8L878.3 50.6L880.3 49.4L882.3 48.2L884.3 47.2L886.3 46.1L888.1 45.1L890 44.2L891.8 43.4L893.5 42.7L895.1 42L896.7 41.5L898.3 41.2L899.8 41L901.2 40.9L902.7 41L904.2 41.3L905.7 41.7L907.2 42.2L908.8 42.9L910.4 43.6L912 44.5" stroke="#ffa500" stroke-width="1.39" stroke-dasharray="1.39 2.29" fill="none"/>
<path d="M614 266L614.6 264.5L615.3 263.1L616 261.6L616.6 260.1L617.3 258.7L618.1 257.2L618.8 255.7L619.6 254.3L620.3 252.8L621.1 251.3L621.9 249.9L622.7 248.4L623.6 246.9L624.4 245.5L625.3 244L626.2 242.5L627.1 241.1L628.1 239.6L629 238.1L630 236.7L630.9 235.2L631.9 233.7L632.9 232.3L634 230.8L635 229.3L636.1 227.9L637.1 226.4L638.2 224.9L639.4 223.5L640.5 222L641.6 220.5L642.8 219.1L644 217.6L645.1 216.1L646.3 214.7L647.6 213.2L648.8 211.7L650.1 210.3L651.3 208.8L652.6 207.4L653.9 205.9L655.2 204.4L656.6 203L657.9 201.5L659.3 200L660.6 198.6L662 197.1L663.4 195.6L664.8 194.2L666.3 192.7L667.7 191.2L669.2 189.8L670.7 188.3L672.2 186.8L673.7 185.4L675.2 183.9L676.7 182.4L678.3 181L679.8 179.5L681.4 178L683 176.6L684.6 175.1L686.2 173.6L687.8 172.2L689.5 170.7L691.1 169.2L692.8 167.8L694.5 166.3L696.2 164.8L697.9 163.4L699.6 161.9L701.3 160.5L703.1 159L704.8 157.5L706.6 156.1L708.4 154.6L710.2 153.1L712 151.7L713.8 150.2L715.6 148.7L717.4 147.3L719.3 145.8L721.2 144.3L723 142.9L724.9 141.4L726.8 139.9L728.7 138.5L730.6 137L732.5 135.5L734.5 134.1L736.4 132.6L738.4 131.2L740.3 129.7L742.3 128.2L744.3 126.8L746.3 125.3L748.3 123.8L750.3 122.4L752.3 120.9L754.4 119.4L756.4 118L758.5 116.5L760.5 115.1L762.6 113.6L764.7 112.1L766.7 110.7L768.8 109.2L770.9 107.7L773 106.3L775.1 104.8L777.3 103.4L779.4 101.9L781.5 100.4L783.7 99L785.8 97.5L788 96.1L790.1 94.6L792.3 93.1L794.5 91.7L796.7 90.2L798.9 88.8L801 87.3L803.2 85.9L805.4 84.4L807.7 82.9L809.9 81.5L812.1 80L814.3 78.6L816.5 77.1L818.8 75.7L821 74.2L823.2 72.8L825.5 71.3L827.7 69.9L830 68.4L832.2 67L834.5 65.5L836.7 64.1L838.9 62.6L841.2 61.2L843.4 59.8L845.7 58.3L847.9 56.9L850.2 55.5L852.4 54.1L854.6 52.6L856.9 51.2L859.1 49.8L861.3 48.4L863.4 47.1L865.6 45.7L867.7 44.3L869.8 43L871.8 41.7L873.8 40.4L875.7 39.2L877.4 38L879 36.9L880.3 35.9L881.2 35.1L881.6 34.5L881.3 34.1M922.9 34L922.2 34.3" stroke="#ffa500" stroke-width="1.39" stroke-dasharray="1.39 2.29" fill="none"/>
<path d="M626 266L627.3 264.8L628.7 263.5L630 262.3L631.4 261L632.8 259.8L634.2 258.6L635.6 257.3L637 256.1L638.5 254.9L639.9 253.6L641.4 252.4L642.8 251.2L644.3 249.9L645.8 248.7L647.3 247.5L648.8 246.3L650.3 245L651.8 243.8L653.3 242.6L654.9 241.4L656.4 240.2L658 239L659.6 237.8L661.1 236.5L662.7 235.3L664.3 234.1L665.9 232.9L667.6 231.7L669.2 230.5L670.8 229.3L672.4 228.1L674.1 226.9L675.8 225.7L677.4 224.5L679.1 223.4L680.8 222.2L682.5 221L684.1 219.8L685.8 218.6L687.6 217.5L689.3 216.3L691 215.1L692.7 213.9L694.4 212.8L696.2 211.6L697.9 210.5L699.7 209.3L701.4 208.1L703.2 207L705 205.8L706.7 204.7L708.5 203.6L710.3 202.4L712.1 201.3L713.9 200.2L715.7 199L717.5 197.9L719.3 196.8L721.1 195.7L722.9 194.6L724.7 193.4L726.5 192.3L728.3 191.2L730.2 190.1L732 189.1L733.8 188L735.6 186.9L737.5 185.8L739.3 184.7L741.1 183.7L743 182.6L744.8 181.5L746.6 180.5L748.5 179.4L750.3 178.4L752.2 177.4L754 176.3L755.8 175.3L757.7 174.3L759.5 173.3L761.4 172.3L763.2 171.2L765 170.3L766.9 169.3L768.7 168.3L770.5 167.3L772.4 166.3L774.2 165.4L776 164.4L777.9 163.5L779.7 162.5L781.5 161.6L783.3 160.7L785.1 159.8L787 158.9L788.8 158L790.6 157.1L792.4 156.2L794.2 155.3L796 154.4L797.8 153.6L799.5 152.7L801.3 151.9L803.1 151.1L804.9 150.3L806.6 149.5L808.4 148.7L810.1 147.9L811.9 147.1L813.6 146.4L815.4 145.6L817.1 144.9L818.8 144.1L820.5 143.4L822.3 142.7L824 142L825.7 141.4L827.4 140.7L829 140L830.7 139.4L832.4 138.8L834.1 138.2L835.7 137.6L837.4 137L839 136.4L840.7 135.9L842.3 135.4L843.9 134.8L845.5 134.3L847.1 133.8L848.7 133.4L850.3 132.9L851.9 132.5L853.5 132L855.1 131.6L856.6 131.3L858.2 130.9L859.8 130.5L861.3 130.2L862.9 129.9L864.4 129.6L865.9 129.3L867.4 129L869 128.8L870.5 128.6L872 128.3L873.5 128.2L875 128L876.5 127.8L878 127.7L879.5 127.6L880.9 127.5L882.4 127.4L883.9 127.4L885.4 127.3L886.8 127.3L888.3 127.3L889.8 127.3L891.2 127.4L892.7 127.4L894.1 127.5L895.6 127.6L897.1 127.7L898.5 127.9L900 128L901.4 128.2L902.9 128.4L904.3 128.6L905.8 128.8L907.2 129.1L908.7 129.4L910.2 129.7" stroke="#ffa500" stroke-width="1.39" stroke-dasharray="1.39 2.29" fill="none"/>
<path d="M612 270L612.9 268.6L613.8 267.1L614.7 265.7L615.6 264.2L616.5 262.8L617.4 261.3L618.4 259.9L619.4 258.4L620.3 257L621.4 255.5L622.4 254.1L623.4 252.6L624.5 251.2L625.6 249.7L626.7 248.3L627.8 246.8L628.9 245.4L630 243.9L631.2 242.5L632.4 241L633.6 239.6L634.8 238.1L636 236.7L637.2 235.2L638.5 233.8L639.7 232.3L641 230.9L642.3 229.4L643.6 228L645 226.5L646.3 225.1L647.7 223.6L649.1 222.2L650.5 220.8L651.9 219.3L653.3 217.9L654.7 216.4L656.2 215L657.6 213.5L659.1 212.1L660.6 210.6L662.1 209.2L663.7 207.7L665.2 206.3L666.7 204.9L668.3 203.4L669.9 202L671.5 200.5L673.1 199.1L674.7 197.6L676.3 196.2L678 194.8L679.6 193.3L681.3 191.9L683 190.4L684.7 189L686.4 187.6L688.1 186.1L689.9 184.7L691.6 183.2L693.4 181.8L695.2 180.4L696.9 178.9L698.7 177.5L700.5 176.1L702.4 174.6L704.2 173.2L706 171.7L707.9 170.3L709.7 168.9L711.6 167.4L713.5 166L715.4 164.6L717.3 163.1L719.2 161.7L721.1 160.3L723.1 158.8L725 157.4L727 156L728.9 154.6L730.9 153.1L732.9 151.7L734.9 150.3L736.9 148.9L738.9 147.4L740.9 146L742.9 144.6L745 143.2L747 141.7L749 140.3L751.1 138.9L753.2 137.5L755.2 136.1L757.3 134.7L759.4 133.3L761.5 131.8L763.6 130.4L765.7 129L767.8 127.6L769.9 126.2L772 124.8L774.2 123.4L776.3 122L778.4 120.6L780.6 119.2L782.7 117.8L784.9 116.4L787 115L789.2 113.6L791.3 112.3L793.5 110.9L795.7 109.5L797.8 108.1L800 106.7L802.2 105.4L804.3 104L806.5 102.6L808.7 101.3L810.9 99.9L813 98.6L815.2 97.2L817.4 95.9L819.6 94.5L821.7 93.2L823.9 91.9L826.1 90.5L828.2 89.2L830.4 87.9L832.5 86.6L834.7 85.3L836.8 84L839 82.8L841.1 81.5L843.2 80.2L845.3 79L847.4 77.7L849.5 76.5L851.6 75.3L853.7 74.1L855.7 72.9L857.8 71.8L859.8 70.6L861.8 69.5L863.8 68.4L865.7 67.3L867.7 66.2L869.6 65.2L871.5 64.2L873.4 63.2L875.2 62.3L877.1 61.4L878.9 60.5L880.6 59.7L882.4 58.9L884.1 58.2L885.7 57.6L887.4 56.9L889 56.4L890.6 55.9L892.1 55.5L893.7 55.1L895.2 54.9L896.7 54.6L898.2 54.5L899.6 54.5L901.1 54.5L902.6 54.6L904 54.8L905.5 55.1L907 55.4L908.5 55.8L910 56.3L911.5 56.8L913 57.4L914.6 58.1L916.2 58.8L917.8 59.5L919.4 60.3L921 61.2L922.7 62.1L924.4 63L926.1 64L927.9 65L929.6 66L931.4 67.1L933.2 68.1L935 69.2L936.8 70.4L938.6 71.5L940.5 72.7L942.3 73.8L944.2 75L946.1 76.2L947.9 77.5L949.8 78.7L951.8 79.9L953.7 81.2L955.6 82.5L957.5 83.7L959.5 85L961.4 86.3L963.3 87.6L965.3 88.9L967.2 90.2L969.2 91.6L971.2 92.9L973.1 94.2L975.1 95.6L977 96.9L979 98.3L981 99.6L982.9 101L984.9 102.3L986.9 103.7L988.8 105.1L990.8 106.4L992.7 107.8L994.7 109.2L996.7 110.6L998.6 111.9L1000.6 113.3L1002.5 114.7L1004.5 116.1L1006.4 117.5L1008.3 118.9L1010.3 120.3L1012.2 121.7L1014.1 123.1L1016 124.5L1018 125.9L1019.9 127.3L1021.8 128.7L1023.7 130.1L1025.6 131.5L1027.5 132.9L1029.4 134.3L1031.2 135.8L1033.1 137.2" stroke="#ffa500" stroke-width="1.39" stroke-dasharray="1.39 2.29" fill="none"/>
<path d="M628 267L629 265.6L630 264.1L631 262.7L632 261.3L633.1 259.9L634.1 258.4L635.2 257L636.3 255.6L637.4 254.2L638.6 252.7L639.7 251.3L640.8 249.9L642 248.5L643.2 247.1L644.4 245.6L645.6 244.2L646.9 242.8L648.1 241.4L649.4 239.9L650.6 238.5L651.9 237.1L653.2 235.7L654.6 234.3L655.9 232.8L657.2 231.4L658.6 230L660 228.6L661.4 227.2L662.8 225.8L664.2 224.3L665.6 222.9L667 221.5L668.5 220.1L670 218.7L671.4 217.3L672.9 215.9L674.4 214.4L675.9 213L677.5 211.6L679 210.2L680.6 208.8L682.1 207.4L683.7 206L685.3 204.6L686.9 203.2L688.5 201.8L690.2 200.4L691.8 199L693.4 197.5L695.1 196.1L696.8 194.7L698.4 193.3L700.1 191.9L701.8 190.5L703.6 189.1L705.3 187.7L707 186.3L708.8 184.9L710.5 183.6L712.3 182.2L714 180.8L715.8 179.4L717.6 178L719.4 176.6L721.2 175.2L723 173.8L724.9 172.4L726.7 171.1L728.5 169.7L730.4 168.3L732.3 166.9L734.1 165.5L736 164.2L737.9 162.8L739.8 161.4L741.7 160L743.6 158.7L745.5 157.3L747.4 155.9L749.3 154.6L751.2 153.2L753.2 151.8L755.1 150.5L757.1 149.1L759 147.8L761 146.4L762.9 145.1L764.9 143.7L766.9 142.4L768.9 141L770.8 139.7L772.8 138.4L774.8 137L776.8 135.7L778.8 134.4L780.8 133.1L782.8 131.7L784.8 130.4L786.8 129.1L788.8 127.8L790.8 126.5L792.8 125.2L794.8 123.9L796.8 122.6L798.8 121.3L800.8 120.1L802.8 118.8L804.8 117.5L806.8 116.2L808.8 115L810.8 113.7L812.8 112.5L814.8 111.3L816.8 110L818.8 108.8L820.8 107.6L822.8 106.4L824.7 105.2L826.7 104L828.7 102.8L830.6 101.6L832.6 100.5L834.5 99.3L836.5 98.2L838.4 97.1L840.3 96L842.2 94.9L844.1 93.8L846 92.7L847.9 91.6L849.8 90.6L851.6 89.6L853.5 88.6L855.3 87.6L857.1 86.6L859 85.6L860.8 84.7L862.5 83.8L864.3 82.9L866 82.1L867.8 81.2L869.5 80.4L871.2 79.7L872.9 78.9L874.6 78.2L876.2 77.5L877.8 76.8L879.5 76.2L881.1 75.6L882.7 75.1L884.2 74.6L885.8 74.1L887.3 73.7L888.9 73.3L890.4 73L891.9 72.7L893.4 72.4L894.9 72.2L896.4 72.1L897.9 71.9L899.3 71.9L900.8 71.9L902.3 71.9L903.7 72L905.2 72.1L906.7 72.3L908.2 72.5L909.6 72.7L911.1 73.1L912.6 73.4L914.1 73.8L915.7 74.2L917.2 74.7L918.7 75.2L920.3 75.8L921.9 76.4L923.5 77L925.1 77.7L926.7 78.4L928.3 79.1L929.9 79.8L931.6 80.6L933.3 81.4L934.9 82.3L936.6 83.2L938.4 84L940.1 85L941.8 85.9L943.6 86.8L945.3 87.8L947.1 88.8L948.9 89.8L950.7 90.9L952.5 91.9L954.3 93L956.1 94L958 95.1L959.8 96.2L961.7 97.4L963.5 98.5L965.4 99.6L967.3 100.8L969.2 101.9L971.1 103.1L972.9 104.3L974.8 105.5L976.7 106.7L978.7 107.9L980.6 109.1L982.5 110.3L984.4 111.6L986.3 112.8L988.2 114.1L990.2 115.3L992.1 116.6L994 117.8L996 119.1L997.9 120.4L999.8 121.7L1001.7 122.9L1003.7 124.2L1005.6 125.5L1007.5 126.8L1009.5 128.1L1011.4 129.4L1013.3 130.8L1015.2 132.1L1017.2 133.4L1019.1 134.7L1021 136L1022.9 137.4L1024.8 138.7L1026.7 140L1028.6 141.4L1030.5 142.7L1032.4 144.1L1034.3 145.4L1036.2 146.8L1038.1 148.1L1040 149.5L1041.8 150.8L1043.7 152.2L1045.6 153.5L1047.4 154.9L1049.3 156.3" stroke="#ffa500" stroke-width="1.39" stroke-dasharray="1.39 2.29" fill="none"/>
<path d="M612.9 267.8L613.2 266.4L613.5 264.9L613.8 263.5L614.1 262.1L614.5 260.7L614.9 259.3L615.2 257.8L615.6 256.4L616 255L616.5 253.6L616.9 252.2L617.4 250.7L617.9 249.3L618.4 247.9L618.9 246.5L619.4 245.1L619.9 243.7L620.5 242.2L621.1 240.8L621.7 239.4L622.3 238L622.9 236.6L623.5 235.2L624.2 233.7L624.9 232.3L625.5 230.9L626.2 229.5L627 228.1L627.7 226.7L628.4 225.3L629.2 223.9L630 222.4L630.8 221L631.6 219.6L632.4 218.2L633.2 216.8L634.1 215.4L635 214L635.8 212.6L636.7 211.2L637.6 209.8L638.6 208.4L639.5 207L640.5 205.6L641.4 204.2L642.4 202.8L643.4 201.4L644.4 200L645.4 198.6L646.5 197.2L647.5 195.8L648.6 194.4L649.7 193L650.7 191.6L651.9 190.2L653 188.8L654.1 187.4L655.2 186L656.4 184.6L657.6 183.2L658.7 181.8L659.9 180.4L661.1 179.1L662.3 177.7L663.6 176.3L664.8 174.9L666.1 173.5L667.3 172.1L668.6 170.8L669.9 169.4L671.2 168L672.5 166.6L673.8 165.3L675.1 163.9L676.4 162.5L677.8 161.1L679.1 159.8L680.5 158.4L681.9 157.1L683.2 155.7L684.6 154.3L686 153L687.4 151.6L688.9 150.3L690.3 148.9L691.7 147.6L693.1 146.2L694.6 144.9L696 143.5L697.5 142.2L699 140.9L700.4 139.5L701.9 138.2L703.4 136.9L704.9 135.6L706.4 134.2L707.8 132.9L709.3 131.6L710.8 130.3L712.4 129L713.9 127.7L715.4 126.4L716.9 125.1L718.4 123.8L719.9 122.6L721.4 121.3L722.9 120L724.4 118.7L725.9 117.5L727.4 116.2L728.9 115L730.4 113.7L731.9 112.5L733.4 111.3L734.9 110L736.4 108.8L737.8 107.6L739.3 106.4L740.7 105.2L742.2 104L743.6 102.9L745 101.7L746.4 100.6L747.8 99.4L749.2 98.3L750.5 97.2L751.8 96.1L753.1 95L754.4 93.9L755.7 92.8L756.9 91.8L758.1 90.8L759.2 89.7L760.4 88.7L761.5 87.8L762.5 86.8L763.5 85.9L764.5 84.9L765.4 84L766.3 83.2L767.1 82.3L767.8 81.5L768.5 80.7L769.1 79.9L769.7 79.2L770.2 78.5L770.6 77.8L770.9 77.2L771.1 76.6L771.3 76L771.3 75.5L771.3 75L771.1 74.5L770.8 74.1L770.5 73.7L770 73.4L769.3 73.1L768.6 72.8L767.7 72.6L766.7 72.5L765.6 72.4L764.3 72.3L762.9 72.3M1041.9 72.3L1040.7 72.4L1039.6 72.5L1038.6 72.7L1037.8 72.9L1037.1 73.2L1036.6 73.5L1036.1 73.8L1035.8 74.2L1035.6 74.7L1035.5 75.1L1035.5 75.6L1035.6 76.2L1035.8 76.8L1036.1 77.4L1036.5 78.1L1037 78.7L1037.5 79.5L1038.1 80.2L1038.8 81L1039.6 81.8L1040.4 82.6L1041.3 83.5L1042.2 84.4L1043.2 85.3L1044.2 86.2L1045.3 87.1L1046.4 88.1L1047.6 89.1L1048.8 90.1L1050 91.1L1051.2 92.2L1052.5 93.2L1053.8 94.3L1055.2 95.4L1056.6 96.5L1057.9 97.6L1059.4 98.7L1060.8 99.8L1062.2 101L1063.7 102.1L1065.2 103.3L1066.6 104.5L1068.1 105.6" stroke="#ffa500" stroke-width="1.39" stroke-dasharray="1.39 2.29" fill="none"/>
<path d="M614 270L614.7 268.5L615.5 267.1L616.2 265.6L617 264.1L617.8 262.7L618.7 261.2L619.5 259.7L620.4 258.3L621.2 256.8L622.1 255.3L623.1 253.9L624 252.4L624.9 250.9L625.9 249.5L626.9 248L627.9 246.5L628.9 245.1L629.9 243.6L631 242.1L632 240.7L633.1 239.2L634.2 237.7L635.3 236.3L636.5 234.8L637.6 233.3L638.8 231.9L640 230.4L641.2 229L642.4 227.5L643.6 226L644.9 224.6L646.1 223.1L647.4 221.6L648.7 220.2L650 218.7L651.3 217.2L652.7 215.8L654 214.3L655.4 212.8L656.8 211.4L658.2 209.9L659.6 208.4L661 207L662.5 205.5L663.9 204L665.4 202.6L666.9 201.1L668.4 199.7L669.9 198.2L671.4 196.7L673 195.3L674.5 193.8L676.1 192.3L677.7 190.9L679.3 189.4L680.9 187.9L682.5 186.5L684.2 185L685.8 183.5L687.5 182.1L689.2 180.6L690.9 179.2L692.6 177.7L694.3 176.2L696 174.8L697.8 173.3L699.5 171.8L701.3 170.4L703.1 168.9L704.9 167.5L706.7 166L708.5 164.5L710.3 163.1L712.2 161.6L714 160.1L715.9 158.7L717.8 157.2L719.7 155.8L721.6 154.3L723.5 152.8L725.4 151.4L727.3 149.9L729.3 148.5L731.2 147L733.2 145.5L735.1 144.1L737.1 142.6L739.1 141.2L741.1 139.7L743.1 138.2L745.1 136.8L747.2 135.3L749.2 133.9L751.2 132.4L753.3 130.9L755.4 129.5L757.4 128L759.5 126.6L761.6 125.1L763.7 123.7L765.8 122.2L767.9 120.7L770 119.3L772.2 117.8L774.3 116.4L776.4 114.9L778.6 113.5L780.8 112L782.9 110.6L785.1 109.1L787.3 107.7L789.4 106.2L791.6 104.8L793.8 103.3L796 101.9L798.2 100.4L800.4 99L802.6 97.5L804.9 96.1L807.1 94.6L809.3 93.2L811.5 91.8L813.8 90.3L816 88.9L818.3 87.5L820.5 86L822.7 84.6L825 83.2L827.2 81.7L829.5 80.3L831.7 78.9" stroke="#ffa500" stroke-width="1.39" stroke-dasharray="1.39 2.29" fill="none"/>
<path d="M626 266L626.4 264.5L626.8 263.1L627.2 261.6L627.6 260.2L628.1 258.7L628.5 257.3L629 255.8L629.5 254.4L630 252.9L630.6 251.4L631.1 250L631.7 248.5L632.3 247.1L632.9 245.6L633.5 244.2L634.1 242.7L634.8 241.3L635.4 239.8L636.1 238.4L636.8 236.9L637.5 235.4L638.2 234L639 232.5L639.7 231.1L640.5 229.6L641.3 228.2L642.1 226.7L642.9 225.3L643.8 223.8L644.6 222.4L645.5 220.9L646.4 219.5L647.3 218L648.2 216.6L649.1 215.1L650 213.7L651 212.2L652 210.8L653 209.3L654 207.9L655 206.4L656 205L657.1 203.5L658.1 202.1L659.2 200.6L660.3 199.2L661.4 197.8L662.5 196.3L663.6 194.9L664.8 193.4L665.9 192L667.1 190.5L668.3 189.1L669.5 187.7L670.7 186.2L671.9 184.8L673.2 183.3L674.4 181.9L675.7 180.5L676.9 179L678.2 177.6L679.5 176.1L680.8 174.7L682.2 173.3L683.5 171.8L684.9 170.4L686.2 169L687.6 167.5L689 166.1L690.4 164.7L691.8 163.2L693.2 161.8L694.6 160.4L696.1 159L697.5 157.5L699 156.1L700.5 154.7L701.9 153.3L703.4 151.8L704.9 150.4L706.5 149L708 147.6L709.5 146.2L711 144.8L712.6 143.3L714.2 141.9L715.7 140.5L717.3 139.1L718.9 137.7L720.5 136.3" stroke="#ffa500" stroke-width="1.39" stroke-dasharray="1.39 2.29" fill="none"/>
<path d="M780 286L780.1 284.5L780.2 283.1L780.4 281.6L780.5 280.1L780.7 278.7L780.8 277.2L781 275.7L781.1 274.3L781.3 272.8L781.5 271.3L781.7 269.9L781.9 268.4L782.1 266.9L782.3 265.5L782.5 264L782.7 262.5L782.9 261.1L783.2 259.6L783.4 258.1L783.7 256.7L784 255.2L784.2 253.7L784.5 252.3L784.8 250.8L785.1 249.3L785.4 247.9L785.7 246.4L786 244.9L786.3 243.5L786.6 242L787 240.5L787.3 239.1L787.7 237.6L788 236.1L788.4 234.7L788.7 233.2L789.1 231.7L789.5 230.3L789.9 228.8L790.3 227.4L790.7 225.9L791.1 224.4L791.5 223L791.9 221.5L792.4 220L792.8 218.6L793.3 217.1L793.7 215.6L794.2 214.2L794.6 212.7L795.1 211.2L795.6 209.8L796.1 208.3L796.6 206.8L797 205.4L797.6 203.9L798.1 202.4L798.6 201L799.1 199.5L799.6 198L800.2 196.6L800.7 195.1L801.3 193.6L801.8 192.2L802.4 190.7L802.9 189.2L803.5 187.8L804.1 186.3L804.7 184.8L805.3 183.4L805.9 181.9L806.5 180.5L807.1 179L807.7 177.5L808.3 176.1L808.9 174.6L809.6 173.1L810.2 171.7L810.8 170.2L811.5 168.7L812.1 167.3L812.8 165.8L813.5 164.3L814.1 162.9L814.8 161.4L815.5 159.9L816.2 158.5L816.9 157L817.6 155.6L818.3 154.1L819 152.6L819.7 151.2L820.4 149.7L821.1 148.2L821.9 146.8L822.6 145.3L823.3 143.8L824.1 142.4L824.8 140.9L825.6 139.5L826.3 138L827.1 136.5L827.8 135.1L828.6 133.6L829.4 132.1L830.2 130.7L831 129.2L831.7 127.8L832.5 126.3L833.3 124.8L834.1 123.4L834.9 121.9L835.7 120.4L836.5 119L837.4 117.5L838.2 116.1L839 114.6L839.8 113.1L840.7 111.7L841.5 110.2L842.3 108.8L843.2 107.3L844 105.9L844.9 104.4L845.7 102.9L846.6 101.5L847.4 100L848.3 98.6L849.1 97.1L850 95.7L850.9 94.2L851.7 92.7L852.6 91.3L853.5 89.8L854.4 88.4L855.3 86.9L856.1 85.5L857 84L857.9 82.6L858.8 81.1L859.7 79.7L860.6 78.2L861.5 76.8L862.4 75.3L863.3 73.9L864.2 72.5L865.1 71L866 69.6L866.9 68.1L867.8 66.7L868.7 65.3L869.6 63.9L870.5 62.4L871.4 61L872.3 59.6L873.1 58.2L874 56.8L874.9 55.4L875.8 54L876.7 52.6L877.5 51.2L878.4 49.9L879.2 48.5L880 47.2L880.8 45.9L881.6 44.6L882.4 43.3L883 42.1L883.7 41L884.2 39.9L884.7 38.8L884.9 37.9L885 37.1L884.8 36.5L884.2 36.1L883.1 35.9L881.5 35.9L879.4 36.2L876.7 36.8L873.5 37.5L869.9 38.3L865.9 39.3L861.7 40.3" stroke="#ff2000" stroke-width="1.39" stroke-dasharray="1.39 2.29" fill="none"/>
<path d="M791 275L791.1 273.5L791.3 272.1L791.5 270.6L791.7 269.1L791.9 267.7L792.1 266.2L792.3 264.7L792.6 263.3L792.8 261.8L793 260.3L793.3 258.9L793.5 257.4L793.8 255.9L794 254.5L794.3 253L794.6 251.5L794.9 250.1L795.1 248.6L795.4 247.1L795.7 245.7L796 244.2L796.4 242.7L796.7 241.3L797 239.8L797.3 238.3L797.7 236.9L798 235.4L798.4 233.9L798.7 232.5L799.1 231L799.5 229.5L799.9 228.1L800.2 226.6L800.6 225.1L801 223.7L801.4 222.2L801.8 220.7L802.3 219.2L802.7 217.8L803.1 216.3L803.6 214.8L804 213.4L804.4 211.9L804.9 210.4L805.4 209L805.8 207.5L806.3 206L806.8 204.6L807.2 203.1L807.7 201.6L808.2 200.2L808.7 198.7L809.2 197.2L809.7 195.8L810.3 194.3L810.8 192.8L811.3 191.4L811.9 189.9L812.4 188.4L812.9 187L813.5 185.5L814 184L814.6 182.6L815.2 181.1L815.7 179.6L816.3 178.2L816.9 176.7L817.5 175.2L818.1 173.8L818.7 172.3L819.3 170.8L819.9 169.4L820.5 167.9L821.1 166.4L821.8 165L822.4 163.5L823 162L823.7 160.6L824.3 159.1L825 157.6L825.6 156.2L826.3 154.7L826.9 153.2L827.6 151.8L828.3 150.3L828.9 148.8L829.6 147.4L830.3 145.9L831 144.5L831.7 143L832.4 141.5L833.1 140.1L833.8 138.6L834.5 137.1L835.2 135.7L835.9 134.2L836.7 132.7L837.4 131.3L838.1 129.8L838.9 128.3L839.6 126.9L840.3 125.4L841.1 123.9L841.8 122.5L842.6 121L843.4 119.5L844.1 118.1L844.9 116.6L845.6 115.1L846.4 113.7L847.2 112.2L848 110.8L848.8 109.3L849.5 107.8L850.3 106.4L851.1 104.9L851.9 103.4L852.7 102L853.5 100.5L854.3 99L855.1 97.6L855.9 96.1L856.7 94.7L857.5 93.2L858.4 91.7L859.2 90.3L860 88.8L860.8 87.3L861.7 85.9L862.5 84.4L863.3 83L864.1 81.5L865 80L865.8 78.6L866.7 77.1L867.5 75.7L868.3 74.2L869.2 72.8L870 71.3L870.9 69.8L871.7 68.4L872.6 66.9L873.4 65.5L874.3 64L875.1 62.6L876 61.1L876.8 59.7L877.7 58.3L878.5 56.8L879.4 55.4L880.2 53.9L881.1 52.5L881.9 51.1L882.8 49.7L883.6 48.2L884.4 46.8L885.2 45.4L886.1 44L886.9 42.7L887.6 41.3L888.4 40L889.1 38.7L889.8 37.5L890.4 36.3L890.8 35.2L891.1 34.3L891.1 33.5L890.5 33.1L889.3 32.9L887.2 33.2L884.4 33.8L880.9 34.6L876.9 35.6L872.5 36.7M935.4 37.9L938.5 39.2L941.8 40.5L945.1 41.9L948.5 43.2L952 44.6L955.4 46L959 47.4L962.5 48.8L966 50.2L969.6 51.6L973.2 53.1L976.8 54.5L980.3 55.9L983.9 57.4L987.5 58.8L991.1 60.3L994.7 61.7L998.3 63.2L1001.9 64.6L1005.5 66.1L1009.1 67.5L1012.6 69L1016.2 70.4L1019.8 71.9L1023.3 73.3L1026.9 74.8" stroke="#ff2000" stroke-width="1.39" stroke-dasharray="1.39 2.29" fill="none"/>
<path d="M773 280L773 278.5L773 277.1L773 275.6L773.1 274.2L773.1 272.7L773.1 271.3L773.2 269.8L773.2 268.4L773.3 266.9L773.4 265.5L773.5 264L773.5 262.5L773.6 261.1L773.7 259.6L773.9 258.2L774 256.7L774.1 255.3L774.2 253.8L774.4 252.4L774.5 250.9L774.7 249.5L774.8 248L775 246.6L775.2 245.1L775.4 243.6L775.6 242.2L775.8 240.7L776 239.3L776.2 237.8L776.4 236.4L776.7 234.9L776.9 233.5L777.2 232L777.4 230.6L777.7 229.1L778 227.7L778.2 226.2L778.5 224.8L778.8 223.3L779.1 221.9L779.4 220.4L779.7 219L780.1 217.5L780.4 216.1L780.7 214.6L781.1 213.2L781.4 211.7L781.8 210.3L782.2 208.8L782.5 207.4L782.9 205.9L783.3 204.5L783.7 203L784.1 201.6L784.5 200.1L784.9 198.7L785.3 197.2L785.8 195.8L786.2 194.4L786.6 192.9L787.1 191.5L787.6 190L788 188.6L788.5 187.1L789 185.7L789.4 184.2L789.9 182.8L790.4 181.4L790.9 179.9L791.4 178.5L792 177L792.5 175.6L793 174.2L793.5 172.7L794.1 171.3L794.6 169.8L795.2 168.4L795.7 167L796.3 165.5L796.9 164.1L797.4 162.7L798 161.2L798.6 159.8L799.2 158.4L799.8 156.9L800.4 155.5L801 154.1L801.6 152.6L802.2 151.2L802.9 149.8L803.5 148.3L804.1 146.9L804.8 145.5L805.4 144.1L806.1 142.6L806.7 141.2L807.4 139.8L808.1 138.4L808.7 137L809.4 135.5L810.1 134.1L810.8 132.7L811.4 131.3L812.1 129.9L812.8 128.5L813.5 127.1L814.2 125.7L814.9 124.2L815.6 122.8L816.4 121.4L817.1 120L817.8 118.6L818.5 117.2L819.2 115.9L820 114.5L820.7 113.1L821.4 111.7L822.2 110.3L822.9 108.9L823.6 107.5L824.4 106.2L825.1 104.8L825.8 103.4L826.6 102.1L827.3 100.7L828.1 99.3L828.8 98L829.5 96.6L830.3 95.3L831 94L831.8 92.6L832.5 91.3L833.2 90L833.9 88.7L834.7 87.4L835.4 86.1L836.1 84.8L836.8 83.5L837.5 82.2L838.2 81L838.9 79.7L839.5 78.5L840.2 77.3L840.8 76.1L841.4 74.9L842.1 73.7L842.7 72.5L843.2 71.4L843.8 70.2L844.3 69.1L844.8 68L845.3 67L845.7 65.9L846.1 64.9L846.4 63.9L846.7 63L847 62.1L847.1 61.2L847.3 60.4L847.3 59.6L847.3 58.9L847.1 58.2L846.9 57.6L846.6 57L846.1 56.5L845.6 56.1L844.9 55.7L844 55.4L843 55.2L841.9 55L840.6 55L839.1 55L837.4 55.1L835.6 55.2L833.6 55.5L831.4 55.8L829 56.1L826.5 56.6L823.8 57.1L820.9 57.7L817.9 58.3L814.8 59L811.5 59.8L808 60.5L804.5 61.4L800.8 62.3L797 63.2L793.2 64.1L789.2 65.1L785.1 66.1L781 67.2L776.8 68.2L772.5 69.3L768.2 70.4M1039.7 71.6L1042.2 72.7L1044.9 73.9L1047.5 75.1L1050.2 76.3L1053 77.5L1055.7 78.7L1058.6 80L1061.4 81.2L1064.2 82.5L1067.1 83.7L1070 85L1072.9 86.3L1075.8 87.6L1078.8 88.9L1081.7 90.2L1084.6 91.6L1087.6 92.9L1090.6 94.2L1093.5 95.6" stroke="#ff2000" stroke-width="1.39" stroke-dasharray="1.39 2.29" fill="none"/>
<path d="M780 286L780.6 284.6L781.2 283.2L781.8 281.7L782.4 280.3L783 278.9L783.6 277.5L784.2 276.1L784.8 274.7L785.5 273.2L786.1 271.8L786.7 270.4L787.4 269L788 267.6L788.7 266.1L789.4 264.7L790.1 263.3L790.7 261.9L791.4 260.5L792.1 259.1L792.8 257.6L793.5 256.2L794.2 254.8L795 253.4L795.7 252L796.4 250.6L797.2 249.2L797.9 247.7L798.7 246.3L799.4 244.9L800.2 243.5L800.9 242.1L801.7 240.7L802.5 239.3L803.3 237.9L804.1 236.5L804.9 235L805.7 233.6L806.5 232.2L807.3 230.8L808.1 229.4L808.9 228L809.7 226.6L810.6 225.2L811.4 223.8L812.2 222.4L813.1 221L813.9 219.6L814.8 218.2L815.7 216.8L816.5 215.4L817.4 214L818.3 212.6L819.1 211.2L820 209.8L820.9 208.4L821.8 207L822.7 205.6L823.6 204.2L824.5 202.8L825.4 201.4L826.3 200L827.3 198.6L828.2 197.2L829.1 195.9L830 194.5L831 193.1L831.9 191.7L832.8 190.3L833.8 188.9L834.7 187.5L835.7 186.2L836.6 184.8L837.6 183.4L838.5 182L839.5 180.7L840.5 179.3L841.4 177.9L842.4 176.5L843.4 175.2L844.3 173.8L845.3 172.4L846.3 171.1L847.3 169.7L848.3 168.3L849.3 167L850.3 165.6L851.2 164.3L852.2 162.9L853.2 161.6L854.2 160.2L855.2 158.9L856.2 157.5L857.2 156.2L858.2 154.9L859.2 153.5L860.3 152.2L861.3 150.8L862.3 149.5L863.3 148.2L864.3 146.9L865.3 145.6L866.3 144.2L867.3 142.9L868.4 141.6L869.4 140.3L870.4 139L871.4 137.7L872.4 136.4L873.5 135.1L874.5 133.8L875.5 132.5L876.5 131.3L877.5 130L878.6 128.7L879.6 127.5L880.6 126.2L881.6 125L882.6 123.7L883.7 122.5L884.7 121.2L885.7 120L886.7 118.8L887.7 117.6L888.8 116.4L889.8 115.2L890.8 114L891.8 112.8L892.8 111.6L893.8 110.4L894.9 109.3L895.9 108.1L896.9 107L897.9 105.9L898.9 104.8" stroke="#ff2000" stroke-width="1.39" stroke-dasharray="1.39 2.29" fill="none"/>
<path d="M796 288L796.7 286.7L797.5 285.3L798.3 284L799 282.7L799.8 281.3L800.6 280L801.4 278.7L802.2 277.3L803 276L803.8 274.7L804.6 273.4L805.4 272L806.2 270.7L807 269.4L807.8 268L808.7 266.7L809.5 265.4L810.3 264.1L811.2 262.8L812 261.4L812.9 260.1L813.7 258.8L814.6 257.5L815.5 256.1L816.3 254.8L817.2 253.5L818.1 252.2L819 250.9L819.8 249.6L820.7 248.2L821.6 246.9L822.5 245.6L823.4 244.3L824.3 243L825.2 241.7L826.1 240.4L827.1 239.1L828 237.8L828.9 236.5L829.8 235.2L830.8 233.9L831.7 232.6L832.6 231.3L833.6 230L834.5 228.7L835.4 227.4L836.4 226.1L837.3 224.8L838.3 223.5L839.3 222.2L840.2 220.9L841.2 219.6L842.1 218.3L843.1 217.1L844.1 215.8L845 214.5L846 213.2L847 211.9L848 210.7L848.9 209.4L849.9 208.1L850.9 206.8L851.9 205.6L852.9 204.3L853.9 203.1L854.9 201.8L855.9 200.5L856.9 199.3L857.9 198L858.8 196.8L859.8 195.5L860.8 194.3L861.9 193L862.9 191.8L863.9 190.6L864.9 189.3L865.9 188.1L866.9 186.9L867.9 185.6L868.9 184.4L869.9 183.2L870.9 182L871.9 180.8L872.9 179.6L874 178.4L875 177.1L876 175.9L877 174.8L878 173.6L879 172.4L880.1 171.2L881.1 170L882.1 168.8L883.1 167.7L884.1 166.5L885.2 165.3L886.2 164.2L887.2 163L888.2 161.9L889.2 160.8L890.2 159.6L891.3 158.5L892.3 157.4L893.3 156.2L894.3 155.1L895.3 154L896.4 152.9L897.4 151.8L898.4 150.7L899.4 149.7L900.4 148.6L901.5 147.5L902.5 146.5L903.5 145.4L904.5 144.4L905.5 143.3L906.6 142.3L907.6 141.3L908.6 140.3L909.6 139.3L910.6 138.3L911.7 137.3L912.7 136.3L913.7 135.4L914.7 134.4L915.7 133.5L916.8 132.5L917.8 131.6L918.8 130.7L919.8 129.8L920.9 128.9L921.9 128L922.9 127.2L924 126.3L925 125.5L926 124.7L927.1 123.9L928.1 123.1L929.2 122.3L930.2 121.5L931.3 120.8L932.3 120.1L933.4 119.3L934.5 118.6L935.5 118L936.6 117.3L937.7 116.6L938.8 116L939.9 115.4L941 114.8L942.1 114.2L943.2 113.7L944.4 113.1L945.5 112.6L946.6 112.1L947.8 111.7L949 111.2L950.1 110.8L951.3 110.4L952.5 110L953.7 109.6L955 109.3L956.2 109L957.5 108.7L958.7 108.4L960 108.2L961.3 108L962.7 107.8L964 107.6L965.3 107.4L966.7 107.3" stroke="#ff2000" stroke-width="1.39" stroke-dasharray="1.39 2.29" fill="none"/>
<path d="M791 275L791.8 273.7L792.6 272.3L793.4 271L794.2 269.7L795.1 268.3L795.9 267L796.7 265.6L797.6 264.3L798.4 263L799.3 261.6L800.1 260.3L801 259L801.8 257.6L802.7 256.3L803.6 255L804.4 253.7L805.3 252.3L806.2 251L807.1 249.7L808 248.3L808.9 247L809.8 245.7L810.7 244.4L811.6 243L812.5 241.7L813.5 240.4L814.4 239.1L815.3 237.8L816.3 236.4L817.2 235.1L818.1 233.8L819.1 232.5L820 231.2L821 229.9L822 228.6L822.9 227.3L823.9 225.9L824.9 224.6L825.8 223.3L826.8 222L827.8 220.7L828.8 219.4L829.8 218.1L830.7 216.8L831.7 215.5L832.7 214.2L833.7 212.9L834.7 211.6L835.7 210.4L836.7 209.1L837.8 207.8L838.8 206.5L839.8 205.2L840.8 203.9L841.8 202.6L842.8 201.4L843.9 200.1L844.9 198.8L845.9 197.6L846.9 196.3L848 195L849 193.8L850.1 192.5L851.1 191.2L852.1 190L853.2 188.7L854.2 187.5L855.3 186.2L856.3 185L857.4 183.7L858.4 182.5L859.5 181.3L860.5 180L861.6 178.8L862.6 177.6L863.7 176.3L864.7 175.1L865.8 173.9L866.8 172.7L867.9 171.5L869 170.3L870 169.1L871.1 167.9L872.1 166.7L873.2 165.5L874.3 164.3L875.3 163.1L876.4 161.9L877.4 160.8L878.5 159.6L879.6 158.4L880.6 157.3L881.7 156.1L882.8 155L883.8 153.9L884.9 152.7L886 151.6L887 150.5L888.1 149.4L889.1 148.2L890.2 147.1L891.3 146L892.3 145L893.4 143.9L894.5 142.8L895.5 141.7L896.6 140.7L897.6 139.6L898.7 138.6L899.8 137.5L900.8 136.5L901.9 135.5L903 134.5L904 133.5L905.1 132.5L906.1 131.5L907.2 130.5L908.3 129.6L909.3 128.6L910.4 127.7L911.4 126.8L912.5 125.9L913.6 125L914.6 124.1L915.7 123.2L916.8 122.3L917.9 121.5L918.9 120.6L920 119.8L921.1 119L922.2 118.2L923.2 117.5L924.3 116.7L925.4 116L926.5 115.2L927.6 114.5L928.7 113.8L929.8 113.2L930.9 112.5L932 111.9L933.2 111.3L934.3 110.7L935.4 110.1L936.6 109.5L937.7 109L938.9 108.5L940 108L941.2 107.5L942.4 107.1L943.6 106.6L944.8 106.2L946 105.9L947.3 105.5L948.5 105.2L949.8 104.9L951.1 104.6L952.4 104.4L953.7 104.1L955 103.9L956.3 103.8L957.7 103.6L959.1 103.5L960.5 103.4L961.9 103.3L963.3 103.3L964.8 103.3L966.2 103.3L967.7 103.3L969.2 103.4L970.8 103.5L972.3 103.6L973.9 103.7L975.5 103.9L977.2 104.1L978.8 104.3L980.5 104.6L982.2 104.8L983.9 105.1L985.7 105.5L987.5 105.8L989.3 106.2L991.1 106.6L992.9 107L994.8 107.4L996.7 107.9L998.6 108.4L1000.6 108.9L1002.5 109.4L1004.5 110L1006.5 110.5L1008.6 111.1L1010.6 111.8L1012.7 112.4L1014.8 113" stroke="#ff2000" stroke-width="1.39" stroke-dasharray="1.39 2.29" fill="none"/>
<path d="M773.1 280L773 278.6L772.9 277.1L772.9 275.7L772.8 274.2L772.8 272.8L772.7 271.4L772.7 269.9L772.7 268.5L772.6 267.1L772.6 265.6L772.6 264.2L772.6 262.8L772.7 261.3L772.7 259.9L772.7 258.5L772.8 257L772.8 255.6L772.9 254.2L772.9 252.7L773 251.3L773.1 249.9L773.1 248.4L773.2 247L773.3 245.6L773.4 244.1L773.6 242.7L773.7 241.3L773.8 239.8L773.9 238.4L774.1 237L774.2 235.5L774.4 234.1L774.6 232.7L774.7 231.3L774.9 229.8L775.1 228.4L775.3 227L775.5 225.5L775.7 224.1L775.9 222.7L776.2 221.3L776.4 219.8L776.6 218.4L776.9 217L777.1 215.5L777.4 214.1L777.7 212.7L777.9 211.3L778.2 209.8L778.5 208.4L778.8 207L779.1 205.6L779.4 204.2L779.7 202.7L780 201.3L780.4 199.9L780.7 198.5L781.1 197.1L781.4 195.6L781.8 194.2L782.1 192.8L782.5 191.4L782.9 190L783.3 188.5L783.7 187.1L784 185.7L784.4 184.3L784.9 182.9L785.3 181.5L785.7 180.1L786.1 178.6L786.6 177.2L787 175.8L787.4 174.4L787.9 173L788.4 171.6L788.8 170.2L789.3 168.8L789.8 167.4L790.2 166L790.7 164.6L791.2 163.2L791.7 161.8L792.2 160.4L792.7 159L793.2 157.6L793.8 156.2L794.3 154.8L794.8 153.4L795.3 152L795.9 150.6L796.4 149.3L797 147.9L797.5 146.5L798.1 145.1L798.6 143.7L799.2 142.3L799.8 141L800.4 139.6L800.9 138.2L801.5 136.8L802.1 135.5L802.7 134.1L803.3 132.7L803.9 131.4L804.5 130L805.1 128.7L805.7 127.3L806.3 126L806.9 124.6L807.5 123.3L808.1 121.9L808.7 120.6L809.3 119.3L810 117.9L810.6 116.6L811.2 115.3L811.8 114L812.4 112.7L813.1 111.4L813.7 110.1L814.3 108.8L814.9 107.5L815.5 106.2L816.1 104.9L816.7 103.6L817.3 102.4L818 101.1L818.5 99.8L819.1 98.6L819.7 97.4L820.3 96.1L820.9 94.9L821.5 93.7L822 92.5L822.6 91.3L823.1 90.1L823.6 89L824.2 87.8L824.7 86.7L825.2 85.5L825.6 84.4L826.1 83.3L826.5 82.2" stroke="#ff2000" stroke-width="1.39" stroke-dasharray="1.39 2.29" fill="none"/>
<path d="M773.3 232.8L772.7 231.7L772.2 230.6L771.6 229.4L771.1 228.3L770.5 227.2L770 226.1L769.4 225L768.9 223.9L768.3 222.8L767.8 221.7L767.3 220.6L766.8 219.5L766.2 218.4L765.7 217.3L765.2 216.2L764.7 215.1L764.2 214.1L763.7 213L763.2 211.9L762.7 210.9L762.2 209.8L761.7 208.7L761.2 207.7L760.7 206.6L760.2 205.6L759.7 204.5L759.2 203.5L758.7 202.5L758.2 201.4L757.8 200.4L757.3 199.4L756.8 198.4L756.3 197.4L755.9 196.4L755.4 195.4L754.9 194.4L754.5 193.4L754 192.4L753.5 191.4L753 190.4L752.6 189.5L752.1 188.5L751.6 187.6L751.2 186.6L750.7 185.7L750.2 184.7L749.8 183.8L749.3 182.9L748.8 181.9L748.3 181L747.9 180.1L747.4 179.2L746.9 178.3L746.4 177.4L746 176.6L745.5 175.7L745 174.8L744.5 174L744 173.1L743.5 172.3L743 171.5L742.5 170.6L742 169.8L741.5 169L740.9 168.2L740.4 167.4L739.9 166.6L739.3 165.9L738.8 165.1L738.2 164.4L737.7 163.6L737.1 162.9L736.6 162.2L736 161.5L735.4 160.8L734.8 160.1L734.2 159.4L733.6 158.7" stroke="#ff2000" stroke-width="1.39" stroke-dasharray="1.39 2.29" fill="none"/>
<path d="M616.7 232.8L618.2 231.4L619.7 230L621.2 228.5L622.8 227.1L624.4 225.7L625.9 224.3L627.5 222.8L629.1 221.4L630.8 220L632.4 218.6L634.1 217.2L635.7 215.7L637.4 214.3L639.1 212.9L640.8 211.5L642.6 210.1L644.3 208.6L646.1 207.2L647.8 205.8L649.6 204.4L651.4 203L653.3 201.6L655.1 200.2L656.9 198.8L658.8 197.3L660.6 195.9L662.5 194.5L664.4 193.1L666.3 191.7L668.2 190.3L670.2 188.9L672.1 187.5L674.1 186.1L676 184.7L678 183.3L680 181.9L682 180.5L684 179.1L686 177.7L688.1 176.3L690.1 174.9L692.2 173.5L694.2 172.1L696.3 170.7L698.4 169.3L700.5 167.9L702.6 166.6L704.7 165.2L706.8 163.8L709 162.4L711.1 161L713.3 159.6L715.4 158.3L717.6 156.9L719.8 155.5L721.9 154.1L724.1 152.8L726.3 151.4L728.5 150L730.7 148.7L732.9 147.3L735.2 146L737.4 144.6L739.6 143.2L741.9 141.9L744.1 140.6L746.3 139.2L748.6 137.9L750.9 136.5L753.1 135.2L755.4 133.9L757.6 132.5L759.9 131.2L762.2 129.9L764.5 128.6L766.7 127.2L769 125.9L771.3 124.6L773.6 123.3L775.9 122L778.1 120.7L780.4 119.5L782.7 118.2L785 116.9L787.3 115.6L789.5 114.4L791.8 113.1L794.1 111.8L796.4 110.6L798.6 109.4L800.9 108.1L803.1 106.9L805.4 105.7L807.6 104.5L809.9 103.3L812.1 102.1L814.3 100.9L816.5 99.8L818.7 98.6L820.9 97.5L823.1 96.3L825.3 95.2L827.5 94.1L829.6 93L831.7 91.9L833.9 90.9L836 89.8L838.1 88.8L840.2 87.8L842.2 86.8L844.3 85.8L846.3 84.9L848.3 83.9L850.3 83L852.3 82.1L854.2 81.3L856.1 80.4L858 79.6L859.9 78.9L861.8 78.1L863.6 77.4L865.4 76.7L867.2 76.1L869 75.4L870.7 74.9L872.4 74.3L874.1 73.8L875.8 73.4L877.4 73L879 72.6L880.6 72.3L882.2 72L883.7 71.7L885.3 71.6" stroke="#dc14f5" stroke-width="1.39" stroke-dasharray="1.39 2.29" fill="none"/>
<path d="M602.2 231.7L603.4 230.2L604.7 228.8L606 227.3L607.2 225.8L608.6 224.3L609.9 222.9L611.2 221.4L612.6 219.9L614 218.4L615.4 217L616.8 215.5L618.2 214L619.7 212.5L621.1 211.1L622.6 209.6L624.1 208.1L625.6 206.6L627.2 205.2L628.7 203.7L630.3 202.2L631.9 200.7L633.5 199.3L635.1 197.8L636.8 196.3L638.4 194.8L640.1 193.4L641.8 191.9L643.5 190.4L645.2 188.9L647 187.5L648.7 186L650.5 184.5L652.3 183L654.1 181.6L655.9 180.1L657.7 178.6L659.6 177.1L661.4 175.7L663.3 174.2L665.2 172.7L667.1 171.2L669 169.8L671 168.3L672.9 166.8L674.9 165.3L676.9 163.9L678.8 162.4L680.9 160.9L682.9 159.4L684.9 158L687 156.5L689 155L691.1 153.6L693.2 152.1L695.3 150.6L697.4 149.1L699.5 147.7L701.7 146.2L703.8 144.7L706 143.2L708.2 141.8L710.3 140.3L712.5 138.8L714.8 137.3L717 135.9L719.2 134.4L721.5 132.9L723.7 131.4L726 130L728.3 128.5L730.6 127L732.9 125.5L735.2 124.1L737.5 122.6L739.8 121.1L742.2 119.6L744.5 118.2L746.9 116.7L749.3 115.2L751.6 113.7L754 112.3L756.4 110.8L758.8 109.3L761.3 107.8L763.7 106.4L766.1 104.9L768.6 103.4L771 101.9L773.5 100.5L776 99L778.4 97.5L780.9 96L783.4 94.6L785.9 93.1L788.4 91.6L790.9 90.1L793.5 88.7L796 87.2L798.5 85.7L801.1 84.2L803.6 82.8L806.2 81.3" stroke="#dc14f5" stroke-width="1.39" stroke-dasharray="1.39 2.29" fill="none"/>
<path d="M597.8 229.4L598.8 228L599.7 226.5L600.7 225.1L601.7 223.6L602.7 222.2L603.7 220.8L604.8 219.3L605.8 217.9L606.9 216.5L608 215L609.1 213.6L610.2 212.2L611.4 210.7L612.5 209.3L613.7 207.9L614.9 206.4L616.1 205L617.3 203.6L618.6 202.1L619.9 200.7L621.1 199.3L622.4 197.8L623.7 196.4L625.1 195L626.4 193.5L627.8 192.1L629.1 190.7L630.5 189.3L631.9 187.8L633.3 186.4L634.8 185L636.2 183.6L637.7 182.1L639.1 180.7L640.6 179.3L642.1 177.9L643.6 176.4L645.2 175L646.7 173.6L648.3 172.2L649.9 170.8L651.4 169.3L653 167.9L654.7 166.5L656.3 165.1L657.9 163.7L659.6 162.3L661.2 160.9L662.9 159.5L664.6 158L666.3 156.6L668 155.2L669.7 153.8L671.4 152.4L673.2 151L674.9 149.6L676.7 148.2L678.5 146.8L680.3 145.4L682.1 144L683.9 142.6L685.7 141.2L687.5 139.9L689.3 138.5L691.2 137.1L693 135.7L694.9 134.3L696.7 132.9L698.6 131.6L700.5 130.2L702.4 128.8L704.2 127.4L706.1 126.1L708 124.7L710 123.3L711.9 122L713.8 120.6L715.7 119.3L717.6 117.9L719.5 116.6L721.5 115.2L723.4 113.9L725.3 112.6L727.3 111.2L729.2 109.9L731.1 108.6L733.1 107.3L735 106L736.9 104.7L738.8 103.4L740.8 102.1L742.7 100.8L744.6 99.5L746.5 98.2L748.4 97L750.2 95.7L752.1 94.5L754 93.2L755.8 92L757.6 90.8L759.4 89.6L761.2 88.4L763 87.2L764.8 86L766.5 84.9L768.2 83.7L769.8 82.6L771.5 81.5L773.1 80.4L774.7 79.3L776.2 78.2L777.7 77.2" stroke="#dc14f5" stroke-width="1.39" stroke-dasharray="1.39 2.29" fill="none"/>
<path d="M589.4 234.4L590 233L590.7 231.6L591.4 230.3L592.1 228.9L592.8 227.5L593.6 226.1L594.3 224.8L595.1 223.4L595.9 222L596.7 220.6L597.5 219.3L598.3 217.9L599.2 216.5L600.1 215.1L600.9 213.8L601.8 212.4L602.7 211L603.7 209.7L604.6 208.3L605.6 206.9L606.5 205.6L607.5 204.2L608.5 202.8L609.5 201.5L610.6 200.1L611.6 198.8L612.6 197.4L613.7 196.1L614.8 194.7L615.9 193.4L617 192L618.1 190.7L619.3 189.3L620.4 188L621.6 186.6L622.7 185.3L623.9 183.9L625.1 182.6L626.3 181.3L627.5 179.9L628.8 178.6L630 177.3L631.3 175.9L632.5 174.6L633.8 173.3L635.1 171.9L636.4 170.6L637.7 169.3L639 168L640.3 166.7L641.7 165.4L643 164.1L644.4 162.7L645.7 161.4L647.1 160.1L648.5 158.8L649.9 157.5L651.2 156.3L652.6 155L654 153.7L655.5 152.4L656.9 151.1L658.3 149.8L659.7 148.6L661.1 147.3L662.6 146L664 144.8L665.5 143.5L666.9 142.3L668.4 141L669.8 139.8L671.3 138.6L672.7 137.3L674.2 136.1L675.6 134.9L677.1 133.7L678.5 132.4L680 131.2L681.4 130L682.8 128.9L684.3 127.7L685.7 126.5L687.1 125.3L688.6 124.2L690 123L691.4 121.9L692.8 120.7L694.2 119.6L695.5 118.5L696.9 117.3L698.3 116.2L699.6 115.2L700.9 114.1L702.2 113L703.5 111.9L704.8 110.9L706.1 109.8L707.3 108.8L708.5 107.8L709.7 106.8L710.8 105.8L712 104.8L713.1 103.9L714.1 102.9L715.2 102L716.2 101.1L717.2 100.2L718.1 99.3L719 98.5L719.8 97.7L720.6 96.8L721.4 96L722.1 95.3L722.7 94.5L723.3 93.8L723.8 93.1L724.3 92.4L724.7 91.7L725.1 91.1L725.3 90.5" stroke="#dc14f5" stroke-width="1.39" stroke-dasharray="1.39 2.29" fill="none"/>
<path d="M759 246L759.3 244.5L759.6 243.1L760 241.6L760.3 240.1L760.7 238.7L761 237.2L761.4 235.7L761.8 234.3L762.2 232.8L762.5 231.3L763 229.9L763.4 228.4L763.8 227L764.2 225.5L764.6 224L765.1 222.6L765.5 221.1L766 219.6L766.5 218.2L767 216.7L767.4 215.2L767.9 213.8L768.4 212.3L769 210.9L769.5 209.4L770 207.9L770.5 206.5L771.1 205L771.6 203.5L772.2 202.1L772.8 200.6L773.3 199.1L773.9 197.7L774.5 196.2L775.1 194.8L775.7 193.3L776.3 191.8L776.9 190.4L777.6 188.9L778.2 187.5L778.9 186L779.5 184.5L780.2 183.1L780.8 181.6L781.5 180.1L782.2 178.7L782.9 177.2L783.6 175.8L784.3 174.3L785 172.9L785.7 171.4L786.4 169.9L787.2 168.5L787.9 167L788.6 165.6L789.4 164.1L790.1 162.6L790.9 161.2L791.7 159.7L792.5 158.3L793.2 156.8L794 155.4L794.8 153.9L795.6 152.5L796.4 151L797.2 149.5L798.1 148.1L798.9 146.6L799.7 145.2L800.6 143.7L801.4 142.3L802.3 140.8L803.1 139.4L804 137.9L804.8 136.5L805.7 135L806.6 133.6L807.5 132.1L808.4 130.7L809.3 129.2L810.2 127.8L811.1 126.3L812 124.9L812.9 123.5L813.8 122L814.7 120.6L815.6 119.1L816.6 117.7L817.5 116.3L818.4 114.8L819.4 113.4L820.3 111.9L821.3 110.5L822.2 109.1L823.2 107.6L824.2 106.2L825.1 104.8L826.1 103.4L827.1 101.9L828 100.5L829 99.1L830 97.7L831 96.3L831.9 94.8L832.9 93.4L833.9 92L834.9 90.6L835.9 89.2L836.8 87.8L837.8 86.4L838.8 85L839.8 83.6L840.8 82.2L841.8 80.9L842.7 79.5L843.7 78.1L844.7 76.8L845.7 75.4L846.6 74.1L847.6 72.7L848.5 71.4L849.5 70.1L850.4 68.7L851.3 67.4L852.2 66.1L853.1 64.9L854 63.6L854.9 62.3L855.7 61.1L856.5 59.9L857.3 58.7L858.1 57.5L858.8 56.4L859.5 55.3L860.1 54.2L860.6 53.2L861.1 52.2L861.6 51.3L861.9 50.4L862.1 49.6L862.2 48.8L862.1 48.1L861.9 47.5L861.5 47L860.9 46.6L860.1 46.4L859.1 46.2L857.8 46.1L856.2 46.1L854.4 46.3L852.3 46.6L849.9 46.9L847.2 47.4L844.3 48L841.1 48.6L837.8 49.3L834.2 50.2L830.4 51L826.5 51.9L822.4 52.9M985.5 53.9L987.8 55L990.1 56.1L992.6 57.2L995.1 58.4L997.7 59.6L1000.4 60.8L1003.1 62L1005.8 63.2L1008.6 64.5L1011.5 65.8L1014.3 67.1" stroke="#a6f02a" stroke-width="1.39" stroke-dasharray="1.39 2.29" fill="none"/>
<path d="M759 246L758.6 244.8L758.2 243.5L757.8 242.3L757.4 241.1L757 239.9L756.6 238.6L756.3 237.4L755.9 236.2L755.6 235L755.2 233.8L754.9 232.6L754.5 231.3L754.2 230.1L753.8 228.9L753.5 227.7L753.2 226.5L752.9 225.3L752.6 224.1L752.3 222.9L752 221.7L751.7 220.5L751.4 219.3L751.1 218.1L750.8 217L750.5 215.8L750.3 214.6L750 213.4L749.7 212.2L749.5 211.1L749.2 209.9L749 208.7L748.7 207.6L748.5 206.4L748.3 205.3L748 204.1L747.8 202.9L747.6 201.8L747.4 200.7L747.1 199.5L746.9 198.4L746.7 197.2L746.5 196.1L746.3 195L746.1 193.9L745.9 192.7L745.7 191.6L745.5 190.5L745.3 189.4L745.2 188.3L745 187.2L744.8 186.1L744.6 185L744.4 183.9L744.3 182.9L744.1 181.8L743.9 180.7L743.7 179.6L743.6 178.6L743.4 177.5L743.2 176.5L743.1 175.4L742.9 174.4L742.7 173.4L742.6 172.3L742.4 171.3L742.2 170.3L742 169.3L741.9 168.3L741.7 167.3L741.5 166.3L741.3 165.3L741.2 164.4L741 163.4L740.8 162.4L740.6 161.5L740.4 160.6L740.2 159.6L740 158.7L739.8 157.8L739.6 156.9L739.4 156L739.2 155.1L738.9 154.2L738.7 153.3L738.5 152.4L738.2 151.6L738 150.7L737.7 149.9L737.4 149.1L737.2 148.3L736.9 147.5L736.6 146.7L736.3 145.9L735.9 145.1L735.6 144.4L735.3 143.6L734.9 142.9L734.5 142.2L734.2 141.4L733.8 140.7L733.4 140.1L732.9 139.4L732.5 138.7L732 138.1L731.6 137.5L731.1 136.8L730.6 136.2L730 135.7L729.5 135.1L728.9 134.5L728.3 134L727.7 133.5L727.1 132.9L726.4 132.5L725.8 132L725.1 131.5L724.3 131.1L723.6 130.6L722.8 130.2L722 129.8L721.2 129.5L720.3 129.1L719.4 128.8L718.5 128.4L717.6 128.1L716.6 127.9L715.6 127.6L714.6 127.4L713.5 127.1" stroke="#a6f02a" stroke-width="1.39" stroke-dasharray="1.39 2.29" fill="none"/>
<path d="M755 248L754.4 246.9L753.7 245.8L753.1 244.7L752.5 243.6L751.9 242.5L751.3 241.5L750.6 240.4L750 239.3L749.4 238.2L748.8 237.2L748.2 236.1L747.7 235L747.1 234L746.5 232.9L745.9 231.8L745.3 230.8L744.8 229.7L744.2 228.7L743.6 227.6L743.1 226.6L742.5 225.6L742 224.5L741.4 223.5L740.9 222.5L740.3 221.4L739.8 220.4L739.2 219.4L738.7 218.4L738.2 217.4L737.6 216.4L737.1 215.4L736.6 214.4L736.1 213.4L735.5 212.4L735 211.4L734.5 210.4L734 209.4L733.5 208.4L733 207.5L732.5 206.5L732 205.5L731.5 204.6L731 203.6L730.4 202.7L729.9 201.8L729.4 200.8L728.9 199.9L728.4 199L727.9 198L727.4 197.1L726.9 196.2L726.4 195.3L725.9 194.4L725.4 193.5L724.9 192.6L724.4 191.8L723.9 190.9L723.4 190L722.9 189.2L722.4 188.3L721.9 187.5L721.4 186.6L720.9 185.8L720.4 185L719.9 184.2L719.3 183.3L718.8 182.5L718.3 181.7L717.8 181L717.2 180.2L716.7 179.4L716.1 178.6L715.6 177.9L715 177.1L714.5 176.4L713.9 175.7L713.4 174.9L712.8 174.2L712.2 173.5L711.6 172.8L711 172.1" stroke="#a6f02a" stroke-width="1.39" stroke-dasharray="1.39 2.29" fill="none"/>
<path d="M912 44.5L913.1 45L914.1 45.6L915.2 46.2L916.3 46.9L917.4 47.5L918.5 48.2L919.6 48.9L920.7 49.6L921.9 50.3L923 51L924.2 51.8L925.4 52.5L926.5 53.3L927.7 54L928.9 54.8L930.1 55.6L931.3 56.4L932.5 57.2L933.8 58L935 58.8L936.2 59.6L937.4 60.4L938.7 61.2L939.9 62.1" stroke="#ffa500" stroke-width="1.7" fill="none"/>
<circle cx="940" cy="62" r="1.6" fill="#ff5050"/>
<path d="M922.2 34.3L922.1 34.5L922.2 34.7L922.4 35L922.7 35.4L923.1 35.7L923.6 36.1L924.2 36.6L924.8 37L925.4 37.5L926.1 38L926.8 38.5L927.6 39L928.4 39.6L929.2 40.1L930 40.7L930.8 41.2L931.7 41.8L932.5 42.4L933.4 43L934.3 43.6L935.2 44.2L936.1 44.8L937 45.4L937.9 46" stroke="#ffa500" stroke-width="1.7" fill="none"/>
<circle cx="938" cy="46" r="1.6" fill="#ff5050"/>
<path d="M910.2 129.7L910.7 129.8L911.2 129.9L911.7 130L912.2 130.1L912.8 130.2L913.3 130.3L913.8 130.5L914.3 130.6L914.9 130.7L915.4 130.8L915.9 131L916.4 131.1L917 131.2L917.5 131.4L918 131.5L918.5 131.6L919.1 131.8L919.6 131.9L920.1 132.1L920.6 132.2L921.2 132.4L921.7 132.5L922.2 132.7L922.7 132.9" stroke="#ffa500" stroke-width="1.7" fill="none"/>
<circle cx="922.7" cy="133.2" r="1.6" fill="#ff5050"/>
<path d="M1033.1 137.2L1034.8 138.5L1036.5 139.8L1038.2 141.1L1039.9 142.4L1041.6 143.7L1043.3 145L1045 146.3L1046.6 147.6L1048.3 148.9L1050 150.2L1051.6 151.5L1053.3 152.8L1054.9 154.1L1056.5 155.4L1058.1 156.7L1059.8 158L1061.4 159.3L1063 160.6L1064.6 161.9L1066.1 163.3L1067.7 164.6L1069.3 165.9L1070.9 167.2L1072.4 168.5" stroke="#ffa500" stroke-width="1.7" fill="none"/>
<circle cx="1072.8" cy="168.4" r="1.6" fill="#ff5050"/>
<path d="M1049.3 156.3L1050 156.8L1050.7 157.3L1051.4 157.9L1052.1 158.4L1052.8 158.9L1053.6 159.4L1054.3 160L1055 160.5L1055.7 161L1056.4 161.6L1057.1 162.1L1057.8 162.6L1058.5 163.2L1059.2 163.7L1059.9 164.2L1060.6 164.8L1061.3 165.3L1062 165.8L1062.7 166.4L1063.4 166.9L1064.1 167.4L1064.8 168L1065.5 168.5L1066.2 169" stroke="#ffa500" stroke-width="1.7" fill="none"/>
<circle cx="1065.7" cy="169.3" r="1.6" fill="#ff5050"/>
<path d="M1068.1 105.6L1068.4 105.9L1068.7 106.1L1068.9 106.3L1069.2 106.5L1069.5 106.7L1069.7 106.9L1070 107.1L1070.3 107.3L1070.5 107.5L1070.8 107.7L1071 107.9L1071.3 108.1L1071.6 108.4L1071.8 108.6L1072.1 108.8L1072.4 109L1072.6 109.2L1072.9 109.4L1073.2 109.6L1073.4 109.8L1073.7 110L1074 110.3L1074.2 110.5L1074.5 110.7" stroke="#ffa500" stroke-width="1.7" fill="none"/>
<circle cx="1077.3" cy="111.5" r="1.6" fill="#ff5050"/>
<path d="M831.7 78.9L832.4 78.4L833.1 78L833.8 77.6L834.5 77.1L835.2 76.7L835.9 76.3L836.5 75.8L837.2 75.4L837.9 75L838.6 74.5L839.3 74.1L840 73.7L840.7 73.3L841.4 72.8L842 72.4L842.7 72L843.4 71.5L844.1 71.1L844.8 70.7L845.5 70.3L846.2 69.8L846.8 69.4L847.5 69L848.2 68.5" stroke="#ffa500" stroke-width="1.7" fill="none"/>
<circle cx="848.8" cy="68.9" r="1.6" fill="#ff5050"/>
<path d="M720.5 136.3L720.7 136.1L720.9 135.9L721.1 135.7L721.3 135.5L721.6 135.3L721.8 135.1L722 135L722.2 134.8L722.4 134.6L722.7 134.4L722.9 134.2L723.1 134L723.3 133.8L723.5 133.6L723.8 133.4L724 133.2L724.2 133L724.4 132.9L724.6 132.7L724.9 132.5L725.1 132.3L725.3 132.1L725.5 131.9L725.7 131.7" stroke="#ffa500" stroke-width="1.7" fill="none"/>
<circle cx="726.2" cy="131.6" r="1.6" fill="#ff5050"/>
<path d="M946.8 41.5L947.9 41.9L948.9 42.4L950 42.8L951.1 43.3L952.3 43.7L953.4 44.2L954.6 44.7L955.7 45.2L956.9 45.7L958.1 46.2L959.3 46.7L960.5 47.2L961.7 47.7L963 48.2L964.2 48.7L965.4 49.2L966.7 49.7L967.9 50.2L969.2 50.7L970.4 51.2L971.7 51.7L973 52.3L974.2 52.8L975.5 53.3" stroke="#ff2000" stroke-width="1.7" fill="none"/>
<circle cx="976" cy="53.4" r="1.6" fill="#ff5050"/>
<path d="M1026.9 74.8L1027.5 75L1028.1 75.3L1028.7 75.5L1029.3 75.7L1029.8 76L1030.4 76.2L1031 76.5L1031.6 76.7L1032.2 76.9L1032.8 77.2L1033.3 77.4L1033.9 77.7L1034.5 77.9L1035.1 78.1L1035.7 78.4L1036.3 78.6L1036.8 78.9L1037.4 79.1L1038 79.3L1038.6 79.6L1039.2 79.8L1039.8 80.1L1040.3 80.3L1040.9 80.5" stroke="#ff2000" stroke-width="1.7" fill="none"/>
<circle cx="1039" cy="80.4" r="1.6" fill="#ff5050"/>
<path d="M1093.5 95.6L1094.6 96L1095.6 96.5L1096.7 97L1097.7 97.4L1098.8 97.9L1099.8 98.4L1100.9 98.9L1102 99.4L1103 99.8L1104.1 100.3L1105.1 100.8L1106.2 101.3L1107.2 101.7L1108.3 102.2L1109.3 102.7L1110.4 103.2L1111.4 103.7L1112.5 104.2L1113.5 104.6L1114.6 105.1L1115.6 105.6L1116.7 106.1L1117.7 106.6L1118.8 107.1" stroke="#ff2000" stroke-width="1.7" fill="none"/>
<circle cx="1119" cy="107.1" r="1.6" fill="#ff5050"/>
<path d="M898.9 104.8L899.3 104.3L899.7 103.8L900.2 103.4L900.6 102.9L901 102.5L901.4 102L901.8 101.6L902.3 101.2L902.7 100.7L903.1 100.3L903.5 99.8L903.9 99.4L904.4 99L904.8 98.5L905.2 98.1L905.6 97.7L906 97.3L906.5 96.8L906.9 96.4L907.3 96L907.7 95.6L908.1 95.2L908.6 94.8L909 94.4" stroke="#ff2000" stroke-width="1.7" fill="none"/>
<circle cx="908.4" cy="93.8" r="1.6" fill="#ff5050"/>
<path d="M966.7 107.3L967.2 107.3L967.8 107.3L968.3 107.2L968.8 107.2L969.3 107.2L969.9 107.2L970.4 107.1L970.9 107.1L971.5 107.1L972 107.1L972.5 107.1L973.1 107.1L973.6 107.1L974.2 107.1L974.8 107.1L975.3 107.1L975.9 107.2L976.4 107.2L977 107.2L977.6 107.2L978.1 107.3L978.7 107.3L979.3 107.3L979.9 107.4" stroke="#ff2000" stroke-width="1.7" fill="none"/>
<circle cx="980.4" cy="108" r="1.6" fill="#ff5050"/>
<path d="M1014.8 113L1016.1 113.4L1017.4 113.8L1018.6 114.3L1019.9 114.7L1021.2 115.1L1022.5 115.5L1023.9 116L1025.2 116.4L1026.5 116.9L1027.8 117.3L1029.2 117.8L1030.5 118.2L1031.9 118.7L1033.2 119.2L1034.6 119.7L1036 120.2L1037.3 120.6L1038.7 121.1L1040.1 121.6L1041.5 122.2L1042.9 122.7L1044.3 123.2L1045.7 123.7L1047.1 124.2" stroke="#ff2000" stroke-width="1.7" fill="none"/>
<circle cx="1047" cy="124" r="1.6" fill="#ff5050"/>
<path d="M826.5 82.2L826.9 81.4L827.2 80.5L827.5 79.6L827.8 78.7L828.1 77.9L828.4 77.1L828.6 76.3L828.8 75.5L829 74.7L829.2 74L829.3 73.2L829.4 72.5L829.4 71.9L829.5 71.2L829.4 70.6L829.4 69.9L829.3 69.4L829.1 68.8L828.9 68.3L828.7 67.8L828.4 67.3L828 66.9L827.6 66.5L827.1 66.1" stroke="#ff2000" stroke-width="1.7" fill="none"/>
<circle cx="825.8" cy="66.7" r="1.6" fill="#ff5050"/>
<path d="M733.6 158.7L733.4 158.5L733.2 158.3L733 158.1L732.8 157.9L732.6 157.7L732.4 157.5L732.2 157.3L732 157.1L731.8 156.9L731.6 156.7L731.4 156.5L731.2 156.3L731 156.1L730.8 155.9L730.6 155.7L730.4 155.5L730.1 155.4L729.9 155.2L729.7 155L729.5 154.8L729.3 154.6L729.1 154.4L728.9 154.2L728.6 154.1" stroke="#ff2000" stroke-width="1.7" fill="none"/>
<circle cx="728.9" cy="153.9" r="1.6" fill="#ff5050"/>
<path d="M885.3 71.6L885.7 71.5L886 71.5L886.4 71.4L886.8 71.4L887.2 71.4L887.6 71.4L887.9 71.3L888.3 71.3L888.7 71.3L889.1 71.3L889.4 71.3L889.8 71.3L890.2 71.3L890.6 71.3L890.9 71.3L891.3 71.3L891.7 71.3L892 71.3L892.4 71.3L892.8 71.3L893.1 71.4L893.5 71.4L893.9 71.4L894.2 71.4" stroke="#dc14f5" stroke-width="1.7" fill="none"/>
<circle cx="894.2" cy="71.5" r="1.6" fill="#ff5050"/>
<path d="M806.2 81.3L806.7 81L807.2 80.7L807.7 80.4L808.2 80.1L808.7 79.8L809.2 79.5L809.8 79.2L810.3 78.9L810.8 78.6L811.3 78.3L811.8 78L812.3 77.7L812.9 77.5L813.4 77.2L813.9 76.9L814.4 76.6L814.9 76.3L815.4 76L816 75.7L816.5 75.4L817 75.1L817.5 74.8L818 74.5L818.5 74.2" stroke="#dc14f5" stroke-width="1.7" fill="none"/>
<circle cx="818.6" cy="74.2" r="1.6" fill="#ff5050"/>
<path d="M777.7 77.2L778.1 76.9L778.5 76.6L779 76.2L779.4 75.9L779.8 75.6L780.2 75.3L780.6 75L781.1 74.7L781.5 74.4L781.9 74.1L782.2 73.8L782.6 73.6L783 73.3L783.4 73L783.7 72.7L784.1 72.4L784.5 72.1L784.8 71.9L785.1 71.6L785.5 71.3L785.8 71.1L786.1 70.8L786.4 70.5L786.7 70.3" stroke="#dc14f5" stroke-width="1.7" fill="none"/>
<circle cx="785.7" cy="70.6" r="1.6" fill="#ff5050"/>
<path d="M725.3 90.5L725.4 90.3L725.5 90.2L725.5 90L725.6 89.9L725.6 89.7L725.6 89.6L725.7 89.4L725.7 89.3L725.7 89.1L725.7 89L725.7 88.8L725.7 88.7L725.7 88.5L725.7 88.4L725.7 88.3L725.6 88.1L725.6 88L725.5 87.9L725.5 87.8L725.4 87.7L725.4 87.5L725.3 87.4L725.2 87.3L725.1 87.2" stroke="#dc14f5" stroke-width="1.7" fill="none"/>
<circle cx="727" cy="86.6" r="1.6" fill="#ff5050"/>
<path d="M1014.3 67.1L1015.7 67.7L1017 68.3L1018.3 68.9L1019.7 69.5L1021 70.1L1022.4 70.7L1023.7 71.3L1025.1 71.9L1026.4 72.5L1027.8 73.1L1029.2 73.7L1030.5 74.3L1031.9 74.9L1033.3 75.6L1034.7 76.2L1036 76.8L1037.4 77.4L1038.8 78.1L1040.2 78.7L1041.6 79.3L1043 79.9L1044.3 80.6L1045.7 81.2L1047.1 81.8" stroke="#a6f02a" stroke-width="1.7" fill="none"/>
<circle cx="1047" cy="81.8" r="1.6" fill="#ff5050"/>
<path d="M713.5 127.1L713.2 127.1L712.9 127L712.5 126.9L712.2 126.9L711.9 126.8L711.5 126.8L711.2 126.7L710.9 126.7L710.5 126.6L710.2 126.6L709.8 126.5L709.5 126.5L709.1 126.4L708.8 126.4L708.4 126.3L708 126.3L707.7 126.3L707.3 126.2L706.9 126.2L706.5 126.2L706.2 126.1L705.8 126.1L705.4 126.1L705 126.1" stroke="#a6f02a" stroke-width="1.7" fill="none"/>
<circle cx="705.7" cy="125.7" r="1.6" fill="#ff5050"/>
<path d="M711 172.1L710.9 172L710.8 171.9L710.7 171.8L710.6 171.7L710.5 171.6L710.4 171.5L710.3 171.4L710.2 171.3L710.2 171.2L710.1 171.1L710 170.9L709.9 170.8L709.8 170.7L709.7 170.6L709.6 170.5L709.5 170.4L709.4 170.3L709.3 170.2L709.2 170.1L709.1 170L709 169.9L708.9 169.8L708.8 169.7L708.7 169.6" stroke="#a6f02a" stroke-width="1.7" fill="none"/>
<circle cx="708" cy="170" r="1.6" fill="#ff5050"/>
<path d="M713 90.5L744.8 80.1" stroke="#8a8a8a" stroke-width="1.3" fill="none"/>
<path d="M699.6 100.3L708.7 100.3" stroke="#8a8a8a" stroke-width="1.3" fill="none"/>
<path d="M785.7 83.8L802.2 78.3" stroke="#8a8a8a" stroke-width="1.3" fill="none"/>
<path d="M863.4 82.6L881.7 73.4" stroke="#8a8a8a" stroke-width="1.3" fill="none"/>
<path d="M728.9 115.6L741.7 108.6" stroke="#8a8a8a" stroke-width="1.3" fill="none"/>
<path d="M756.7 106.2L763.3 102.1" stroke="#8a8a8a" stroke-width="1.3" fill="none"/>
<path d="M938.6 44.9L989.3 62.7" stroke="#8a8a8a" stroke-width="1.3" fill="none"/>
<path d="M909.1 94L927.7 108" stroke="#8a8a8a" stroke-width="1.3" fill="none"/>
<path d="M1041.3 95.6L1052.2 106.4" stroke="#8a8a8a" stroke-width="1.3" fill="none"/>
<path d="M1115.3 104.3L1127 106.7" stroke="#8a8a8a" stroke-width="1.3" fill="none"/>
<path d="M1113.8 105.1L1125.4 115.2" stroke="#8a8a8a" stroke-width="1.3" fill="none"/>
<path d="M994.6 87L1004 87.8" stroke="#8a8a8a" stroke-width="1.3" fill="none"/>
<path d="M1022.6 137.5L1032 132.9" stroke="#8a8a8a" stroke-width="1.3" fill="none"/>
<path d="M899.8 86.2L902.9 95.6" stroke="#8a8a8a" stroke-width="1.3" fill="none"/>
<path d="M909 80L913 86.2" stroke="#8a8a8a" stroke-width="1.3" fill="none"/>
<path d="M959.6 115L958 120.4" stroke="#8a8a8a" stroke-width="1.3" fill="none"/>
<path d="M724.4 141.1L733.3 135.6" stroke="#8a8a8a" stroke-width="1.3" fill="none"/>
<path d="M582.1 230.3L583.2 229L584.4 227.7L585.7 226.4L587 225.1L588.4 223.8L589.9 222.6L591.5 221.3L593.1 220.1L594.7 218.9L596.4 217.8L598.2 216.6L600 215.5L601.8 214.4L603.6 213.4L605.5 212.4L607.3 211.5L609.2 210.6L611.1 209.8L612.9 209L614.7 208.3L616.5 207.6L618.3 207L620 206.5L621.7 206L623.4 205.6L625 205.3L626.5 205L628 204.8L629.4 204.7L630.7 204.7L631.9 204.7L633.1 204.8L634.2 205L635.2 205.3L636.1 205.6L636.9 206L637.7 206.5L638.3 207L638.9 207.6L639.4 208.3L639.7 209L640 209.8L640.2 210.6L640.3 211.5L640.3 212.4L640.3 213.4L640.1 214.4L639.9 215.5L639.6 216.6L639.2 217.8L638.7 218.9L638.2 220.1L637.6 221.3L636.9 222.6L636.1 223.8L635.3 225.1L634.4 226.4L633.5 227.7L632.5 229L631.5 230.3L630.4 231.5L629.2 232.8L628.1 234.1L626.8 235.3L625.6 236.6L624.3 237.8L622.9 239L621.6 240.1L620.2 241.3L618.7 242.4L617.3 243.4L615.8 244.4L614.4 245.4L612.9 246.4L611.4 247.3L609.8 248.1L608.3 248.9L606.8 249.6L605.3 250.3L603.8 251L602.2 251.6L600.7 252.1L599.3 252.6L597.8 253L596.3 253.3L594.9 253.6L593.5 253.8L592.1 254L590.8 254.1L589.5 254.1L588.2 254.1L587 254L585.8 253.8L584.7 253.6L583.6 253.3L582.6 253L581.6 252.6L580.7 252.1L579.9 251.6L579.1 251L578.5 250.3L577.8 249.6L577.3 248.9L576.9 248.1L576.5 247.3L576.2 246.4L576 245.4L575.9 244.4L575.9 243.4L576 242.4L576.2 241.3L576.5 240.1L576.9 239L577.3 237.8L577.9 236.6L578.5 235.3L579.3 234.1L580.1 232.8L581.1 231.5L582.1 230.3Z" stroke="#dc14f5" stroke-width="2.1" fill="none"/>
<path d="M584.2 269.6L584.8 268.3L585.5 267L586.3 265.7L587.1 264.5L588 263.2L589 262L590.1 260.7L591.2 259.5L592.3 258.4L593.6 257.2L594.8 256.1L596.2 255L597.5 254L599 253L600.4 252L601.9 251.1L603.3 250.3L604.8 249.5L606.4 248.7L607.9 248L609.4 247.4L610.9 246.8L612.4 246.3L613.9 245.9L615.4 245.5L616.8 245.2L618.2 244.9L619.6 244.7L620.9 244.6L622.2 244.6L623.5 244.6L624.7 244.7L625.9 244.9L627 245.2L628 245.5L629 245.9L629.9 246.3L630.8 246.8L631.6 247.4L632.3 248L633 248.7L633.6 249.5L634.1 250.3L634.6 251.1L635 252L635.3 253L635.5 254L635.7 255L635.9 256.1L635.9 257.2L635.9 258.4L635.9 259.5L635.7 260.7L635.5 262L635.3 263.2L635 264.5L634.6 265.7L634.2 267L633.7 268.3L633.2 269.6L632.6 270.8L631.9 272.1L631.3 273.4L630.5 274.6L629.7 275.8L628.9 277.1L628 278.2L627.1 279.4L626.2 280.6L625.2 281.7L624.2 282.7L623.1 283.8L622 284.8L620.9 285.7L619.7 286.6L618.5 287.5L617.3 288.3L616.1 289.1L614.9 289.8L613.6 290.4L612.3 291L611 291.5L609.7 292L608.4 292.4L607.1 292.8L605.8 293.1L604.5 293.3L603.2 293.5L601.9 293.6L600.6 293.6L599.3 293.6L598.1 293.5L596.9 293.3L595.7 293.1L594.5 292.8L593.3 292.4L592.2 292L591.2 291.5L590.2 291L589.2 290.4L588.3 289.8L587.4 289.1L586.6 288.3L585.8 287.5L585.2 286.6L584.6 285.7L584 284.8L583.5 283.8L583.1 282.7L582.8 281.7L582.6 280.6L582.4 279.4L582.4 278.2L582.4 277.1L582.5 275.8L582.7 274.6L582.9 273.4L583.3 272.1L583.7 270.8L584.2 269.6Z" stroke="#ffa500" stroke-width="2.1" fill="none"/>
<path d="M726.6 248.2L727.1 246.9L727.6 245.6L728.2 244.3L728.9 243.1L729.6 241.8L730.4 240.6L731.3 239.3L732.3 238.1L733.2 236.9L734.3 235.8L735.4 234.7L736.6 233.6L737.8 232.5L739 231.5L740.3 230.5L741.6 229.6L742.9 228.8L744.3 227.9L745.6 227.2L747 226.5L748.4 225.8L749.8 225.2L751.2 224.7L752.6 224.3L754 223.9L755.4 223.6L756.8 223.3L758.1 223.1L759.4 223L760.7 223L762 223L763.2 223.1L764.4 223.3L765.5 223.6L766.7 223.9L767.7 224.3L768.7 224.7L769.7 225.2L770.6 225.8L771.4 226.5L772.2 227.2L773 227.9L773.7 228.8L774.3 229.6L774.8 230.5L775.3 231.5L775.8 232.5L776.1 233.6L776.4 234.7L776.7 235.8L776.9 236.9L777 238.1L777 239.3L777 240.6L776.9 241.8L776.8 243.1L776.6 244.3L776.3 245.6L776 246.9L775.6 248.2L775.1 249.4L774.6 250.7L774 252L773.4 253.2L772.7 254.4L772 255.6L771.2 256.8L770.4 258L769.5 259.1L768.6 260.2L767.6 261.3L766.6 262.3L765.6 263.3L764.5 264.2L763.4 265.1L762.3 266L761.1 266.8L759.9 267.5L758.7 268.2L757.4 268.9L756.1 269.4L754.9 270L753.6 270.4L752.3 270.9L751 271.2L749.7 271.5L748.4 271.7L747.1 271.9L745.8 272L744.5 272L743.2 272L742 271.9L740.7 271.7L739.5 271.5L738.3 271.2L737.2 270.9L736.1 270.4L735 270L734 269.4L733 268.9L732.1 268.2L731.2 267.5L730.3 266.8L729.6 266L728.8 265.1L728.2 264.2L727.6 263.3L727.1 262.3L726.6 261.3L726.2 260.2L725.9 259.1L725.7 258L725.5 256.8L725.5 255.6L725.5 254.4L725.5 253.2L725.7 252L725.9 250.7L726.2 249.4L726.6 248.2Z" stroke="#a6f02a" stroke-width="2.1" fill="none"/>
<path d="M752.2 283.5L752.4 282.2L752.7 281L753 279.7L753.4 278.5L753.9 277.2L754.5 276L755.1 274.8L755.8 273.6L756.6 272.4L757.4 271.3L758.2 270.2L759.2 269.1L760.1 268.1L761.2 267.1L762.2 266.1L763.3 265.2L764.5 264.4L765.6 263.6L766.9 262.9L768.1 262.2L769.3 261.5L770.6 261L771.9 260.5L773.2 260L774.5 259.7L775.8 259.4L777.1 259.1L778.4 258.9L779.7 258.8L781 258.8L782.2 258.8L783.5 258.9L784.7 259.1L785.9 259.4L787.1 259.7L788.2 260L789.3 260.5L790.4 261L791.4 261.5L792.4 262.2L793.3 262.9L794.2 263.6L795.1 264.4L795.9 265.2L796.6 266.1L797.3 267.1L798 268.1L798.6 269.1L799.1 270.2L799.6 271.3L800 272.4L800.3 273.6L800.6 274.8L800.8 276L801 277.2L801.1 278.5L801.2 279.7L801.1 281L801.1 282.2L800.9 283.5L800.7 284.8L800.5 286.1L800.1 287.3L799.8 288.6L799.3 289.8L798.8 291L798.3 292.2L797.7 293.4L797 294.5L796.3 295.6L795.5 296.7L794.7 297.7L793.8 298.7L792.9 299.7L792 300.6L791 301.5L790 302.3L788.9 303L787.8 303.7L786.7 304.4L785.5 305L784.4 305.5L783.2 306L781.9 306.4L780.7 306.8L779.4 307.1L778.2 307.3L776.9 307.5L775.6 307.6L774.4 307.6L773.1 307.6L771.8 307.5L770.6 307.3L769.3 307.1L768.1 306.8L766.9 306.4L765.7 306L764.6 305.5L763.5 305L762.4 304.4L761.3 303.7L760.3 303L759.4 302.3L758.4 301.5L757.6 300.6L756.8 299.7L756 298.7L755.3 297.7L754.7 296.7L754.1 295.6L753.6 294.5L753.2 293.4L752.8 292.2L752.5 291L752.2 289.8L752.1 288.6L752 287.3L752 286.1L752 284.8L752.2 283.5Z" stroke="#ff2000" stroke-width="2.1" fill="none"/>
<path d="M586.1 234.4h6.6M589.4 231.1v6.6M594.5 229.4h6.6M597.8 226.1v6.6M598.9 231.7h6.6M602.2 228.4v6.6M613.4 232.8h6.6M616.7 229.5v6.6M604.5 270h6.6M607.8 266.7v6.6M607.3 271.1h6.6M610.6 267.8v6.6M610 269.4h6.6M613.3 266.1v6.6M611.1 271.1h6.6M614.4 267.8v6.6M622.8 266.7h6.6M626.1 263.4v6.6M624.5 266.4h6.6M627.8 263.1v6.6M755.6 246.1h6.6M758.9 242.8v6.6M770 232.8h6.6M773.3 229.5v6.6M776.7 282.8h6.6M780 279.5v6.6M777.8 286.1h6.6M781.1 282.8v6.6M788.4 275.6h6.6M791.7 272.3v6.6M793.4 288.3h6.6M796.7 285v6.6" stroke="#ff0000" stroke-width="1.4" fill="none"/>
<text x="607.5" y="232.6" fill="#fff" font-size="10.8" text-anchor="middle">EGE</text>
<text x="608.9" y="272.3" fill="#fff" font-size="10.8" text-anchor="middle">ORI</text>
<text x="751.3" y="250.7" fill="#fff" font-size="10.8" text-anchor="middle">CTA</text>
<text x="776.6" y="286.4" fill="#fff" font-size="10.8" text-anchor="middle">STA</text>
<g fill="#ffffff" font-family="Liberation Mono, monospace" font-size="13.85"><text x="315.5" y="29.8" xml:space="preserve">GR0002</text><text x="315.5" y="42.8" xml:space="preserve">Beg: 20251018 19:01:56 (sol = 205.30°)</text><text x="315.5" y="56.9" xml:space="preserve">End: 20251019 01:34:52 (sol = 205.57°)</text><text x="315.5" y="68.7" xml:space="preserve">--------------------------------------</text><text x="315.5" y="81.9" xml:space="preserve">...: 23</text><text x="315.5" y="94.7" xml:space="preserve">ORI: 9</text><text x="315.5" y="107.4" xml:space="preserve">STA: 8</text><text x="315.5" y="121.4" xml:space="preserve">EGE: 4</text><text x="315.5" y="134.6" xml:space="preserve">CTA: 3</text></g>
<g fill="#545454" font-size="30" text-anchor="end"><text transform="translate(150 643.5) rotate(-90)" textLength="55.9" lengthAdjust="spacingAndGlyphs">APR</text><text transform="translate(295 643.5) rotate(-90)" textLength="59.5" lengthAdjust="spacingAndGlyphs">MAY</text><text transform="translate(435.8 643.5) rotate(-90)" textLength="51.2" lengthAdjust="spacingAndGlyphs">JUN</text><text transform="translate(578 643.5) rotate(-90)" textLength="44.5" lengthAdjust="spacingAndGlyphs">JUL</text><text transform="translate(724 643.5) rotate(-90)" textLength="59.6" lengthAdjust="spacingAndGlyphs">AUG</text><text transform="translate(872.2 643.5) rotate(-90)" textLength="50.9" lengthAdjust="spacingAndGlyphs">SEP</text><text transform="translate(1016 643.5) rotate(-90)" textLength="58.8" lengthAdjust="spacingAndGlyphs">OCT</text><text transform="translate(1169.3 643.5) rotate(-90)" textLength="60.3" lengthAdjust="spacingAndGlyphs">NOV</text><text transform="translate(1318.4 643.5) rotate(-90)" textLength="55.1" lengthAdjust="spacingAndGlyphs">DEC</text><text transform="translate(1470 643.5) rotate(-90)" textLength="43.6" lengthAdjust="spacingAndGlyphs">JAN</text><text transform="translate(1628.8 643.5) rotate(-90)" textLength="51.2" lengthAdjust="spacingAndGlyphs">FEB</text><text transform="translate(1766.4 643.5) rotate(-90)" textLength="59.5" lengthAdjust="spacingAndGlyphs">MAR</text></g>
<path d="M106 834H128.8M165 834H345M365.9 834H625M635.1 834H786M807 834H899M920 834H973M983.9 834H1065.9M1081.9 834H1203M1244 834H1326M1337 834H1355M1380.9 834H1443.8M1459 834H1511.8M1523 834H1547M1723.8 834H1748M1758 834H1782" stroke="#e882e8" stroke-width="4" fill="none"/>
<path d="M165 817.7H187.9M222.9 817.7H285.9M311.9 817.7H339.9M365.9 817.7H491.9M507.8 817.7H654.1M703.9 817.7H736.9M772.8 817.7H845M870.8 817.7H987.9M1002.9 817.7H1017M1061.9 817.7H1212.8M1244 817.7H1267M1292.9 817.7H1315.9M1342 817.7H1365M1386 817.7H1429M1459 817.7H1482.8M1548 817.7H1571" stroke="#dd16f0" stroke-width="4" fill="none"/>
<path d="M165 801.4H187.9M258 801.4H487M507.8 801.4H615M626 801.4H717.9M729 801.4H826M948.9 801.4H1149M1160 801.4H1247.8M1257.8 801.4H1443.8M1459 801.4H1482.8M1552 801.4H1576" stroke="#ff2200" stroke-width="4" fill="none"/>
<path d="M193.8 785.1H217.9M320.9 785.1H507.1M518 785.1H541M557 785.1H682.8M807 785.1H831M954 785.1H973M988 785.1H1125M1155 785.1H1217.9M1244 785.1H1267M1317 785.1H1341M1395.9 785.1H1418.9M1463.9 785.1H1650" stroke="#ffaa18" stroke-width="4" fill="none"/>
<path d="M340.8 768.8H369.9M410 768.8H448M468.9 768.8H491.9M527 768.8H545.8M561.9 768.8H589.9M615.9 768.8H649M959 768.8H988M1061.9 768.8H1086M1101 768.8H1125M1160 768.8H1193.8M1247.8 768.8H1271.9M1425 768.8H1511.8" stroke="#ffea00" stroke-width="4" fill="none"/>
<path d="M420 752.5H442.7M531.9 752.5H556M566.9 752.5H589.9M620.8 752.5H741.9M968.9 752.5H1135.1M1185 752.5H1346M1468.9 752.5H1493" stroke="#a6f02a" stroke-width="4" fill="none"/>
<path d="M429 736.1H453M576 736.1H732.8M993 736.1H1104.9M1115.9 736.1H1222.9M1262.8 736.1H1292M1489 736.1H1512" stroke="#5ad200" stroke-width="4" fill="none"/>
<path d="M591 719.8H615M655 719.8H772M1072 719.8H1243M1262.8 719.8H1287" stroke="#00ee78" stroke-width="4" fill="none"/>
<path d="M596 703.5H732.8M1091 703.5H1119.9M1198.9 703.5H1222.9M1272.8 703.5H1326" stroke="#00dcf0" stroke-width="4" fill="none"/>
<path d="M1111 687.2H1134.7" stroke="#0020c8" stroke-width="4" fill="none"/>
<path d="M73.9 641.7V842.2M217.9 641.7V842.2M364.8 641.7V842.2M504.6 641.7V842.2M649.9 641.7V842.2M796.9 641.7V842.2M940 641.7V842.2M1091 641.7V842.2M1239 641.7V842.2M1394 641.7V842.2M1548 641.7V842.2M1686.8 641.7V842.2" stroke="#808080" stroke-width="2.08" stroke-dasharray="2.08 3.44" fill="none"/>
<path d="M113 834h8M117 830v8M241 834h8M245 830v8M510.6 834h8M514.6 830v8M706.7 834h8M710.7 830v8M832.6 834h8M836.6 830v8M961.7 834h8M965.7 830v8M985.8 834h8M989.8 830v8M1115.9 834h8M1119.9 830v8M1294.5 834h8M1298.5 830v8M1341.6 834h8M1345.6 830v8M1412.8 834h8M1416.8 830v8M1481.8 834h8M1485.8 830v8M1531 834h8M1535 830v8M1731.8 834h8M1735.8 830v8M1766 834h8M1770 830v8M171.9 817.7h8M175.9 813.7v8M255.5 817.7h8M259.5 813.7v8M323 817.7h8M327 813.7v8M437 817.7h8M441 813.7v8M598.8 817.7h8M602.8 813.7v8M716.8 817.7h8M720.8 813.7v8M792.9 817.7h8M796.9 813.7v8M938.5 817.7h8M942.5 813.7v8M1006 817.7h8M1010 813.7v8M1152.6 817.7h8M1156.6 813.7v8M1250.8 817.7h8M1254.8 813.7v8M1299.8 817.7h8M1303.8 813.7v8M1348.8 817.7h8M1352.8 813.7v8M1402.6 817.7h8M1406.6 813.7v8M1466.8 817.7h8M1470.8 813.7v8M1555 817.7h8M1559 813.7v8M173.5 801.4h8M177.5 797.4v8M378 801.4h8M382 797.4v8M545 801.4h8M549 797.4v8M681.8 801.4h8M685.8 797.4v8M740.9 801.4h8M744.9 797.4v8M1074.7 801.4h8M1078.7 797.4v8M1216.8 801.4h8M1220.8 797.4v8M1304.7 801.4h8M1308.7 797.4v8M1466.8 801.4h8M1470.8 797.4v8M1559.8 801.4h8M1563.8 797.4v8M201.8 785.1h8M205.8 781.1v8M399.7 785.1h8M403.7 781.1v8M524.8 785.1h8M528.8 781.1v8M639 785.1h8M643 781.1v8M814.8 785.1h8M818.8 781.1v8M958.8 785.1h8M962.8 781.1v8M1039.5 785.1h8M1043.5 781.1v8M1187.7 785.1h8M1191.7 781.1v8M1250.8 785.1h8M1254.8 781.1v8M1324.7 785.1h8M1328.7 781.1v8M1402.6 785.1h8M1406.6 781.1v8M1545.5 785.1h8M1549.5 781.1v8M355.8 768.8h8M359.8 764.8v8M425.6 768.8h8M429.6 764.8v8M476 768.8h8M480 764.8v8M534.8 768.8h8M538.8 764.8v8M570.7 768.8h8M574.7 764.8v8M630.7 768.8h8M634.7 764.8v8M974 768.8h8M978 764.8v8M1069.7 768.8h8M1073.7 764.8v8M1109 768.8h8M1113 764.8v8M1178 768.8h8M1182 764.8v8M1255.7 768.8h8M1259.7 764.8v8M1466.8 768.8h8M1470.8 764.8v8M427 752.5h8M431 748.5v8M539.7 752.5h8M543.7 748.5v8M573.7 752.5h8M577.7 748.5v8M704 752.5h8M708 748.5v8M1093.7 752.5h8M1097.7 748.5v8M1270.7 752.5h8M1274.7 748.5v8M1477 752.5h8M1481 748.5v8M437 736.1h8M441 732.1v8M630.7 736.1h8M634.7 732.1v8M1038.5 736.1h8M1042.5 732.1v8M1168 736.1h8M1172 732.1v8M1274.8 736.1h8M1278.8 732.1v8M1496.8 736.1h8M1500.8 732.1v8M598.8 719.8h8M602.8 715.8v8M727 719.8h8M731 715.8v8M1187.7 719.8h8M1191.7 715.8v8M1270.7 719.8h8M1274.7 715.8v8M687 703.5h8M691 699.5v8M1102 703.5h8M1106 699.5v8M1206.7 703.5h8M1210.7 699.5v8M1299.8 703.5h8M1303.8 699.5v8M1118.9 687.2h8M1122.9 683.2v8" stroke="#fff" stroke-width="2" fill="none"/>
<g fill="#fff" font-size="11" text-anchor="middle"><text x="117.9" y="831">KSE</text><text x="255.5" y="831">ETA</text><text x="495.9" y="831">NZC</text><text x="711" y="831">NDA</text><text x="853.5" y="831">SPE</text><text x="947" y="831">ARD</text><text x="1025.4" y="831">EGE</text><text x="1143" y="831">NTA</text><text x="1285.5" y="831">MON</text><text x="1346.5" y="831">URS</text><text x="1412.8" y="831">AHY</text><text x="1485.9" y="831">GUM</text><text x="1535.5" y="831">OHY</text><text x="1736.4" y="831">XHE</text><text x="1770.5" y="831">EVI</text><text x="176.9" y="814.7">AVB</text><text x="254.9" y="814.7">ELY</text><text x="326.4" y="814.7">CAM</text><text x="429.4" y="814.7">SSG</text><text x="581.5" y="814.7">PCA</text><text x="720.9" y="814.7">AUD</text><text x="809.4" y="814.7">AUR</text><text x="929.8" y="814.7">DSX</text><text x="1010.5" y="814.7">OCU</text><text x="1137.8" y="814.7">OER</text><text x="1256" y="814.7">DKD</text><text x="1304.9" y="814.7">DSV</text><text x="1354" y="814.7">ALY</text><text x="1408" y="814.7">JLE</text><text x="1471.4" y="814.7">SCC</text><text x="1560" y="814.7">FEV</text><text x="176.9" y="798.4">LYR</text><text x="373" y="798.4">JMC</text><text x="561.9" y="798.4">JPE</text><text x="672.5" y="798.4">PAU</text><text x="778" y="798.4">NIA</text><text x="1049.5" y="798.4">STA</text><text x="1204.4" y="798.4">NOO</text><text x="1351.3" y="798.4">COM</text><text x="1471.4" y="798.4">NCC</text><text x="1564.5" y="798.4">FED</text><text x="206.4" y="782.1">HVI</text><text x="414.5" y="782.1">ARI</text><text x="530" y="782.1">SZC</text><text x="620.4" y="782.1">CAP</text><text x="819.5" y="782.1">NUE</text><text x="964" y="782.1">OCT</text><text x="1057" y="782.1">ORI</text><text x="1187" y="782.1">AMO</text><text x="1256" y="782.1">DPC</text><text x="1329.5" y="782.1">XVI</text><text x="1407.9" y="782.1">QUA</text><text x="1557.5" y="782.1">AAN</text><text x="355.9" y="765.8">TAH</text><text x="429.5" y="765.8">JEA</text><text x="480.9" y="765.8">JIP</text><text x="536.9" y="765.8">PPS</text><text x="576.4" y="765.8">ZCS</text><text x="633" y="765.8">GDR</text><text x="974" y="765.8">DRA</text><text x="1074.5" y="765.8">LUM</text><text x="1113.5" y="765.8">RPU</text><text x="1177.4" y="765.8">THA</text><text x="1260.3" y="765.8">PSU</text><text x="1468.9" y="765.8">XCB</text><text x="431.9" y="749.5">IRC</text><text x="544.5" y="749.5">CAN</text><text x="578.9" y="749.5">FAN</text><text x="681.8" y="749.5">PER</text><text x="1052.5" y="749.5">CTA</text><text x="1266" y="749.5">HYD</text><text x="1481.5" y="749.5">XUM</text><text x="441.5" y="733.1">COR</text><text x="654.9" y="733.1">SDA</text><text x="1049.5" y="733.1">LMI</text><text x="1169.9" y="733.1">LEO</text><text x="1277.9" y="733.1">EHY</text><text x="1501" y="733.1">ECV</text><text x="603.5" y="716.8">JXA</text><text x="714" y="716.8">KCG</text><text x="1158" y="716.8">AND</text><text x="1275.4" y="716.8">DAD</text><text x="664.9" y="700.5">ERI</text><text x="1106" y="700.5">SLD</text><text x="1211.4" y="700.5">ORS</text><text x="1299.9" y="700.5">GEM</text><text x="1123.3" y="684.2">KUM</text></g>
<path d="M1026.4 641.7V842.2M1028.5 641.7V842.2" stroke="#ff0000" stroke-width="1.25" stroke-dasharray="4.9 2.4" stroke-dashoffset="3.0" fill="none"/>
<rect x="19.7" y="641.7" width="1765.7" height="200.5" fill="none" stroke="#fff" stroke-width="1.1"/>
<path d="M19.7 842.2v4.9M264.9 842.2v4.9M510.2 842.2v4.9M755.4 842.2v4.9M1000.6 842.2v4.9M1245.9 842.2v4.9M1491.1 842.2v4.9M1736.3 842.2v4.9" stroke="#fff" stroke-width="1.1" fill="none"/>
<g fill="#fff" font-size="14" text-anchor="middle"><text x="19.7" y="862.2">0</text><text x="264.9" y="862.2">50</text><text x="510.2" y="862.2">100</text><text x="755.4" y="862.2">150</text><text x="1000.6" y="862.2">200</text><text x="1245.9" y="862.2">250</text><text x="1491.1" y="862.2">300</text><text x="1736.3" y="862.2">350</text><text x="902" y="881" textLength="146" lengthAdjust="spacingAndGlyphs">Solar longitude (deg)</text></g>
</svg></body></html>
